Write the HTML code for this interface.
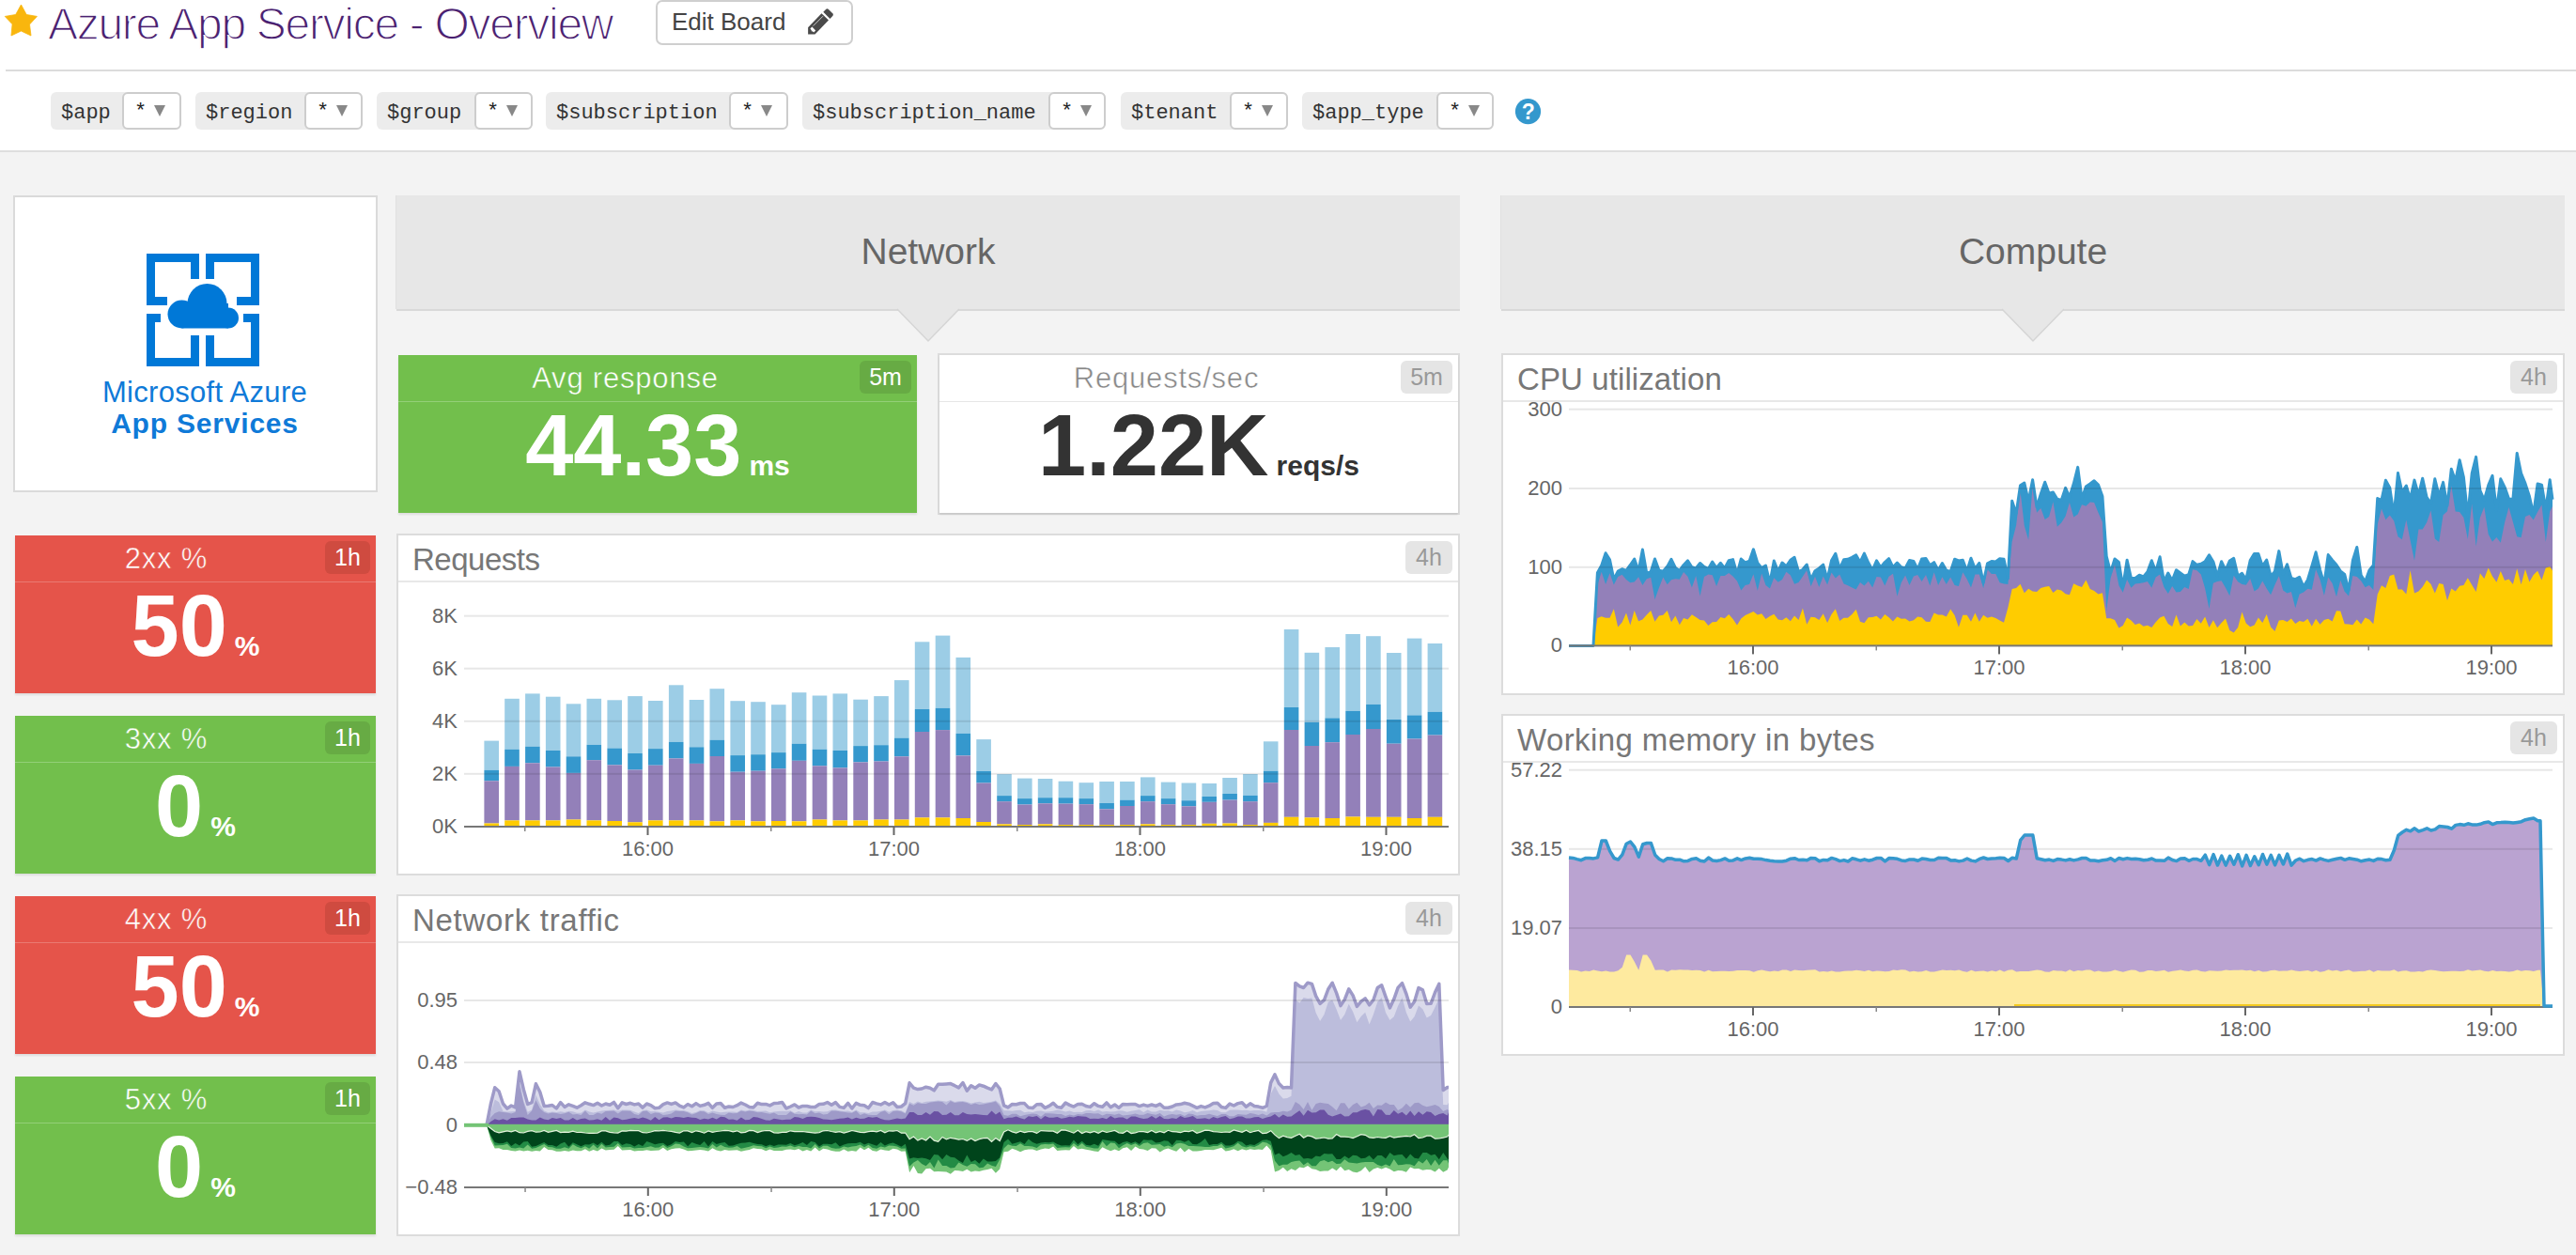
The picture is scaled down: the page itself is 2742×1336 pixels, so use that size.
<!DOCTYPE html>
<html><head><meta charset="utf-8"><title>Azure App Service - Overview</title>
<style>
html,body{margin:0;padding:0;}
body{width:2742px;height:1336px;position:relative;overflow:hidden;background:#f3f3f3;font-family:'Liberation Sans', sans-serif;}
</style></head><body>

<div style="position:absolute;left:0;top:0;width:2742px;height:160px;background:#fff"></div>
<div style="position:absolute;left:6px;top:74px;width:2736px;height:2px;background:#dcdcdc"></div>
<div style="position:absolute;left:0;top:160px;width:2742px;height:2px;background:#dedede"></div>
<div style="position:absolute;left:51px;top:-2px;font:48px 'Liberation Sans', sans-serif;letter-spacing:-1.3px;color:#4a2170;-webkit-text-stroke:1.4px #fff;white-space:nowrap;line-height:56px">Azure App Service - Overview</div><div style="position:absolute;left:698px;top:0px;width:206px;height:44px;border:2px solid #cfcfcf;border-radius:7px;background:#fff"></div>
<div style="position:absolute;left:715px;top:6px;font:26px 'Liberation Sans', sans-serif;color:#444;white-space:nowrap;line-height:34px">Edit Board</div><div style="position:absolute;left:54px;top:98px;width:139px;height:40px;background:#ececec;border-radius:6px"></div>
<div style="position:absolute;left:65px;top:106px;font:22px 'Liberation Mono', monospace;color:#333;white-space:nowrap;line-height:30px">$app</div>
<div style="position:absolute;left:130px;top:98px;width:59px;height:36px;border:2px solid #cdcdcd;border-radius:6px;background:#fff"></div>
<div style="position:absolute;left:143px;top:105px;font:22px 'Liberation Mono', monospace;color:#222;white-space:nowrap;line-height:30px">*</div><div style="position:absolute;left:208px;top:98px;width:178px;height:40px;background:#ececec;border-radius:6px"></div>
<div style="position:absolute;left:219px;top:106px;font:22px 'Liberation Mono', monospace;color:#333;white-space:nowrap;line-height:30px">$region</div>
<div style="position:absolute;left:324px;top:98px;width:58px;height:36px;border:2px solid #cdcdcd;border-radius:6px;background:#fff"></div>
<div style="position:absolute;left:337px;top:105px;font:22px 'Liberation Mono', monospace;color:#222;white-space:nowrap;line-height:30px">*</div><div style="position:absolute;left:401px;top:98px;width:166px;height:40px;background:#ececec;border-radius:6px"></div>
<div style="position:absolute;left:412px;top:106px;font:22px 'Liberation Mono', monospace;color:#333;white-space:nowrap;line-height:30px">$group</div>
<div style="position:absolute;left:505px;top:98px;width:58px;height:36px;border:2px solid #cdcdcd;border-radius:6px;background:#fff"></div>
<div style="position:absolute;left:518px;top:105px;font:22px 'Liberation Mono', monospace;color:#222;white-space:nowrap;line-height:30px">*</div><div style="position:absolute;left:581px;top:98px;width:258px;height:40px;background:#ececec;border-radius:6px"></div>
<div style="position:absolute;left:592px;top:106px;font:22px 'Liberation Mono', monospace;color:#333;white-space:nowrap;line-height:30px">$subscription</div>
<div style="position:absolute;left:776px;top:98px;width:59px;height:36px;border:2px solid #cdcdcd;border-radius:6px;background:#fff"></div>
<div style="position:absolute;left:789px;top:105px;font:22px 'Liberation Mono', monospace;color:#222;white-space:nowrap;line-height:30px">*</div><div style="position:absolute;left:854px;top:98px;width:323px;height:40px;background:#ececec;border-radius:6px"></div>
<div style="position:absolute;left:865px;top:106px;font:22px 'Liberation Mono', monospace;color:#333;white-space:nowrap;line-height:30px">$subscription_name</div>
<div style="position:absolute;left:1116px;top:98px;width:57px;height:36px;border:2px solid #cdcdcd;border-radius:6px;background:#fff"></div>
<div style="position:absolute;left:1129px;top:105px;font:22px 'Liberation Mono', monospace;color:#222;white-space:nowrap;line-height:30px">*</div><div style="position:absolute;left:1193px;top:98px;width:178px;height:40px;background:#ececec;border-radius:6px"></div>
<div style="position:absolute;left:1204px;top:106px;font:22px 'Liberation Mono', monospace;color:#333;white-space:nowrap;line-height:30px">$tenant</div>
<div style="position:absolute;left:1309px;top:98px;width:58px;height:36px;border:2px solid #cdcdcd;border-radius:6px;background:#fff"></div>
<div style="position:absolute;left:1322px;top:105px;font:22px 'Liberation Mono', monospace;color:#222;white-space:nowrap;line-height:30px">*</div><div style="position:absolute;left:1386px;top:98px;width:204px;height:40px;background:#ececec;border-radius:6px"></div>
<div style="position:absolute;left:1397px;top:106px;font:22px 'Liberation Mono', monospace;color:#333;white-space:nowrap;line-height:30px">$app_type</div>
<div style="position:absolute;left:1529px;top:98px;width:57px;height:36px;border:2px solid #cdcdcd;border-radius:6px;background:#fff"></div>
<div style="position:absolute;left:1542px;top:105px;font:22px 'Liberation Mono', monospace;color:#222;white-space:nowrap;line-height:30px">*</div><div style="position:absolute;left:14px;top:208px;width:384px;height:312px;border:2px solid #dadada;background:#fff"></div><div style="position:absolute;left:16px;top:400px;width:404px;text-align:center;font:31px 'Liberation Sans', sans-serif;color:#0f7ad8;white-space:nowrap;line-height:36px;letter-spacing:0.3px">Microsoft Azure</div><div style="position:absolute;left:16px;top:433px;width:404px;text-align:center;font:bold 30px 'Liberation Sans', sans-serif;color:#0f7ad8;white-space:nowrap;line-height:36px;letter-spacing:0.8px">App Services</div><div style="position:absolute;left:16px;top:570px;width:384px;height:168px;background:#e5544a;box-shadow:0 2px 2px rgba(0,0,0,0.09)"></div><div style="position:absolute;left:16px;top:619px;width:384px;height:1px;background:#ea7a71"></div><div style="position:absolute;left:346px;top:576px;width:48px;height:35px;background:#cf4b40;border-radius:6px;font:25px 'Liberation Sans', sans-serif;color:#fff;text-align:center;line-height:35px">1h</div><div style="position:absolute;left:-23.0px;top:577px;width:400px;text-align:center;font:31px 'Liberation Sans', sans-serif;color:#fff;white-space:nowrap;line-height:36px;letter-spacing:0.8px;-webkit-text-stroke:0.5px #e5544a">2xx %</div><div style="position:absolute;left:16px;top:614px;width:384px;text-align:center;white-space:nowrap;color:#fff;line-height:110px"><span style="font:bold 92px 'Liberation Sans', sans-serif">50</span><span style="font:bold 30px 'Liberation Sans', sans-serif;margin-left:8px">%</span></div><div style="position:absolute;left:16px;top:762px;width:384px;height:168px;background:#72bf4c;box-shadow:0 2px 2px rgba(0,0,0,0.09)"></div><div style="position:absolute;left:16px;top:811px;width:384px;height:1px;background:#93cf77"></div><div style="position:absolute;left:346px;top:768px;width:48px;height:35px;background:#67ab44;border-radius:6px;font:25px 'Liberation Sans', sans-serif;color:#fff;text-align:center;line-height:35px">1h</div><div style="position:absolute;left:-23.0px;top:769px;width:400px;text-align:center;font:31px 'Liberation Sans', sans-serif;color:#fff;white-space:nowrap;line-height:36px;letter-spacing:0.8px;-webkit-text-stroke:0.5px #72bf4c">3xx %</div><div style="position:absolute;left:16px;top:806px;width:384px;text-align:center;white-space:nowrap;color:#fff;line-height:110px"><span style="font:bold 92px 'Liberation Sans', sans-serif">0</span><span style="font:bold 30px 'Liberation Sans', sans-serif;margin-left:8px">%</span></div><div style="position:absolute;left:16px;top:954px;width:384px;height:168px;background:#e5544a;box-shadow:0 2px 2px rgba(0,0,0,0.09)"></div><div style="position:absolute;left:16px;top:1003px;width:384px;height:1px;background:#ea7a71"></div><div style="position:absolute;left:346px;top:960px;width:48px;height:35px;background:#cf4b40;border-radius:6px;font:25px 'Liberation Sans', sans-serif;color:#fff;text-align:center;line-height:35px">1h</div><div style="position:absolute;left:-23.0px;top:961px;width:400px;text-align:center;font:31px 'Liberation Sans', sans-serif;color:#fff;white-space:nowrap;line-height:36px;letter-spacing:0.8px;-webkit-text-stroke:0.5px #e5544a">4xx %</div><div style="position:absolute;left:16px;top:998px;width:384px;text-align:center;white-space:nowrap;color:#fff;line-height:110px"><span style="font:bold 92px 'Liberation Sans', sans-serif">50</span><span style="font:bold 30px 'Liberation Sans', sans-serif;margin-left:8px">%</span></div><div style="position:absolute;left:16px;top:1146px;width:384px;height:168px;background:#72bf4c;box-shadow:0 2px 2px rgba(0,0,0,0.09)"></div><div style="position:absolute;left:16px;top:1195px;width:384px;height:1px;background:#93cf77"></div><div style="position:absolute;left:346px;top:1152px;width:48px;height:35px;background:#67ab44;border-radius:6px;font:25px 'Liberation Sans', sans-serif;color:#fff;text-align:center;line-height:35px">1h</div><div style="position:absolute;left:-23.0px;top:1153px;width:400px;text-align:center;font:31px 'Liberation Sans', sans-serif;color:#fff;white-space:nowrap;line-height:36px;letter-spacing:0.8px;-webkit-text-stroke:0.5px #72bf4c">5xx %</div><div style="position:absolute;left:16px;top:1190px;width:384px;text-align:center;white-space:nowrap;color:#fff;line-height:110px"><span style="font:bold 92px 'Liberation Sans', sans-serif">0</span><span style="font:bold 30px 'Liberation Sans', sans-serif;margin-left:8px">%</span></div><div style="position:absolute;left:422px;top:208px;width:1132px;height:121px;background:#e7e7e7;box-shadow:0 2px 0 #d9d9d9, -1px 0 0 #e0e0e0"></div><div style="position:absolute;left:422px;top:245px;width:1132px;text-align:center;font:39px 'Liberation Sans', sans-serif;color:#666;line-height:46px">Network</div><div style="position:absolute;left:1598px;top:208px;width:1132px;height:121px;background:#e7e7e7;box-shadow:0 2px 0 #d9d9d9, -1px 0 0 #e0e0e0"></div><div style="position:absolute;left:1598px;top:245px;width:1132px;text-align:center;font:39px 'Liberation Sans', sans-serif;color:#666;line-height:46px">Compute</div><div style="position:absolute;left:424px;top:378px;width:552px;height:168px;background:#72bf4c;box-shadow:0 2px 2px rgba(0,0,0,0.09)"></div><div style="position:absolute;left:424px;top:427px;width:552px;height:1px;background:#93cf77"></div><div style="position:absolute;left:915px;top:384px;width:55px;height:35px;background:#67ab44;border-radius:6px;font:25px 'Liberation Sans', sans-serif;color:#fff;text-align:center;line-height:35px">5m</div><div style="position:absolute;left:465.5px;top:385px;width:400px;text-align:center;font:31px 'Liberation Sans', sans-serif;color:#fff;white-space:nowrap;line-height:36px;letter-spacing:0.8px;-webkit-text-stroke:0.5px #72bf4c">Avg response</div><div style="position:absolute;left:424px;top:422px;width:552px;text-align:center;white-space:nowrap;color:#fff;line-height:110px"><span style="font:bold 92px 'Liberation Sans', sans-serif">44.33</span><span style="font:bold 30px 'Liberation Sans', sans-serif;margin-left:8px">ms</span></div><div style="position:absolute;left:998px;top:376px;width:552px;height:168px;border:2px solid #dcdcdc;background:#fff"></div><div style="position:absolute;left:1000px;top:378px;width:552px;height:168px;background:#fff;box-shadow:0 2px 2px rgba(0,0,0,0.09)"></div><div style="position:absolute;left:1000px;top:427px;width:552px;height:1px;background:#e6e6e6"></div><div style="position:absolute;left:1491px;top:384px;width:55px;height:35px;background:#e5e5e5;border-radius:6px;font:25px 'Liberation Sans', sans-serif;color:#999;text-align:center;line-height:35px">5m</div><div style="position:absolute;left:1041.5px;top:385px;width:400px;text-align:center;font:31px 'Liberation Sans', sans-serif;color:#888;white-space:nowrap;line-height:36px;letter-spacing:0.8px;-webkit-text-stroke:0.5px #fff">Requests/sec</div><div style="position:absolute;left:1000px;top:422px;width:552px;text-align:center;white-space:nowrap;color:#333;line-height:110px"><span style="font:bold 92px 'Liberation Sans', sans-serif">1.22K</span><span style="font:bold 30px 'Liberation Sans', sans-serif;margin-left:8px">reqs/s</span></div><div style="position:absolute;left:422px;top:568px;width:1128px;height:360px;border:2px solid #dcdcdc;background:#fff"></div><div style="position:absolute;left:424px;top:618px;width:1128px;height:2px;background:#e8e8e8"></div><div style="position:absolute;left:1496px;top:576px;width:50px;height:35px;background:#e5e5e5;border-radius:6px;font:25px 'Liberation Sans', sans-serif;color:#999;text-align:center;line-height:35px">4h</div><div style="position:absolute;left:439px;top:578px;font:33px 'Liberation Sans', sans-serif;color:#777;white-space:nowrap;line-height:36px;letter-spacing:-0.5px">Requests</div><div style="position:absolute;left:422px;top:952px;width:1128px;height:360px;border:2px solid #dcdcdc;background:#fff"></div><div style="position:absolute;left:424px;top:1002px;width:1128px;height:2px;background:#e8e8e8"></div><div style="position:absolute;left:1496px;top:960px;width:50px;height:35px;background:#e5e5e5;border-radius:6px;font:25px 'Liberation Sans', sans-serif;color:#999;text-align:center;line-height:35px">4h</div><div style="position:absolute;left:439px;top:962px;font:33px 'Liberation Sans', sans-serif;color:#777;white-space:nowrap;line-height:36px;letter-spacing:0.7px">Network traffic</div><div style="position:absolute;left:1598px;top:376px;width:1128px;height:360px;border:2px solid #dcdcdc;background:#fff"></div><div style="position:absolute;left:1600px;top:426px;width:1128px;height:2px;background:#e8e8e8"></div><div style="position:absolute;left:2672px;top:384px;width:50px;height:35px;background:#e5e5e5;border-radius:6px;font:25px 'Liberation Sans', sans-serif;color:#999;text-align:center;line-height:35px">4h</div><div style="position:absolute;left:1615px;top:386px;font:33px 'Liberation Sans', sans-serif;color:#777;white-space:nowrap;line-height:36px;letter-spacing:0.1px">CPU utilization</div><div style="position:absolute;left:1598px;top:760px;width:1128px;height:360px;border:2px solid #dcdcdc;background:#fff"></div><div style="position:absolute;left:1600px;top:810px;width:1128px;height:2px;background:#e8e8e8"></div><div style="position:absolute;left:2672px;top:768px;width:50px;height:35px;background:#e5e5e5;border-radius:6px;font:25px 'Liberation Sans', sans-serif;color:#999;text-align:center;line-height:35px">4h</div><div style="position:absolute;left:1615px;top:770px;font:33px 'Liberation Sans', sans-serif;color:#777;white-space:nowrap;line-height:36px;letter-spacing:0.4px">Working memory in bytes</div>
<svg style="position:absolute;left:0;top:0" width="2742" height="1336" viewBox="0 0 2742 1336">
<path d="M22.47 5.0 L28.2 15.5 L39.4 17.45 L31.5 26 L33 38 L22.47 33 L11.95 38 L13.1 25.8 L5.26 17.45 L16.7 15.5 Z" fill="#f9b60e" stroke="#f9b60e" stroke-width="0.8" stroke-linejoin="round"/><path d="M874.5 14.3 L882 21.5 L867.5 36.5 L860.1 36.5 L860.1 29.3 Z" fill="#4a4a4a"/><path d="M876.3 12.7 L879.3 9.7 Q880.5 8.7 881.7 9.7 L886.5 14.4 Q887.4 15.6 886.5 16.8 L883.5 19.9 Z" fill="#4a4a4a"/><path d="M862.4 30.6 L864.4 28.6 L868.2 32.4 L866.2 34.4 L864.9 33.2 L863.8 33.4 L863.8 32.2 Z" fill="#fff"/><line x1="865.6" y1="27.6" x2="876" y2="17.2" stroke="#fff" stroke-width="0.7"/><path d="M164 112 L176 112 L170 124 Z" fill="#888"/><path d="M358 112 L370 112 L364 124 Z" fill="#888"/><path d="M539 112 L551 112 L545 124 Z" fill="#888"/><path d="M810 112 L822 112 L816 124 Z" fill="#888"/><path d="M1150 112 L1162 112 L1156 124 Z" fill="#888"/><path d="M1343 112 L1355 112 L1349 124 Z" fill="#888"/><path d="M1563 112 L1575 112 L1569 124 Z" fill="#888"/><circle cx="1626.5" cy="118.7" r="13.6" fill="#3498cd"/><text x="1626.8" y="127" text-anchor="middle" font-family="Liberation Sans" font-weight="bold" font-size="23" fill="#fff">?</text><rect x="156" y="270" width="56" height="9" fill="#0078d7"/><rect x="156" y="270" width="9" height="55" fill="#0078d7"/><rect x="203" y="270" width="9" height="27" fill="#0078d7"/><rect x="156" y="316" width="22" height="9" fill="#0078d7"/><rect x="219" y="270" width="57" height="9" fill="#0078d7"/><rect x="267" y="270" width="9" height="55" fill="#0078d7"/><rect x="219" y="270" width="9" height="27" fill="#0078d7"/><rect x="252" y="316" width="24" height="9" fill="#0078d7"/><rect x="156" y="334" width="15" height="9" fill="#0078d7"/><rect x="156" y="334" width="9" height="56" fill="#0078d7"/><rect x="156" y="381" width="56" height="9" fill="#0078d7"/><rect x="203" y="357" width="9" height="33" fill="#0078d7"/><rect x="259" y="334" width="17" height="9" fill="#0078d7"/><rect x="267" y="334" width="9" height="56" fill="#0078d7"/><rect x="219" y="381" width="57" height="9" fill="#0078d7"/><rect x="219" y="357" width="9" height="33" fill="#0078d7"/><g fill="#fff" stroke="#fff" stroke-width="7"><circle cx="193.5" cy="334.5" r="15"/><circle cx="220.5" cy="323" r="21"/><circle cx="243" cy="338.5" r="11"/><rect x="193.5" y="323" width="49.5" height="26.5"/></g><g fill="#0078d7"><circle cx="193.5" cy="334.5" r="15"/><circle cx="220.5" cy="323" r="21"/><circle cx="243" cy="338.5" r="11"/><rect x="193.5" y="323" width="49.5" height="26.5"/></g><path d="M955.0 329 L988.0 363 L1021.0 329" fill="#e7e7e7" stroke="#d5d5d5" stroke-width="1.5"/><rect x="957.0" y="326" width="62" height="4" fill="#e7e7e7"/><path d="M2131.0 329 L2164.0 363 L2197.0 329" fill="#e7e7e7" stroke="#d5d5d5" stroke-width="1.5"/><rect x="2133.0" y="326" width="62" height="4" fill="#e7e7e7"/><text x="487" y="662.7" text-anchor="end" font-family="Liberation Sans" font-size="22" fill="#666">8K</text><text x="487" y="718.7" text-anchor="end" font-family="Liberation Sans" font-size="22" fill="#666">6K</text><text x="487" y="774.8" text-anchor="end" font-family="Liberation Sans" font-size="22" fill="#666">4K</text><text x="487" y="830.8" text-anchor="end" font-family="Liberation Sans" font-size="22" fill="#666">2K</text><text x="487" y="887" text-anchor="end" font-family="Liberation Sans" font-size="22" fill="#666">0K</text><rect x="515.4" y="788.6" width="15.6" height="31.2" fill="#9ccde6"/><rect x="515.4" y="819.8" width="15.6" height="11.5" fill="#3598cd"/><rect x="515.4" y="831.3" width="15.6" height="45.2" fill="#9380b9"/><rect x="515.4" y="876.5" width="15.6" height="3.5" fill="#ffcc00"/><rect x="537.2" y="743.8" width="15.6" height="53.9" fill="#9ccde6"/><rect x="537.2" y="797.7" width="15.6" height="18.2" fill="#3598cd"/><rect x="537.2" y="815.9" width="15.6" height="57.5" fill="#9380b9"/><rect x="537.2" y="873.4" width="15.6" height="6.6" fill="#ffcc00"/><rect x="559.1" y="738.4" width="15.6" height="56.3" fill="#9ccde6"/><rect x="559.1" y="794.7" width="15.6" height="17.6" fill="#3598cd"/><rect x="559.1" y="812.3" width="15.6" height="61.1" fill="#9380b9"/><rect x="559.1" y="873.4" width="15.6" height="6.6" fill="#ffcc00"/><rect x="580.9" y="741.7" width="15.6" height="57.3" fill="#9ccde6"/><rect x="580.9" y="799" width="15.6" height="17.5" fill="#3598cd"/><rect x="580.9" y="816.5" width="15.6" height="56.9" fill="#9380b9"/><rect x="580.9" y="873.4" width="15.6" height="6.6" fill="#ffcc00"/><rect x="602.7" y="749.3" width="15.6" height="56.0" fill="#9ccde6"/><rect x="602.7" y="805.3" width="15.6" height="17.6" fill="#3598cd"/><rect x="602.7" y="822.9" width="15.6" height="49.6" fill="#9380b9"/><rect x="602.7" y="872.5" width="15.6" height="7.5" fill="#ffcc00"/><rect x="624.5" y="743.8" width="15.6" height="49.1" fill="#9ccde6"/><rect x="624.5" y="792.9" width="15.6" height="16.3" fill="#3598cd"/><rect x="624.5" y="809.2" width="15.6" height="64.2" fill="#9380b9"/><rect x="624.5" y="873.4" width="15.6" height="6.6" fill="#ffcc00"/><rect x="646.4" y="745.3" width="15.6" height="51.2" fill="#9ccde6"/><rect x="646.4" y="796.5" width="15.6" height="17.9" fill="#3598cd"/><rect x="646.4" y="814.4" width="15.6" height="59.6" fill="#9380b9"/><rect x="646.4" y="874" width="15.6" height="6.0" fill="#ffcc00"/><rect x="668.2" y="741.1" width="15.6" height="60.9" fill="#9ccde6"/><rect x="668.2" y="802" width="15.6" height="17.5" fill="#3598cd"/><rect x="668.2" y="819.5" width="15.6" height="55.8" fill="#9380b9"/><rect x="668.2" y="875.3" width="15.6" height="4.7" fill="#ffcc00"/><rect x="690.0" y="746" width="15.6" height="51.1" fill="#9ccde6"/><rect x="690.0" y="797.1" width="15.6" height="17.6" fill="#3598cd"/><rect x="690.0" y="814.7" width="15.6" height="58.7" fill="#9380b9"/><rect x="690.0" y="873.4" width="15.6" height="6.6" fill="#ffcc00"/><rect x="711.9" y="729.3" width="15.6" height="60.6" fill="#9ccde6"/><rect x="711.9" y="789.9" width="15.6" height="17.5" fill="#3598cd"/><rect x="711.9" y="807.4" width="15.6" height="66.0" fill="#9380b9"/><rect x="711.9" y="873.4" width="15.6" height="6.6" fill="#ffcc00"/><rect x="733.7" y="745" width="15.6" height="50.3" fill="#9ccde6"/><rect x="733.7" y="795.3" width="15.6" height="17.6" fill="#3598cd"/><rect x="733.7" y="812.9" width="15.6" height="60.5" fill="#9380b9"/><rect x="733.7" y="873.4" width="15.6" height="6.6" fill="#ffcc00"/><rect x="755.5" y="733.2" width="15.6" height="54.5" fill="#9ccde6"/><rect x="755.5" y="787.7" width="15.6" height="17.3" fill="#3598cd"/><rect x="755.5" y="805" width="15.6" height="69.3" fill="#9380b9"/><rect x="755.5" y="874.3" width="15.6" height="5.7" fill="#ffcc00"/><rect x="777.4" y="746.2" width="15.6" height="57.9" fill="#9ccde6"/><rect x="777.4" y="804.1" width="15.6" height="17.6" fill="#3598cd"/><rect x="777.4" y="821.7" width="15.6" height="51.7" fill="#9380b9"/><rect x="777.4" y="873.4" width="15.6" height="6.6" fill="#ffcc00"/><rect x="799.2" y="747.2" width="15.6" height="56.0" fill="#9ccde6"/><rect x="799.2" y="803.2" width="15.6" height="17.5" fill="#3598cd"/><rect x="799.2" y="820.7" width="15.6" height="53.6" fill="#9380b9"/><rect x="799.2" y="874.3" width="15.6" height="5.7" fill="#ffcc00"/><rect x="821.0" y="750.2" width="15.6" height="50.9" fill="#9ccde6"/><rect x="821.0" y="801.1" width="15.6" height="17.2" fill="#3598cd"/><rect x="821.0" y="818.3" width="15.6" height="55.7" fill="#9380b9"/><rect x="821.0" y="874" width="15.6" height="6.0" fill="#ffcc00"/><rect x="842.8" y="737.2" width="15.6" height="54.5" fill="#9ccde6"/><rect x="842.8" y="791.7" width="15.6" height="18.1" fill="#3598cd"/><rect x="842.8" y="809.8" width="15.6" height="64.5" fill="#9380b9"/><rect x="842.8" y="874.3" width="15.6" height="5.7" fill="#ffcc00"/><rect x="864.7" y="740.5" width="15.6" height="57.2" fill="#9ccde6"/><rect x="864.7" y="797.7" width="15.6" height="17.6" fill="#3598cd"/><rect x="864.7" y="815.3" width="15.6" height="57.2" fill="#9380b9"/><rect x="864.7" y="872.5" width="15.6" height="7.5" fill="#ffcc00"/><rect x="886.5" y="738.4" width="15.6" height="60.6" fill="#9ccde6"/><rect x="886.5" y="799" width="15.6" height="18.4" fill="#3598cd"/><rect x="886.5" y="817.4" width="15.6" height="56.0" fill="#9380b9"/><rect x="886.5" y="873.4" width="15.6" height="6.6" fill="#ffcc00"/><rect x="908.3" y="744.7" width="15.6" height="49.4" fill="#9ccde6"/><rect x="908.3" y="794.1" width="15.6" height="17.3" fill="#3598cd"/><rect x="908.3" y="811.4" width="15.6" height="62.0" fill="#9380b9"/><rect x="908.3" y="873.4" width="15.6" height="6.6" fill="#ffcc00"/><rect x="930.2" y="741.1" width="15.6" height="52.1" fill="#9ccde6"/><rect x="930.2" y="793.2" width="15.6" height="17.3" fill="#3598cd"/><rect x="930.2" y="810.5" width="15.6" height="62.0" fill="#9380b9"/><rect x="930.2" y="872.5" width="15.6" height="7.5" fill="#ffcc00"/><rect x="952.0" y="724.1" width="15.6" height="61.5" fill="#9ccde6"/><rect x="952.0" y="785.6" width="15.6" height="19.7" fill="#3598cd"/><rect x="952.0" y="805.3" width="15.6" height="67.2" fill="#9380b9"/><rect x="952.0" y="872.5" width="15.6" height="7.5" fill="#ffcc00"/><rect x="973.8" y="683.3" width="15.6" height="71.7" fill="#9ccde6"/><rect x="973.8" y="755" width="15.6" height="24.0" fill="#3598cd"/><rect x="973.8" y="779" width="15.6" height="91.4" fill="#9380b9"/><rect x="973.8" y="870.4" width="15.6" height="9.6" fill="#ffcc00"/><rect x="995.7" y="676.6" width="15.6" height="77.2" fill="#9ccde6"/><rect x="995.7" y="753.8" width="15.6" height="23.3" fill="#3598cd"/><rect x="995.7" y="777.1" width="15.6" height="93.3" fill="#9380b9"/><rect x="995.7" y="870.4" width="15.6" height="9.6" fill="#ffcc00"/><rect x="1017.5" y="699.9" width="15.6" height="80.9" fill="#9ccde6"/><rect x="1017.5" y="780.8" width="15.6" height="23.6" fill="#3598cd"/><rect x="1017.5" y="804.4" width="15.6" height="66.6" fill="#9380b9"/><rect x="1017.5" y="871" width="15.6" height="9.0" fill="#ffcc00"/><rect x="1039.3" y="787.1" width="15.6" height="33.9" fill="#9ccde6"/><rect x="1039.3" y="821" width="15.6" height="12.5" fill="#3598cd"/><rect x="1039.3" y="833.5" width="15.6" height="41.5" fill="#9380b9"/><rect x="1039.3" y="875" width="15.6" height="5.0" fill="#ffcc00"/><rect x="1061.2" y="824.1" width="15.6" height="23.0" fill="#9ccde6"/><rect x="1061.2" y="847.1" width="15.6" height="6.1" fill="#3598cd"/><rect x="1061.2" y="853.2" width="15.6" height="24.2" fill="#9380b9"/><rect x="1061.2" y="877.4" width="15.6" height="2.6" fill="#ffcc00"/><rect x="1083.0" y="828.6" width="15.6" height="21.5" fill="#9ccde6"/><rect x="1083.0" y="850.1" width="15.6" height="6.4" fill="#3598cd"/><rect x="1083.0" y="856.5" width="15.6" height="21.5" fill="#9380b9"/><rect x="1083.0" y="878" width="15.6" height="2.0" fill="#ffcc00"/><rect x="1104.8" y="829" width="15.6" height="20.2" fill="#9ccde6"/><rect x="1104.8" y="849.2" width="15.6" height="6.1" fill="#3598cd"/><rect x="1104.8" y="855.3" width="15.6" height="22.1" fill="#9380b9"/><rect x="1104.8" y="877.4" width="15.6" height="2.6" fill="#ffcc00"/><rect x="1126.6" y="831.7" width="15.6" height="17.5" fill="#9ccde6"/><rect x="1126.6" y="849.2" width="15.6" height="6.4" fill="#3598cd"/><rect x="1126.6" y="855.6" width="15.6" height="22.4" fill="#9380b9"/><rect x="1126.6" y="878" width="15.6" height="2.0" fill="#ffcc00"/><rect x="1148.5" y="833.2" width="15.6" height="16.9" fill="#9ccde6"/><rect x="1148.5" y="850.1" width="15.6" height="6.1" fill="#3598cd"/><rect x="1148.5" y="856.2" width="15.6" height="21.8" fill="#9380b9"/><rect x="1148.5" y="878" width="15.6" height="2.0" fill="#ffcc00"/><rect x="1170.3" y="832" width="15.6" height="23.0" fill="#9ccde6"/><rect x="1170.3" y="855" width="15.6" height="6.3" fill="#3598cd"/><rect x="1170.3" y="861.3" width="15.6" height="16.7" fill="#9380b9"/><rect x="1170.3" y="878" width="15.6" height="2.0" fill="#ffcc00"/><rect x="1192.1" y="832" width="15.6" height="19.6" fill="#9ccde6"/><rect x="1192.1" y="851.6" width="15.6" height="6.4" fill="#3598cd"/><rect x="1192.1" y="858" width="15.6" height="20.0" fill="#9380b9"/><rect x="1192.1" y="878" width="15.6" height="2.0" fill="#ffcc00"/><rect x="1214.0" y="827.4" width="15.6" height="19.7" fill="#9ccde6"/><rect x="1214.0" y="847.1" width="15.6" height="6.1" fill="#3598cd"/><rect x="1214.0" y="853.2" width="15.6" height="24.2" fill="#9380b9"/><rect x="1214.0" y="877.4" width="15.6" height="2.6" fill="#ffcc00"/><rect x="1235.8" y="832.6" width="15.6" height="17.5" fill="#9ccde6"/><rect x="1235.8" y="850.1" width="15.6" height="6.1" fill="#3598cd"/><rect x="1235.8" y="856.2" width="15.6" height="21.8" fill="#9380b9"/><rect x="1235.8" y="878" width="15.6" height="2.0" fill="#ffcc00"/><rect x="1257.6" y="833.5" width="15.6" height="18.7" fill="#9ccde6"/><rect x="1257.6" y="852.2" width="15.6" height="6.1" fill="#3598cd"/><rect x="1257.6" y="858.3" width="15.6" height="19.7" fill="#9380b9"/><rect x="1257.6" y="878" width="15.6" height="2.0" fill="#ffcc00"/><rect x="1279.4" y="834" width="15.6" height="14.0" fill="#9ccde6"/><rect x="1279.4" y="848" width="15.6" height="5.8" fill="#3598cd"/><rect x="1279.4" y="853.8" width="15.6" height="23.0" fill="#9380b9"/><rect x="1279.4" y="876.8" width="15.6" height="3.2" fill="#ffcc00"/><rect x="1301.3" y="828" width="15.6" height="17.0" fill="#9ccde6"/><rect x="1301.3" y="845" width="15.6" height="6.6" fill="#3598cd"/><rect x="1301.3" y="851.6" width="15.6" height="24.9" fill="#9380b9"/><rect x="1301.3" y="876.5" width="15.6" height="3.5" fill="#ffcc00"/><rect x="1323.1" y="824" width="15.6" height="22.8" fill="#9ccde6"/><rect x="1323.1" y="846.8" width="15.6" height="6.4" fill="#3598cd"/><rect x="1323.1" y="853.2" width="15.6" height="24.8" fill="#9380b9"/><rect x="1323.1" y="878" width="15.6" height="2.0" fill="#ffcc00"/><rect x="1344.9" y="789.3" width="15.6" height="31.4" fill="#9ccde6"/><rect x="1344.9" y="820.7" width="15.6" height="12.5" fill="#3598cd"/><rect x="1344.9" y="833.2" width="15.6" height="42.7" fill="#9380b9"/><rect x="1344.9" y="875.9" width="15.6" height="4.1" fill="#ffcc00"/><rect x="1366.8" y="670" width="15.6" height="83.0" fill="#9ccde6"/><rect x="1366.8" y="753" width="15.6" height="24.0" fill="#3598cd"/><rect x="1366.8" y="777" width="15.6" height="92.8" fill="#9380b9"/><rect x="1366.8" y="869.8" width="15.6" height="10.2" fill="#ffcc00"/><rect x="1388.6" y="694.8" width="15.6" height="74.2" fill="#9ccde6"/><rect x="1388.6" y="769" width="15.6" height="25.0" fill="#3598cd"/><rect x="1388.6" y="794" width="15.6" height="76.4" fill="#9380b9"/><rect x="1388.6" y="870.4" width="15.6" height="9.6" fill="#ffcc00"/><rect x="1410.4" y="689" width="15.6" height="75.4" fill="#9ccde6"/><rect x="1410.4" y="764.4" width="15.6" height="25.8" fill="#3598cd"/><rect x="1410.4" y="790.2" width="15.6" height="80.8" fill="#9380b9"/><rect x="1410.4" y="871" width="15.6" height="9.0" fill="#ffcc00"/><rect x="1432.3" y="675" width="15.6" height="81.9" fill="#9ccde6"/><rect x="1432.3" y="756.9" width="15.6" height="25.1" fill="#3598cd"/><rect x="1432.3" y="782" width="15.6" height="87.5" fill="#9380b9"/><rect x="1432.3" y="869.5" width="15.6" height="10.5" fill="#ffcc00"/><rect x="1454.1" y="677.2" width="15.6" height="72.7" fill="#9ccde6"/><rect x="1454.1" y="749.9" width="15.6" height="26.1" fill="#3598cd"/><rect x="1454.1" y="776" width="15.6" height="93.8" fill="#9380b9"/><rect x="1454.1" y="869.8" width="15.6" height="10.2" fill="#ffcc00"/><rect x="1475.9" y="695" width="15.6" height="71.0" fill="#9ccde6"/><rect x="1475.9" y="766" width="15.6" height="25.7" fill="#3598cd"/><rect x="1475.9" y="791.7" width="15.6" height="78.1" fill="#9380b9"/><rect x="1475.9" y="869.8" width="15.6" height="10.2" fill="#ffcc00"/><rect x="1497.8" y="679.6" width="15.6" height="81.8" fill="#9ccde6"/><rect x="1497.8" y="761.4" width="15.6" height="25.1" fill="#3598cd"/><rect x="1497.8" y="786.5" width="15.6" height="84.5" fill="#9380b9"/><rect x="1497.8" y="871" width="15.6" height="9.0" fill="#ffcc00"/><rect x="1519.6" y="685" width="15.6" height="72.8" fill="#9ccde6"/><rect x="1519.6" y="757.8" width="15.6" height="24.8" fill="#3598cd"/><rect x="1519.6" y="782.6" width="15.6" height="87.2" fill="#9380b9"/><rect x="1519.6" y="869.8" width="15.6" height="10.2" fill="#ffcc00"/><rect x="494" y="654.7" width="1048" height="2" fill="rgba(0,0,0,0.095)"/><rect x="494" y="710.7" width="1048" height="2" fill="rgba(0,0,0,0.095)"/><rect x="494" y="766.8" width="1048" height="2" fill="rgba(0,0,0,0.095)"/><rect x="494" y="822.8" width="1048" height="2" fill="rgba(0,0,0,0.095)"/><rect x="494" y="879" width="1048" height="2" fill="#777"/><rect x="688.5" y="880" width="2" height="9" fill="#666"/><text x="689.5" y="911" text-anchor="middle" font-family="Liberation Sans" font-size="22" fill="#666">16:00</text><rect x="950.5" y="880" width="2" height="9" fill="#666"/><text x="951.5" y="911" text-anchor="middle" font-family="Liberation Sans" font-size="22" fill="#666">17:00</text><rect x="1212.5" y="880" width="2" height="9" fill="#666"/><text x="1213.5" y="911" text-anchor="middle" font-family="Liberation Sans" font-size="22" fill="#666">18:00</text><rect x="1474.5" y="880" width="2" height="9" fill="#666"/><text x="1475.5" y="911" text-anchor="middle" font-family="Liberation Sans" font-size="22" fill="#666">19:00</text><rect x="558.0" y="880" width="1.5" height="5" fill="#888"/><rect x="820.0" y="880" width="1.5" height="5" fill="#888"/><rect x="1082.0" y="880" width="1.5" height="5" fill="#888"/><rect x="1344.0" y="880" width="1.5" height="5" fill="#888"/><text x="487" y="1072" text-anchor="end" font-family="Liberation Sans" font-size="22" fill="#666">0.95</text><text x="487" y="1138" text-anchor="end" font-family="Liberation Sans" font-size="22" fill="#666">0.48</text><text x="487" y="1204.8" text-anchor="end" font-family="Liberation Sans" font-size="22" fill="#666">0</text><text x="487" y="1271" text-anchor="end" font-family="Liberation Sans" font-size="22" fill="#666">−0.48</text><path d="M518.0,1197.8 L522.4,1175.2 L526.7,1157.8 L531.1,1161.7 L535.5,1175.0 L539.9,1180.1 L544.2,1177.0 L548.6,1178.9 L553.0,1140.8 L557.3,1159.7 L561.7,1175.5 L566.1,1173.7 L570.4,1153.8 L574.8,1162.5 L579.2,1177.5 L583.5,1177.2 L587.9,1176.5 L592.3,1180.0 L596.7,1173.6 L601.0,1178.4 L605.4,1175.8 L609.8,1177.4 L614.1,1179.2 L618.5,1176.7 L622.9,1173.8 L627.2,1175.3 L631.6,1176.6 L636.0,1174.3 L640.4,1177.0 L644.7,1175.0 L649.1,1176.2 L653.5,1173.4 L657.8,1179.7 L662.2,1173.9 L666.6,1175.5 L671.0,1174.3 L675.3,1175.9 L679.7,1175.0 L684.1,1179.1 L688.4,1175.0 L692.8,1176.6 L697.2,1179.7 L701.5,1179.3 L705.9,1175.6 L710.3,1173.9 L714.6,1175.4 L719.0,1173.9 L723.4,1177.2 L727.8,1178.9 L732.1,1175.5 L736.5,1177.7 L740.9,1174.6 L745.2,1177.4 L749.6,1176.3 L754.0,1174.4 L758.4,1179.3 L762.7,1175.1 L767.1,1174.5 L771.5,1179.2 L775.8,1177.9 L780.2,1178.5 L784.6,1176.7 L788.9,1174.1 L793.3,1176.0 L797.7,1178.5 L802.0,1178.9 L806.4,1174.3 L810.8,1175.6 L815.2,1175.4 L819.5,1176.9 L823.9,1174.5 L828.3,1174.3 L832.6,1173.5 L837.0,1179.9 L841.4,1178.0 L845.8,1175.9 L850.1,1179.0 L854.5,1177.4 L858.9,1177.5 L863.2,1178.5 L867.6,1178.5 L872.0,1175.5 L876.3,1175.3 L880.7,1173.5 L885.1,1176.3 L889.5,1173.6 L893.8,1178.4 L898.2,1179.4 L902.6,1174.3 L906.9,1180.0 L911.3,1174.3 L915.7,1176.3 L920.0,1176.7 L924.4,1179.6 L928.8,1173.5 L933.2,1174.9 L937.5,1175.9 L941.9,1173.4 L946.3,1176.0 L950.6,1173.7 L955.0,1178.5 L959.4,1178.0 L963.7,1174.7 L968.1,1152.8 L972.5,1158.2 L976.9,1159.6 L981.2,1159.0 L985.6,1157.2 L990.0,1158.2 L994.3,1160.8 L998.7,1154.2 L1003.1,1154.3 L1007.4,1153.9 L1011.8,1153.6 L1016.2,1155.7 L1020.5,1157.9 L1024.9,1152.5 L1029.3,1161.2 L1033.7,1155.7 L1038.0,1158.3 L1042.4,1154.9 L1046.8,1156.2 L1051.1,1158.2 L1055.5,1159.9 L1059.9,1153.5 L1064.2,1159.0 L1068.6,1176.8 L1073.0,1178.9 L1077.4,1175.5 L1081.7,1175.7 L1086.1,1174.5 L1090.5,1174.6 L1094.8,1179.1 L1099.2,1179.6 L1103.6,1175.7 L1108.0,1175.4 L1112.3,1179.4 L1116.7,1177.4 L1121.1,1174.3 L1125.4,1178.4 L1129.8,1179.2 L1134.2,1174.0 L1138.5,1176.4 L1142.9,1178.1 L1147.3,1175.5 L1151.7,1175.3 L1156.0,1177.5 L1160.4,1178.4 L1164.8,1174.7 L1169.1,1177.4 L1173.5,1178.3 L1177.9,1173.9 L1182.2,1178.7 L1186.6,1176.0 L1191.0,1179.3 L1195.3,1175.4 L1199.7,1175.7 L1204.1,1175.4 L1208.5,1175.5 L1212.8,1177.6 L1217.2,1176.1 L1221.6,1177.4 L1225.9,1176.0 L1230.3,1177.4 L1234.7,1175.3 L1239.1,1179.2 L1243.4,1179.3 L1247.8,1178.0 L1252.2,1175.9 L1256.5,1175.6 L1260.9,1174.3 L1265.3,1175.2 L1269.6,1177.2 L1274.0,1179.3 L1278.4,1177.6 L1282.8,1178.9 L1287.1,1177.2 L1291.5,1174.4 L1295.9,1174.2 L1300.2,1178.5 L1304.6,1179.4 L1309.0,1175.1 L1313.3,1177.0 L1317.7,1174.6 L1322.1,1173.8 L1326.5,1178.2 L1330.8,1174.8 L1335.2,1177.5 L1339.6,1178.1 L1343.9,1179.3 L1348.3,1177.5 L1352.7,1152.6 L1357.0,1143.9 L1361.4,1153.6 L1365.8,1157.9 L1370.2,1157.6 L1374.5,1158.1 L1378.9,1046.4 L1383.3,1049.8 L1387.6,1051.5 L1392.0,1046.2 L1396.4,1047.4 L1400.7,1060.4 L1405.1,1068.4 L1409.5,1064.7 L1413.8,1053.0 L1418.2,1046.3 L1422.6,1057.1 L1427.0,1070.6 L1431.3,1064.1 L1435.7,1052.8 L1440.1,1059.6 L1444.4,1071.4 L1448.8,1066.2 L1453.2,1062.9 L1457.6,1069.8 L1461.9,1064.5 L1466.3,1051.6 L1470.7,1048.8 L1475.0,1061.1 L1479.4,1072.9 L1483.8,1063.6 L1488.1,1051.4 L1492.5,1046.6 L1496.9,1058.0 L1501.2,1072.2 L1505.6,1066.2 L1510.0,1051.6 L1514.4,1053.9 L1518.7,1068.6 L1523.1,1068.3 L1527.5,1056.5 L1531.8,1047.4 L1536.2,1160.5 L1540.6,1157.5 L1542.0,1157.5 L1542.0,1197.8 L1540.6,1197.8 L1536.2,1197.8 L1531.8,1197.8 L1527.5,1197.8 L1523.1,1197.8 L1518.7,1197.8 L1514.4,1197.8 L1510.0,1197.8 L1505.6,1197.8 L1501.2,1197.8 L1496.9,1197.8 L1492.5,1197.8 L1488.1,1197.8 L1483.8,1197.8 L1479.4,1197.8 L1475.0,1197.8 L1470.7,1197.8 L1466.3,1197.8 L1461.9,1197.8 L1457.6,1197.8 L1453.2,1197.8 L1448.8,1197.8 L1444.4,1197.8 L1440.1,1197.8 L1435.7,1197.8 L1431.3,1197.8 L1427.0,1197.8 L1422.6,1197.8 L1418.2,1197.8 L1413.8,1197.8 L1409.5,1197.8 L1405.1,1197.8 L1400.7,1197.8 L1396.4,1197.8 L1392.0,1197.8 L1387.6,1197.8 L1383.3,1197.8 L1378.9,1197.8 L1374.5,1197.8 L1370.2,1197.8 L1365.8,1197.8 L1361.4,1197.8 L1357.0,1197.8 L1352.7,1197.8 L1348.3,1197.8 L1343.9,1197.8 L1339.6,1197.8 L1335.2,1197.8 L1330.8,1197.8 L1326.5,1197.8 L1322.1,1197.8 L1317.7,1197.8 L1313.3,1197.8 L1309.0,1197.8 L1304.6,1197.8 L1300.2,1197.8 L1295.9,1197.8 L1291.5,1197.8 L1287.1,1197.8 L1282.8,1197.8 L1278.4,1197.8 L1274.0,1197.8 L1269.6,1197.8 L1265.3,1197.8 L1260.9,1197.8 L1256.5,1197.8 L1252.2,1197.8 L1247.8,1197.8 L1243.4,1197.8 L1239.1,1197.8 L1234.7,1197.8 L1230.3,1197.8 L1225.9,1197.8 L1221.6,1197.8 L1217.2,1197.8 L1212.8,1197.8 L1208.5,1197.8 L1204.1,1197.8 L1199.7,1197.8 L1195.3,1197.8 L1191.0,1197.8 L1186.6,1197.8 L1182.2,1197.8 L1177.9,1197.8 L1173.5,1197.8 L1169.1,1197.8 L1164.8,1197.8 L1160.4,1197.8 L1156.0,1197.8 L1151.7,1197.8 L1147.3,1197.8 L1142.9,1197.8 L1138.5,1197.8 L1134.2,1197.8 L1129.8,1197.8 L1125.4,1197.8 L1121.1,1197.8 L1116.7,1197.8 L1112.3,1197.8 L1108.0,1197.8 L1103.6,1197.8 L1099.2,1197.8 L1094.8,1197.8 L1090.5,1197.8 L1086.1,1197.8 L1081.7,1197.8 L1077.4,1197.8 L1073.0,1197.8 L1068.6,1197.8 L1064.2,1197.8 L1059.9,1197.8 L1055.5,1197.8 L1051.1,1197.8 L1046.8,1197.8 L1042.4,1197.8 L1038.0,1197.8 L1033.7,1197.8 L1029.3,1197.8 L1024.9,1197.8 L1020.5,1197.8 L1016.2,1197.8 L1011.8,1197.8 L1007.4,1197.8 L1003.1,1197.8 L998.7,1197.8 L994.3,1197.8 L990.0,1197.8 L985.6,1197.8 L981.2,1197.8 L976.9,1197.8 L972.5,1197.8 L968.1,1197.8 L963.7,1197.8 L959.4,1197.8 L955.0,1197.8 L950.6,1197.8 L946.3,1197.8 L941.9,1197.8 L937.5,1197.8 L933.2,1197.8 L928.8,1197.8 L924.4,1197.8 L920.0,1197.8 L915.7,1197.8 L911.3,1197.8 L906.9,1197.8 L902.6,1197.8 L898.2,1197.8 L893.8,1197.8 L889.5,1197.8 L885.1,1197.8 L880.7,1197.8 L876.3,1197.8 L872.0,1197.8 L867.6,1197.8 L863.2,1197.8 L858.9,1197.8 L854.5,1197.8 L850.1,1197.8 L845.8,1197.8 L841.4,1197.8 L837.0,1197.8 L832.6,1197.8 L828.3,1197.8 L823.9,1197.8 L819.5,1197.8 L815.2,1197.8 L810.8,1197.8 L806.4,1197.8 L802.0,1197.8 L797.7,1197.8 L793.3,1197.8 L788.9,1197.8 L784.6,1197.8 L780.2,1197.8 L775.8,1197.8 L771.5,1197.8 L767.1,1197.8 L762.7,1197.8 L758.4,1197.8 L754.0,1197.8 L749.6,1197.8 L745.2,1197.8 L740.9,1197.8 L736.5,1197.8 L732.1,1197.8 L727.8,1197.8 L723.4,1197.8 L719.0,1197.8 L714.6,1197.8 L710.3,1197.8 L705.9,1197.8 L701.5,1197.8 L697.2,1197.8 L692.8,1197.8 L688.4,1197.8 L684.1,1197.8 L679.7,1197.8 L675.3,1197.8 L671.0,1197.8 L666.6,1197.8 L662.2,1197.8 L657.8,1197.8 L653.5,1197.8 L649.1,1197.8 L644.7,1197.8 L640.4,1197.8 L636.0,1197.8 L631.6,1197.8 L627.2,1197.8 L622.9,1197.8 L618.5,1197.8 L614.1,1197.8 L609.8,1197.8 L605.4,1197.8 L601.0,1197.8 L596.7,1197.8 L592.3,1197.8 L587.9,1197.8 L583.5,1197.8 L579.2,1197.8 L574.8,1197.8 L570.4,1197.8 L566.1,1197.8 L561.7,1197.8 L557.3,1197.8 L553.0,1197.8 L548.6,1197.8 L544.2,1197.8 L539.9,1197.8 L535.5,1197.8 L531.1,1197.8 L526.7,1197.8 L522.4,1197.8 L518.0,1197.8 Z" fill="#dadaeb"/><path d="M518.0,1197.8 L522.4,1185.1 L526.7,1170.4 L531.1,1173.2 L535.5,1183.0 L539.9,1183.5 L544.2,1183.3 L548.6,1182.9 L553.0,1149.8 L557.3,1171.5 L561.7,1183.7 L566.1,1181.4 L570.4,1165.8 L574.8,1175.4 L579.2,1182.6 L583.5,1184.2 L587.9,1183.6 L592.3,1184.0 L596.7,1183.2 L601.0,1183.9 L605.4,1182.8 L609.8,1183.2 L614.1,1184.7 L618.5,1184.7 L622.9,1181.6 L627.2,1183.5 L631.6,1184.4 L636.0,1183.5 L640.4,1182.6 L644.7,1181.9 L649.1,1181.8 L653.5,1181.6 L657.8,1182.7 L662.2,1181.4 L666.6,1181.4 L671.0,1181.7 L675.3,1183.4 L679.7,1185.0 L684.1,1182.1 L688.4,1181.5 L692.8,1183.2 L697.2,1183.1 L701.5,1183.8 L705.9,1184.5 L710.3,1183.1 L714.6,1182.6 L719.0,1181.4 L723.4,1181.9 L727.8,1181.9 L732.1,1183.2 L736.5,1185.1 L740.9,1183.9 L745.2,1181.9 L749.6,1182.3 L754.0,1184.6 L758.4,1182.6 L762.7,1183.6 L767.1,1184.2 L771.5,1183.7 L775.8,1183.4 L780.2,1183.6 L784.6,1183.9 L788.9,1181.5 L793.3,1182.5 L797.7,1181.5 L802.0,1181.9 L806.4,1182.9 L810.8,1182.7 L815.2,1182.5 L819.5,1184.3 L823.9,1183.5 L828.3,1182.9 L832.6,1182.7 L837.0,1182.9 L841.4,1182.3 L845.8,1184.7 L850.1,1183.0 L854.5,1184.5 L858.9,1184.6 L863.2,1181.5 L867.6,1183.2 L872.0,1182.9 L876.3,1183.6 L880.7,1183.2 L885.1,1181.5 L889.5,1181.5 L893.8,1182.3 L898.2,1182.7 L902.6,1182.5 L906.9,1183.7 L911.3,1181.5 L915.7,1184.2 L920.0,1184.3 L924.4,1185.1 L928.8,1183.4 L933.2,1183.6 L937.5,1182.7 L941.9,1181.4 L946.3,1183.8 L950.6,1182.1 L955.0,1181.5 L959.4,1182.3 L963.7,1184.6 L968.1,1172.9 L972.5,1174.9 L976.9,1172.6 L981.2,1173.9 L985.6,1172.8 L990.0,1172.6 L994.3,1172.0 L998.7,1171.6 L1003.1,1172.0 L1007.4,1172.8 L1011.8,1171.0 L1016.2,1173.1 L1020.5,1172.3 L1024.9,1171.9 L1029.3,1173.0 L1033.7,1174.5 L1038.0,1173.5 L1042.4,1172.7 L1046.8,1174.1 L1051.1,1173.6 L1055.5,1172.8 L1059.9,1171.6 L1064.2,1175.1 L1068.6,1182.2 L1073.0,1182.2 L1077.4,1182.7 L1081.7,1181.9 L1086.1,1181.7 L1090.5,1184.2 L1094.8,1183.5 L1099.2,1184.1 L1103.6,1182.8 L1108.0,1182.5 L1112.3,1183.5 L1116.7,1183.2 L1121.1,1182.7 L1125.4,1181.4 L1129.8,1182.3 L1134.2,1183.4 L1138.5,1182.4 L1142.9,1183.9 L1147.3,1183.7 L1151.7,1184.0 L1156.0,1182.3 L1160.4,1181.9 L1164.8,1182.9 L1169.1,1181.4 L1173.5,1183.6 L1177.9,1183.1 L1182.2,1183.5 L1186.6,1183.2 L1191.0,1182.3 L1195.3,1182.4 L1199.7,1183.8 L1204.1,1182.8 L1208.5,1181.9 L1212.8,1181.3 L1217.2,1183.9 L1221.6,1181.4 L1225.9,1183.4 L1230.3,1183.5 L1234.7,1181.7 L1239.1,1182.4 L1243.4,1182.3 L1247.8,1183.6 L1252.2,1181.4 L1256.5,1182.4 L1260.9,1184.2 L1265.3,1183.6 L1269.6,1181.9 L1274.0,1184.2 L1278.4,1183.1 L1282.8,1182.6 L1287.1,1182.3 L1291.5,1181.4 L1295.9,1182.1 L1300.2,1184.3 L1304.6,1184.3 L1309.0,1181.7 L1313.3,1181.6 L1317.7,1181.5 L1322.1,1181.9 L1326.5,1181.7 L1330.8,1182.6 L1335.2,1182.0 L1339.6,1182.0 L1343.9,1182.3 L1348.3,1183.7 L1352.7,1164.6 L1357.0,1155.9 L1361.4,1164.5 L1365.8,1169.6 L1370.2,1169.1 L1374.5,1166.8 L1378.9,1064.2 L1383.3,1067.7 L1387.6,1062.1 L1392.0,1063.0 L1396.4,1062.5 L1400.7,1078.3 L1405.1,1086.9 L1409.5,1080.1 L1413.8,1066.7 L1418.2,1064.4 L1422.6,1074.5 L1427.0,1086.0 L1431.3,1079.9 L1435.7,1068.7 L1440.1,1077.0 L1444.4,1088.2 L1448.8,1082.0 L1453.2,1077.7 L1457.6,1090.5 L1461.9,1079.9 L1466.3,1066.6 L1470.7,1062.1 L1475.0,1078.0 L1479.4,1086.0 L1483.8,1082.3 L1488.1,1070.8 L1492.5,1062.1 L1496.9,1077.9 L1501.2,1087.6 L1505.6,1082.2 L1510.0,1070.6 L1514.4,1074.2 L1518.7,1083.5 L1523.1,1081.0 L1527.5,1072.3 L1531.8,1063.1 L1536.2,1175.9 L1540.6,1176.2 L1542.0,1173.8 L1542.0,1197.8 L1540.6,1197.8 L1536.2,1197.8 L1531.8,1197.8 L1527.5,1197.8 L1523.1,1197.8 L1518.7,1197.8 L1514.4,1197.8 L1510.0,1197.8 L1505.6,1197.8 L1501.2,1197.8 L1496.9,1197.8 L1492.5,1197.8 L1488.1,1197.8 L1483.8,1197.8 L1479.4,1197.8 L1475.0,1197.8 L1470.7,1197.8 L1466.3,1197.8 L1461.9,1197.8 L1457.6,1197.8 L1453.2,1197.8 L1448.8,1197.8 L1444.4,1197.8 L1440.1,1197.8 L1435.7,1197.8 L1431.3,1197.8 L1427.0,1197.8 L1422.6,1197.8 L1418.2,1197.8 L1413.8,1197.8 L1409.5,1197.8 L1405.1,1197.8 L1400.7,1197.8 L1396.4,1197.8 L1392.0,1197.8 L1387.6,1197.8 L1383.3,1197.8 L1378.9,1197.8 L1374.5,1197.8 L1370.2,1197.8 L1365.8,1197.8 L1361.4,1197.8 L1357.0,1197.8 L1352.7,1197.8 L1348.3,1197.8 L1343.9,1197.8 L1339.6,1197.8 L1335.2,1197.8 L1330.8,1197.8 L1326.5,1197.8 L1322.1,1197.8 L1317.7,1197.8 L1313.3,1197.8 L1309.0,1197.8 L1304.6,1197.8 L1300.2,1197.8 L1295.9,1197.8 L1291.5,1197.8 L1287.1,1197.8 L1282.8,1197.8 L1278.4,1197.8 L1274.0,1197.8 L1269.6,1197.8 L1265.3,1197.8 L1260.9,1197.8 L1256.5,1197.8 L1252.2,1197.8 L1247.8,1197.8 L1243.4,1197.8 L1239.1,1197.8 L1234.7,1197.8 L1230.3,1197.8 L1225.9,1197.8 L1221.6,1197.8 L1217.2,1197.8 L1212.8,1197.8 L1208.5,1197.8 L1204.1,1197.8 L1199.7,1197.8 L1195.3,1197.8 L1191.0,1197.8 L1186.6,1197.8 L1182.2,1197.8 L1177.9,1197.8 L1173.5,1197.8 L1169.1,1197.8 L1164.8,1197.8 L1160.4,1197.8 L1156.0,1197.8 L1151.7,1197.8 L1147.3,1197.8 L1142.9,1197.8 L1138.5,1197.8 L1134.2,1197.8 L1129.8,1197.8 L1125.4,1197.8 L1121.1,1197.8 L1116.7,1197.8 L1112.3,1197.8 L1108.0,1197.8 L1103.6,1197.8 L1099.2,1197.8 L1094.8,1197.8 L1090.5,1197.8 L1086.1,1197.8 L1081.7,1197.8 L1077.4,1197.8 L1073.0,1197.8 L1068.6,1197.8 L1064.2,1197.8 L1059.9,1197.8 L1055.5,1197.8 L1051.1,1197.8 L1046.8,1197.8 L1042.4,1197.8 L1038.0,1197.8 L1033.7,1197.8 L1029.3,1197.8 L1024.9,1197.8 L1020.5,1197.8 L1016.2,1197.8 L1011.8,1197.8 L1007.4,1197.8 L1003.1,1197.8 L998.7,1197.8 L994.3,1197.8 L990.0,1197.8 L985.6,1197.8 L981.2,1197.8 L976.9,1197.8 L972.5,1197.8 L968.1,1197.8 L963.7,1197.8 L959.4,1197.8 L955.0,1197.8 L950.6,1197.8 L946.3,1197.8 L941.9,1197.8 L937.5,1197.8 L933.2,1197.8 L928.8,1197.8 L924.4,1197.8 L920.0,1197.8 L915.7,1197.8 L911.3,1197.8 L906.9,1197.8 L902.6,1197.8 L898.2,1197.8 L893.8,1197.8 L889.5,1197.8 L885.1,1197.8 L880.7,1197.8 L876.3,1197.8 L872.0,1197.8 L867.6,1197.8 L863.2,1197.8 L858.9,1197.8 L854.5,1197.8 L850.1,1197.8 L845.8,1197.8 L841.4,1197.8 L837.0,1197.8 L832.6,1197.8 L828.3,1197.8 L823.9,1197.8 L819.5,1197.8 L815.2,1197.8 L810.8,1197.8 L806.4,1197.8 L802.0,1197.8 L797.7,1197.8 L793.3,1197.8 L788.9,1197.8 L784.6,1197.8 L780.2,1197.8 L775.8,1197.8 L771.5,1197.8 L767.1,1197.8 L762.7,1197.8 L758.4,1197.8 L754.0,1197.8 L749.6,1197.8 L745.2,1197.8 L740.9,1197.8 L736.5,1197.8 L732.1,1197.8 L727.8,1197.8 L723.4,1197.8 L719.0,1197.8 L714.6,1197.8 L710.3,1197.8 L705.9,1197.8 L701.5,1197.8 L697.2,1197.8 L692.8,1197.8 L688.4,1197.8 L684.1,1197.8 L679.7,1197.8 L675.3,1197.8 L671.0,1197.8 L666.6,1197.8 L662.2,1197.8 L657.8,1197.8 L653.5,1197.8 L649.1,1197.8 L644.7,1197.8 L640.4,1197.8 L636.0,1197.8 L631.6,1197.8 L627.2,1197.8 L622.9,1197.8 L618.5,1197.8 L614.1,1197.8 L609.8,1197.8 L605.4,1197.8 L601.0,1197.8 L596.7,1197.8 L592.3,1197.8 L587.9,1197.8 L583.5,1197.8 L579.2,1197.8 L574.8,1197.8 L570.4,1197.8 L566.1,1197.8 L561.7,1197.8 L557.3,1197.8 L553.0,1197.8 L548.6,1197.8 L544.2,1197.8 L539.9,1197.8 L535.5,1197.8 L531.1,1197.8 L526.7,1197.8 L522.4,1197.8 L518.0,1197.8 Z" fill="#bcbddc"/><path d="M518.0,1197.8 L522.4,1189.4 L526.7,1184.9 L531.1,1183.2 L535.5,1184.0 L539.9,1184.5 L544.2,1185.5 L548.6,1183.9 L553.0,1155.3 L557.3,1173.8 L561.7,1187.0 L566.1,1182.6 L570.4,1171.2 L574.8,1179.9 L579.2,1183.9 L583.5,1185.6 L587.9,1184.6 L592.3,1185.0 L596.7,1186.0 L601.0,1185.2 L605.4,1183.8 L609.8,1186.6 L614.1,1186.1 L618.5,1187.1 L622.9,1182.6 L627.2,1187.1 L631.6,1187.0 L636.0,1184.5 L640.4,1185.8 L644.7,1182.9 L649.1,1182.8 L653.5,1182.6 L657.8,1185.4 L662.2,1182.4 L666.6,1182.4 L671.0,1182.7 L675.3,1185.9 L679.7,1187.0 L684.1,1183.1 L688.4,1182.5 L692.8,1186.0 L697.2,1184.5 L701.5,1184.8 L705.9,1186.9 L710.3,1186.5 L714.6,1185.5 L719.0,1182.4 L723.4,1182.9 L727.8,1182.9 L732.1,1184.2 L736.5,1186.4 L740.9,1184.9 L745.2,1182.9 L749.6,1183.3 L754.0,1185.9 L758.4,1184.4 L762.7,1185.9 L767.1,1186.8 L771.5,1186.9 L775.8,1184.4 L780.2,1185.2 L784.6,1184.9 L788.9,1182.5 L793.3,1183.5 L797.7,1182.5 L802.0,1182.9 L806.4,1184.2 L810.8,1184.0 L815.2,1185.0 L819.5,1185.7 L823.9,1184.5 L828.3,1187.0 L832.6,1187.0 L837.0,1187.0 L841.4,1183.3 L845.8,1185.7 L850.1,1186.3 L854.5,1185.9 L858.9,1186.4 L863.2,1182.5 L867.6,1185.2 L872.0,1184.6 L876.3,1186.6 L880.7,1186.0 L885.1,1182.5 L889.5,1182.5 L893.8,1183.3 L898.2,1183.7 L902.6,1184.5 L906.9,1184.7 L911.3,1182.5 L915.7,1187.0 L920.0,1185.3 L924.4,1186.7 L928.8,1187.0 L933.2,1187.1 L937.5,1183.8 L941.9,1182.4 L946.3,1186.2 L950.6,1183.1 L955.0,1182.5 L959.4,1183.3 L963.7,1185.6 L968.1,1174.7 L972.5,1176.8 L976.9,1174.0 L981.2,1174.9 L985.6,1175.1 L990.0,1173.6 L994.3,1173.0 L998.7,1172.6 L1003.1,1173.0 L1007.4,1176.4 L1011.8,1172.0 L1016.2,1174.1 L1020.5,1173.3 L1024.9,1172.9 L1029.3,1174.0 L1033.7,1175.9 L1038.0,1174.6 L1042.4,1175.9 L1046.8,1175.5 L1051.1,1174.6 L1055.5,1173.8 L1059.9,1172.6 L1064.2,1177.4 L1068.6,1187.1 L1073.0,1187.8 L1077.4,1185.7 L1081.7,1185.7 L1086.1,1188.2 L1090.5,1187.1 L1094.8,1186.2 L1099.2,1185.5 L1103.6,1186.1 L1108.0,1188.7 L1112.3,1185.3 L1116.7,1185.2 L1121.1,1185.6 L1125.4,1186.0 L1129.8,1185.9 L1134.2,1187.9 L1138.5,1186.6 L1142.9,1187.6 L1147.3,1185.9 L1151.7,1186.6 L1156.0,1184.9 L1160.4,1184.9 L1164.8,1185.4 L1169.1,1185.3 L1173.5,1187.5 L1177.9,1185.8 L1182.2,1185.9 L1186.6,1186.7 L1191.0,1185.4 L1195.3,1187.5 L1199.7,1187.1 L1204.1,1186.4 L1208.5,1185.4 L1212.8,1186.8 L1217.2,1186.8 L1221.6,1184.9 L1225.9,1186.1 L1230.3,1186.8 L1234.7,1184.9 L1239.1,1188.5 L1243.4,1186.7 L1247.8,1186.1 L1252.2,1186.7 L1256.5,1185.9 L1260.9,1187.9 L1265.3,1185.4 L1269.6,1186.0 L1274.0,1187.7 L1278.4,1187.1 L1282.8,1187.1 L1287.1,1185.8 L1291.5,1186.9 L1295.9,1188.0 L1300.2,1186.1 L1304.6,1186.1 L1309.0,1188.3 L1313.3,1188.2 L1317.7,1186.1 L1322.1,1186.4 L1326.5,1186.8 L1330.8,1184.9 L1335.2,1185.7 L1339.6,1186.9 L1343.9,1185.4 L1348.3,1187.5 L1352.7,1184.5 L1357.0,1184.1 L1361.4,1184.0 L1365.8,1182.8 L1370.2,1183.5 L1374.5,1181.8 L1378.9,1173.0 L1383.3,1175.7 L1387.6,1180.9 L1392.0,1173.0 L1396.4,1181.7 L1400.7,1175.1 L1405.1,1173.7 L1409.5,1174.4 L1413.8,1175.1 L1418.2,1178.2 L1422.6,1182.2 L1427.0,1174.2 L1431.3,1174.3 L1435.7,1180.5 L1440.1,1175.9 L1444.4,1173.7 L1448.8,1178.5 L1453.2,1177.1 L1457.6,1173.7 L1461.9,1180.1 L1466.3,1176.4 L1470.7,1176.8 L1475.0,1173.4 L1479.4,1175.9 L1483.8,1176.0 L1488.1,1181.9 L1492.5,1179.4 L1496.9,1174.8 L1501.2,1178.7 L1505.6,1174.2 L1510.0,1173.8 L1514.4,1176.7 L1518.7,1178.3 L1523.1,1177.3 L1527.5,1176.0 L1531.8,1178.0 L1536.2,1183.0 L1540.6,1181.0 L1542.0,1182.1 L1542.0,1197.8 L1540.6,1197.8 L1536.2,1197.8 L1531.8,1197.8 L1527.5,1197.8 L1523.1,1197.8 L1518.7,1197.8 L1514.4,1197.8 L1510.0,1197.8 L1505.6,1197.8 L1501.2,1197.8 L1496.9,1197.8 L1492.5,1197.8 L1488.1,1197.8 L1483.8,1197.8 L1479.4,1197.8 L1475.0,1197.8 L1470.7,1197.8 L1466.3,1197.8 L1461.9,1197.8 L1457.6,1197.8 L1453.2,1197.8 L1448.8,1197.8 L1444.4,1197.8 L1440.1,1197.8 L1435.7,1197.8 L1431.3,1197.8 L1427.0,1197.8 L1422.6,1197.8 L1418.2,1197.8 L1413.8,1197.8 L1409.5,1197.8 L1405.1,1197.8 L1400.7,1197.8 L1396.4,1197.8 L1392.0,1197.8 L1387.6,1197.8 L1383.3,1197.8 L1378.9,1197.8 L1374.5,1197.8 L1370.2,1197.8 L1365.8,1197.8 L1361.4,1197.8 L1357.0,1197.8 L1352.7,1197.8 L1348.3,1197.8 L1343.9,1197.8 L1339.6,1197.8 L1335.2,1197.8 L1330.8,1197.8 L1326.5,1197.8 L1322.1,1197.8 L1317.7,1197.8 L1313.3,1197.8 L1309.0,1197.8 L1304.6,1197.8 L1300.2,1197.8 L1295.9,1197.8 L1291.5,1197.8 L1287.1,1197.8 L1282.8,1197.8 L1278.4,1197.8 L1274.0,1197.8 L1269.6,1197.8 L1265.3,1197.8 L1260.9,1197.8 L1256.5,1197.8 L1252.2,1197.8 L1247.8,1197.8 L1243.4,1197.8 L1239.1,1197.8 L1234.7,1197.8 L1230.3,1197.8 L1225.9,1197.8 L1221.6,1197.8 L1217.2,1197.8 L1212.8,1197.8 L1208.5,1197.8 L1204.1,1197.8 L1199.7,1197.8 L1195.3,1197.8 L1191.0,1197.8 L1186.6,1197.8 L1182.2,1197.8 L1177.9,1197.8 L1173.5,1197.8 L1169.1,1197.8 L1164.8,1197.8 L1160.4,1197.8 L1156.0,1197.8 L1151.7,1197.8 L1147.3,1197.8 L1142.9,1197.8 L1138.5,1197.8 L1134.2,1197.8 L1129.8,1197.8 L1125.4,1197.8 L1121.1,1197.8 L1116.7,1197.8 L1112.3,1197.8 L1108.0,1197.8 L1103.6,1197.8 L1099.2,1197.8 L1094.8,1197.8 L1090.5,1197.8 L1086.1,1197.8 L1081.7,1197.8 L1077.4,1197.8 L1073.0,1197.8 L1068.6,1197.8 L1064.2,1197.8 L1059.9,1197.8 L1055.5,1197.8 L1051.1,1197.8 L1046.8,1197.8 L1042.4,1197.8 L1038.0,1197.8 L1033.7,1197.8 L1029.3,1197.8 L1024.9,1197.8 L1020.5,1197.8 L1016.2,1197.8 L1011.8,1197.8 L1007.4,1197.8 L1003.1,1197.8 L998.7,1197.8 L994.3,1197.8 L990.0,1197.8 L985.6,1197.8 L981.2,1197.8 L976.9,1197.8 L972.5,1197.8 L968.1,1197.8 L963.7,1197.8 L959.4,1197.8 L955.0,1197.8 L950.6,1197.8 L946.3,1197.8 L941.9,1197.8 L937.5,1197.8 L933.2,1197.8 L928.8,1197.8 L924.4,1197.8 L920.0,1197.8 L915.7,1197.8 L911.3,1197.8 L906.9,1197.8 L902.6,1197.8 L898.2,1197.8 L893.8,1197.8 L889.5,1197.8 L885.1,1197.8 L880.7,1197.8 L876.3,1197.8 L872.0,1197.8 L867.6,1197.8 L863.2,1197.8 L858.9,1197.8 L854.5,1197.8 L850.1,1197.8 L845.8,1197.8 L841.4,1197.8 L837.0,1197.8 L832.6,1197.8 L828.3,1197.8 L823.9,1197.8 L819.5,1197.8 L815.2,1197.8 L810.8,1197.8 L806.4,1197.8 L802.0,1197.8 L797.7,1197.8 L793.3,1197.8 L788.9,1197.8 L784.6,1197.8 L780.2,1197.8 L775.8,1197.8 L771.5,1197.8 L767.1,1197.8 L762.7,1197.8 L758.4,1197.8 L754.0,1197.8 L749.6,1197.8 L745.2,1197.8 L740.9,1197.8 L736.5,1197.8 L732.1,1197.8 L727.8,1197.8 L723.4,1197.8 L719.0,1197.8 L714.6,1197.8 L710.3,1197.8 L705.9,1197.8 L701.5,1197.8 L697.2,1197.8 L692.8,1197.8 L688.4,1197.8 L684.1,1197.8 L679.7,1197.8 L675.3,1197.8 L671.0,1197.8 L666.6,1197.8 L662.2,1197.8 L657.8,1197.8 L653.5,1197.8 L649.1,1197.8 L644.7,1197.8 L640.4,1197.8 L636.0,1197.8 L631.6,1197.8 L627.2,1197.8 L622.9,1197.8 L618.5,1197.8 L614.1,1197.8 L609.8,1197.8 L605.4,1197.8 L601.0,1197.8 L596.7,1197.8 L592.3,1197.8 L587.9,1197.8 L583.5,1197.8 L579.2,1197.8 L574.8,1197.8 L570.4,1197.8 L566.1,1197.8 L561.7,1197.8 L557.3,1197.8 L553.0,1197.8 L548.6,1197.8 L544.2,1197.8 L539.9,1197.8 L535.5,1197.8 L531.1,1197.8 L526.7,1197.8 L522.4,1197.8 L518.0,1197.8 Z" fill="#9e9ac8"/><path d="M518.0,1197.8 L522.4,1194.1 L526.7,1191.3 L531.1,1192.4 L535.5,1191.2 L539.9,1192.8 L544.2,1189.9 L548.6,1190.0 L553.0,1189.4 L557.3,1189.6 L561.7,1191.4 L566.1,1192.4 L570.4,1192.4 L574.8,1189.6 L579.2,1191.6 L583.5,1192.3 L587.9,1190.1 L592.3,1191.1 L596.7,1190.1 L601.0,1192.6 L605.4,1192.6 L609.8,1189.9 L614.1,1192.4 L618.5,1191.0 L622.9,1190.4 L627.2,1192.4 L631.6,1192.3 L636.0,1191.2 L640.4,1192.7 L644.7,1189.1 L649.1,1192.7 L653.5,1189.6 L657.8,1190.2 L662.2,1192.3 L666.6,1191.7 L671.0,1190.8 L675.3,1190.0 L679.7,1191.0 L684.1,1189.5 L688.4,1190.8 L692.8,1192.7 L697.2,1188.9 L701.5,1192.2 L705.9,1189.6 L710.3,1189.3 L714.6,1190.5 L719.0,1189.0 L723.4,1189.3 L727.8,1190.1 L732.1,1189.1 L736.5,1189.7 L740.9,1190.0 L745.2,1191.9 L749.6,1190.8 L754.0,1191.6 L758.4,1189.7 L762.7,1191.5 L767.1,1188.8 L771.5,1189.3 L775.8,1191.7 L780.2,1191.5 L784.6,1192.7 L788.9,1189.5 L793.3,1192.2 L797.7,1192.1 L802.0,1189.1 L806.4,1189.5 L810.8,1191.0 L815.2,1192.4 L819.5,1192.8 L823.9,1190.8 L828.3,1191.6 L832.6,1192.3 L837.0,1191.7 L841.4,1191.7 L845.8,1189.0 L850.1,1189.5 L854.5,1191.0 L858.9,1189.0 L863.2,1188.8 L867.6,1189.1 L872.0,1190.1 L876.3,1191.6 L880.7,1191.7 L885.1,1192.2 L889.5,1191.4 L893.8,1190.8 L898.2,1190.5 L902.6,1189.6 L906.9,1191.6 L911.3,1189.8 L915.7,1190.9 L920.0,1190.7 L924.4,1189.1 L928.8,1189.7 L933.2,1189.1 L937.5,1190.9 L941.9,1192.2 L946.3,1192.5 L950.6,1191.6 L955.0,1190.4 L959.4,1191.3 L963.7,1190.4 L968.1,1184.0 L972.5,1183.9 L976.9,1186.9 L981.2,1187.1 L985.6,1184.1 L990.0,1186.8 L994.3,1183.0 L998.7,1183.2 L1003.1,1187.1 L1007.4,1186.7 L1011.8,1183.9 L1016.2,1187.2 L1020.5,1187.3 L1024.9,1183.9 L1029.3,1186.1 L1033.7,1186.4 L1038.0,1185.9 L1042.4,1186.4 L1046.8,1187.1 L1051.1,1187.3 L1055.5,1182.6 L1059.9,1186.4 L1064.2,1183.5 L1068.6,1191.2 L1073.0,1189.8 L1077.4,1189.8 L1081.7,1188.6 L1086.1,1190.2 L1090.5,1191.5 L1094.8,1188.2 L1099.2,1188.9 L1103.6,1188.1 L1108.0,1191.4 L1112.3,1187.9 L1116.7,1189.7 L1121.1,1189.7 L1125.4,1188.9 L1129.8,1190.8 L1134.2,1189.9 L1138.5,1188.8 L1142.9,1189.6 L1147.3,1187.9 L1151.7,1188.6 L1156.0,1188.7 L1160.4,1191.0 L1164.8,1190.7 L1169.1,1191.1 L1173.5,1190.0 L1177.9,1191.3 L1182.2,1187.9 L1186.6,1190.6 L1191.0,1189.5 L1195.3,1189.5 L1199.7,1191.4 L1204.1,1188.4 L1208.5,1188.4 L1212.8,1189.9 L1217.2,1191.1 L1221.6,1190.5 L1225.9,1188.1 L1230.3,1190.7 L1234.7,1187.9 L1239.1,1191.1 L1243.4,1191.3 L1247.8,1190.2 L1252.2,1190.9 L1256.5,1187.9 L1260.9,1189.9 L1265.3,1189.2 L1269.6,1188.0 L1274.0,1190.9 L1278.4,1190.7 L1282.8,1190.3 L1287.1,1191.4 L1291.5,1188.9 L1295.9,1190.5 L1300.2,1189.0 L1304.6,1188.1 L1309.0,1191.2 L1313.3,1190.2 L1317.7,1188.5 L1322.1,1188.4 L1326.5,1190.4 L1330.8,1190.6 L1335.2,1189.2 L1339.6,1188.9 L1343.9,1190.9 L1348.3,1189.5 L1352.7,1188.4 L1357.0,1186.1 L1361.4,1189.8 L1365.8,1186.4 L1370.2,1188.8 L1374.5,1188.5 L1378.9,1185.3 L1383.3,1182.3 L1387.6,1187.7 L1392.0,1181.7 L1396.4,1184.4 L1400.7,1184.2 L1405.1,1181.6 L1409.5,1181.5 L1413.8,1186.7 L1418.2,1188.5 L1422.6,1186.9 L1427.0,1185.6 L1431.3,1188.6 L1435.7,1188.3 L1440.1,1184.2 L1444.4,1184.2 L1448.8,1182.0 L1453.2,1180.9 L1457.6,1182.1 L1461.9,1188.4 L1466.3,1181.0 L1470.7,1181.6 L1475.0,1186.7 L1479.4,1186.9 L1483.8,1182.1 L1488.1,1185.8 L1492.5,1183.8 L1496.9,1187.4 L1501.2,1182.5 L1505.6,1188.1 L1510.0,1183.3 L1514.4,1186.7 L1518.7,1183.2 L1523.1,1184.0 L1527.5,1188.1 L1531.8,1186.0 L1536.2,1185.0 L1540.6,1187.6 L1542.0,1184.1 L1542.0,1197.8 L1540.6,1197.8 L1536.2,1197.8 L1531.8,1197.8 L1527.5,1197.8 L1523.1,1197.8 L1518.7,1197.8 L1514.4,1197.8 L1510.0,1197.8 L1505.6,1197.8 L1501.2,1197.8 L1496.9,1197.8 L1492.5,1197.8 L1488.1,1197.8 L1483.8,1197.8 L1479.4,1197.8 L1475.0,1197.8 L1470.7,1197.8 L1466.3,1197.8 L1461.9,1197.8 L1457.6,1197.8 L1453.2,1197.8 L1448.8,1197.8 L1444.4,1197.8 L1440.1,1197.8 L1435.7,1197.8 L1431.3,1197.8 L1427.0,1197.8 L1422.6,1197.8 L1418.2,1197.8 L1413.8,1197.8 L1409.5,1197.8 L1405.1,1197.8 L1400.7,1197.8 L1396.4,1197.8 L1392.0,1197.8 L1387.6,1197.8 L1383.3,1197.8 L1378.9,1197.8 L1374.5,1197.8 L1370.2,1197.8 L1365.8,1197.8 L1361.4,1197.8 L1357.0,1197.8 L1352.7,1197.8 L1348.3,1197.8 L1343.9,1197.8 L1339.6,1197.8 L1335.2,1197.8 L1330.8,1197.8 L1326.5,1197.8 L1322.1,1197.8 L1317.7,1197.8 L1313.3,1197.8 L1309.0,1197.8 L1304.6,1197.8 L1300.2,1197.8 L1295.9,1197.8 L1291.5,1197.8 L1287.1,1197.8 L1282.8,1197.8 L1278.4,1197.8 L1274.0,1197.8 L1269.6,1197.8 L1265.3,1197.8 L1260.9,1197.8 L1256.5,1197.8 L1252.2,1197.8 L1247.8,1197.8 L1243.4,1197.8 L1239.1,1197.8 L1234.7,1197.8 L1230.3,1197.8 L1225.9,1197.8 L1221.6,1197.8 L1217.2,1197.8 L1212.8,1197.8 L1208.5,1197.8 L1204.1,1197.8 L1199.7,1197.8 L1195.3,1197.8 L1191.0,1197.8 L1186.6,1197.8 L1182.2,1197.8 L1177.9,1197.8 L1173.5,1197.8 L1169.1,1197.8 L1164.8,1197.8 L1160.4,1197.8 L1156.0,1197.8 L1151.7,1197.8 L1147.3,1197.8 L1142.9,1197.8 L1138.5,1197.8 L1134.2,1197.8 L1129.8,1197.8 L1125.4,1197.8 L1121.1,1197.8 L1116.7,1197.8 L1112.3,1197.8 L1108.0,1197.8 L1103.6,1197.8 L1099.2,1197.8 L1094.8,1197.8 L1090.5,1197.8 L1086.1,1197.8 L1081.7,1197.8 L1077.4,1197.8 L1073.0,1197.8 L1068.6,1197.8 L1064.2,1197.8 L1059.9,1197.8 L1055.5,1197.8 L1051.1,1197.8 L1046.8,1197.8 L1042.4,1197.8 L1038.0,1197.8 L1033.7,1197.8 L1029.3,1197.8 L1024.9,1197.8 L1020.5,1197.8 L1016.2,1197.8 L1011.8,1197.8 L1007.4,1197.8 L1003.1,1197.8 L998.7,1197.8 L994.3,1197.8 L990.0,1197.8 L985.6,1197.8 L981.2,1197.8 L976.9,1197.8 L972.5,1197.8 L968.1,1197.8 L963.7,1197.8 L959.4,1197.8 L955.0,1197.8 L950.6,1197.8 L946.3,1197.8 L941.9,1197.8 L937.5,1197.8 L933.2,1197.8 L928.8,1197.8 L924.4,1197.8 L920.0,1197.8 L915.7,1197.8 L911.3,1197.8 L906.9,1197.8 L902.6,1197.8 L898.2,1197.8 L893.8,1197.8 L889.5,1197.8 L885.1,1197.8 L880.7,1197.8 L876.3,1197.8 L872.0,1197.8 L867.6,1197.8 L863.2,1197.8 L858.9,1197.8 L854.5,1197.8 L850.1,1197.8 L845.8,1197.8 L841.4,1197.8 L837.0,1197.8 L832.6,1197.8 L828.3,1197.8 L823.9,1197.8 L819.5,1197.8 L815.2,1197.8 L810.8,1197.8 L806.4,1197.8 L802.0,1197.8 L797.7,1197.8 L793.3,1197.8 L788.9,1197.8 L784.6,1197.8 L780.2,1197.8 L775.8,1197.8 L771.5,1197.8 L767.1,1197.8 L762.7,1197.8 L758.4,1197.8 L754.0,1197.8 L749.6,1197.8 L745.2,1197.8 L740.9,1197.8 L736.5,1197.8 L732.1,1197.8 L727.8,1197.8 L723.4,1197.8 L719.0,1197.8 L714.6,1197.8 L710.3,1197.8 L705.9,1197.8 L701.5,1197.8 L697.2,1197.8 L692.8,1197.8 L688.4,1197.8 L684.1,1197.8 L679.7,1197.8 L675.3,1197.8 L671.0,1197.8 L666.6,1197.8 L662.2,1197.8 L657.8,1197.8 L653.5,1197.8 L649.1,1197.8 L644.7,1197.8 L640.4,1197.8 L636.0,1197.8 L631.6,1197.8 L627.2,1197.8 L622.9,1197.8 L618.5,1197.8 L614.1,1197.8 L609.8,1197.8 L605.4,1197.8 L601.0,1197.8 L596.7,1197.8 L592.3,1197.8 L587.9,1197.8 L583.5,1197.8 L579.2,1197.8 L574.8,1197.8 L570.4,1197.8 L566.1,1197.8 L561.7,1197.8 L557.3,1197.8 L553.0,1197.8 L548.6,1197.8 L544.2,1197.8 L539.9,1197.8 L535.5,1197.8 L531.1,1197.8 L526.7,1197.8 L522.4,1197.8 L518.0,1197.8 Z" fill="#6a51a3"/><path d="M518.0,1197.8 L522.4,1175.2 L526.7,1157.8 L531.1,1161.7 L535.5,1175.0 L539.9,1180.1 L544.2,1177.0 L548.6,1178.9 L553.0,1140.8 L557.3,1159.7 L561.7,1175.5 L566.1,1173.7 L570.4,1153.8 L574.8,1162.5 L579.2,1177.5 L583.5,1177.2 L587.9,1176.5 L592.3,1180.0 L596.7,1173.6 L601.0,1178.4 L605.4,1175.8 L609.8,1177.4 L614.1,1179.2 L618.5,1176.7 L622.9,1173.8 L627.2,1175.3 L631.6,1176.6 L636.0,1174.3 L640.4,1177.0 L644.7,1175.0 L649.1,1176.2 L653.5,1173.4 L657.8,1179.7 L662.2,1173.9 L666.6,1175.5 L671.0,1174.3 L675.3,1175.9 L679.7,1175.0 L684.1,1179.1 L688.4,1175.0 L692.8,1176.6 L697.2,1179.7 L701.5,1179.3 L705.9,1175.6 L710.3,1173.9 L714.6,1175.4 L719.0,1173.9 L723.4,1177.2 L727.8,1178.9 L732.1,1175.5 L736.5,1177.7 L740.9,1174.6 L745.2,1177.4 L749.6,1176.3 L754.0,1174.4 L758.4,1179.3 L762.7,1175.1 L767.1,1174.5 L771.5,1179.2 L775.8,1177.9 L780.2,1178.5 L784.6,1176.7 L788.9,1174.1 L793.3,1176.0 L797.7,1178.5 L802.0,1178.9 L806.4,1174.3 L810.8,1175.6 L815.2,1175.4 L819.5,1176.9 L823.9,1174.5 L828.3,1174.3 L832.6,1173.5 L837.0,1179.9 L841.4,1178.0 L845.8,1175.9 L850.1,1179.0 L854.5,1177.4 L858.9,1177.5 L863.2,1178.5 L867.6,1178.5 L872.0,1175.5 L876.3,1175.3 L880.7,1173.5 L885.1,1176.3 L889.5,1173.6 L893.8,1178.4 L898.2,1179.4 L902.6,1174.3 L906.9,1180.0 L911.3,1174.3 L915.7,1176.3 L920.0,1176.7 L924.4,1179.6 L928.8,1173.5 L933.2,1174.9 L937.5,1175.9 L941.9,1173.4 L946.3,1176.0 L950.6,1173.7 L955.0,1178.5 L959.4,1178.0 L963.7,1174.7 L968.1,1152.8 L972.5,1158.2 L976.9,1159.6 L981.2,1159.0 L985.6,1157.2 L990.0,1158.2 L994.3,1160.8 L998.7,1154.2 L1003.1,1154.3 L1007.4,1153.9 L1011.8,1153.6 L1016.2,1155.7 L1020.5,1157.9 L1024.9,1152.5 L1029.3,1161.2 L1033.7,1155.7 L1038.0,1158.3 L1042.4,1154.9 L1046.8,1156.2 L1051.1,1158.2 L1055.5,1159.9 L1059.9,1153.5 L1064.2,1159.0 L1068.6,1176.8 L1073.0,1178.9 L1077.4,1175.5 L1081.7,1175.7 L1086.1,1174.5 L1090.5,1174.6 L1094.8,1179.1 L1099.2,1179.6 L1103.6,1175.7 L1108.0,1175.4 L1112.3,1179.4 L1116.7,1177.4 L1121.1,1174.3 L1125.4,1178.4 L1129.8,1179.2 L1134.2,1174.0 L1138.5,1176.4 L1142.9,1178.1 L1147.3,1175.5 L1151.7,1175.3 L1156.0,1177.5 L1160.4,1178.4 L1164.8,1174.7 L1169.1,1177.4 L1173.5,1178.3 L1177.9,1173.9 L1182.2,1178.7 L1186.6,1176.0 L1191.0,1179.3 L1195.3,1175.4 L1199.7,1175.7 L1204.1,1175.4 L1208.5,1175.5 L1212.8,1177.6 L1217.2,1176.1 L1221.6,1177.4 L1225.9,1176.0 L1230.3,1177.4 L1234.7,1175.3 L1239.1,1179.2 L1243.4,1179.3 L1247.8,1178.0 L1252.2,1175.9 L1256.5,1175.6 L1260.9,1174.3 L1265.3,1175.2 L1269.6,1177.2 L1274.0,1179.3 L1278.4,1177.6 L1282.8,1178.9 L1287.1,1177.2 L1291.5,1174.4 L1295.9,1174.2 L1300.2,1178.5 L1304.6,1179.4 L1309.0,1175.1 L1313.3,1177.0 L1317.7,1174.6 L1322.1,1173.8 L1326.5,1178.2 L1330.8,1174.8 L1335.2,1177.5 L1339.6,1178.1 L1343.9,1179.3 L1348.3,1177.5 L1352.7,1152.6 L1357.0,1143.9 L1361.4,1153.6 L1365.8,1157.9 L1370.2,1157.6 L1374.5,1158.1 L1378.9,1046.4 L1383.3,1049.8 L1387.6,1051.5 L1392.0,1046.2 L1396.4,1047.4 L1400.7,1060.4 L1405.1,1068.4 L1409.5,1064.7 L1413.8,1053.0 L1418.2,1046.3 L1422.6,1057.1 L1427.0,1070.6 L1431.3,1064.1 L1435.7,1052.8 L1440.1,1059.6 L1444.4,1071.4 L1448.8,1066.2 L1453.2,1062.9 L1457.6,1069.8 L1461.9,1064.5 L1466.3,1051.6 L1470.7,1048.8 L1475.0,1061.1 L1479.4,1072.9 L1483.8,1063.6 L1488.1,1051.4 L1492.5,1046.6 L1496.9,1058.0 L1501.2,1072.2 L1505.6,1066.2 L1510.0,1051.6 L1514.4,1053.9 L1518.7,1068.6 L1523.1,1068.3 L1527.5,1056.5 L1531.8,1047.4 L1536.2,1160.5 L1540.6,1157.5 L1542.0,1157.5" fill="none" stroke="#9e9ac8" stroke-width="3.5" stroke-linejoin="round"/><path d="M518.0,1197.8 L522.4,1213.8 L526.7,1222.4 L531.1,1222.3 L535.5,1224.0 L539.9,1223.9 L544.2,1225.1 L548.6,1225.5 L553.0,1224.6 L557.3,1225.5 L561.7,1224.7 L566.1,1225.7 L570.4,1224.9 L574.8,1225.4 L579.2,1221.1 L583.5,1223.9 L587.9,1224.2 L592.3,1225.8 L596.7,1225.7 L601.0,1224.9 L605.4,1225.7 L609.8,1224.6 L614.1,1225.2 L618.5,1225.3 L622.9,1223.3 L627.2,1225.8 L631.6,1224.1 L636.0,1225.4 L640.4,1222.4 L644.7,1224.5 L649.1,1223.9 L653.5,1223.8 L657.8,1220.1 L662.2,1224.6 L666.6,1224.3 L671.0,1224.1 L675.3,1225.5 L679.7,1225.1 L684.1,1225.0 L688.4,1224.2 L692.8,1225.1 L697.2,1224.8 L701.5,1224.6 L705.9,1221.7 L710.3,1225.0 L714.6,1223.2 L719.0,1222.4 L723.4,1222.3 L727.8,1223.4 L732.1,1225.2 L736.5,1225.0 L740.9,1224.4 L745.2,1224.0 L749.6,1224.6 L754.0,1225.6 L758.4,1222.3 L762.7,1224.5 L767.1,1225.6 L771.5,1224.0 L775.8,1224.7 L780.2,1224.4 L784.6,1224.3 L788.9,1225.7 L793.3,1224.8 L797.7,1224.1 L802.0,1222.3 L806.4,1223.0 L810.8,1223.2 L815.2,1225.3 L819.5,1223.6 L823.9,1224.9 L828.3,1224.9 L832.6,1225.0 L837.0,1223.7 L841.4,1223.4 L845.8,1224.2 L850.1,1223.1 L854.5,1225.4 L858.9,1224.0 L863.2,1225.5 L867.6,1221.5 L872.0,1225.5 L876.3,1222.8 L880.7,1223.6 L885.1,1225.1 L889.5,1225.7 L893.8,1225.8 L898.2,1223.4 L902.6,1225.7 L906.9,1225.0 L911.3,1225.8 L915.7,1221.5 L920.0,1224.2 L924.4,1221.7 L928.8,1225.1 L933.2,1225.7 L937.5,1223.5 L941.9,1224.5 L946.3,1225.1 L950.6,1222.7 L955.0,1223.6 L959.4,1225.7 L963.7,1225.6 L968.1,1248.2 L972.5,1241.0 L976.9,1249.1 L981.2,1249.5 L985.6,1244.3 L990.0,1243.7 L994.3,1247.2 L998.7,1246.9 L1003.1,1247.2 L1007.4,1247.4 L1011.8,1249.8 L1016.2,1246.0 L1020.5,1246.2 L1024.9,1247.1 L1029.3,1244.7 L1033.7,1247.6 L1038.0,1246.4 L1042.4,1246.9 L1046.8,1245.7 L1051.1,1245.0 L1055.5,1243.7 L1059.9,1248.8 L1064.2,1244.5 L1068.6,1226.2 L1073.0,1225.7 L1077.4,1222.7 L1081.7,1224.3 L1086.1,1226.3 L1090.5,1224.3 L1094.8,1223.6 L1099.2,1223.5 L1103.6,1224.9 L1108.0,1223.5 L1112.3,1222.4 L1116.7,1222.9 L1121.1,1220.6 L1125.4,1225.0 L1129.8,1224.5 L1134.2,1224.3 L1138.5,1224.4 L1142.9,1219.9 L1147.3,1223.6 L1151.7,1222.8 L1156.0,1223.7 L1160.4,1224.4 L1164.8,1225.4 L1169.1,1225.9 L1173.5,1221.3 L1177.9,1223.6 L1182.2,1225.2 L1186.6,1223.4 L1191.0,1225.2 L1195.3,1222.3 L1199.7,1221.3 L1204.1,1224.9 L1208.5,1220.5 L1212.8,1222.9 L1217.2,1223.5 L1221.6,1225.1 L1225.9,1222.3 L1230.3,1222.5 L1234.7,1226.4 L1239.1,1223.7 L1243.4,1222.5 L1247.8,1224.3 L1252.2,1225.8 L1256.5,1221.7 L1260.9,1226.4 L1265.3,1223.0 L1269.6,1225.4 L1274.0,1225.4 L1278.4,1224.9 L1282.8,1223.9 L1287.1,1224.0 L1291.5,1224.2 L1295.9,1223.1 L1300.2,1221.7 L1304.6,1225.5 L1309.0,1224.7 L1313.3,1223.3 L1317.7,1225.2 L1322.1,1223.2 L1326.5,1224.5 L1330.8,1223.3 L1335.2,1224.1 L1339.6,1223.5 L1343.9,1224.1 L1348.3,1219.5 L1352.7,1224.4 L1357.0,1247.6 L1361.4,1246.1 L1365.8,1242.8 L1370.2,1246.9 L1374.5,1244.2 L1378.9,1245.9 L1383.3,1242.5 L1387.6,1243.2 L1392.0,1241.0 L1396.4,1244.2 L1400.7,1244.9 L1405.1,1246.9 L1409.5,1246.5 L1413.8,1246.4 L1418.2,1243.5 L1422.6,1246.3 L1427.0,1241.7 L1431.3,1246.2 L1435.7,1245.0 L1440.1,1247.6 L1444.4,1248.2 L1448.8,1246.3 L1453.2,1242.1 L1457.6,1248.0 L1461.9,1244.6 L1466.3,1242.9 L1470.7,1244.6 L1475.0,1242.8 L1479.4,1244.6 L1483.8,1247.2 L1488.1,1246.1 L1492.5,1246.3 L1496.9,1247.7 L1501.2,1242.6 L1505.6,1244.3 L1510.0,1244.1 L1514.4,1245.8 L1518.7,1244.9 L1523.1,1245.3 L1527.5,1247.5 L1531.8,1243.8 L1536.2,1247.7 L1540.6,1245.4 L1542.0,1242.4 L1542.0,1197.8 L1540.6,1197.8 L1536.2,1197.8 L1531.8,1197.8 L1527.5,1197.8 L1523.1,1197.8 L1518.7,1197.8 L1514.4,1197.8 L1510.0,1197.8 L1505.6,1197.8 L1501.2,1197.8 L1496.9,1197.8 L1492.5,1197.8 L1488.1,1197.8 L1483.8,1197.8 L1479.4,1197.8 L1475.0,1197.8 L1470.7,1197.8 L1466.3,1197.8 L1461.9,1197.8 L1457.6,1197.8 L1453.2,1197.8 L1448.8,1197.8 L1444.4,1197.8 L1440.1,1197.8 L1435.7,1197.8 L1431.3,1197.8 L1427.0,1197.8 L1422.6,1197.8 L1418.2,1197.8 L1413.8,1197.8 L1409.5,1197.8 L1405.1,1197.8 L1400.7,1197.8 L1396.4,1197.8 L1392.0,1197.8 L1387.6,1197.8 L1383.3,1197.8 L1378.9,1197.8 L1374.5,1197.8 L1370.2,1197.8 L1365.8,1197.8 L1361.4,1197.8 L1357.0,1197.8 L1352.7,1197.8 L1348.3,1197.8 L1343.9,1197.8 L1339.6,1197.8 L1335.2,1197.8 L1330.8,1197.8 L1326.5,1197.8 L1322.1,1197.8 L1317.7,1197.8 L1313.3,1197.8 L1309.0,1197.8 L1304.6,1197.8 L1300.2,1197.8 L1295.9,1197.8 L1291.5,1197.8 L1287.1,1197.8 L1282.8,1197.8 L1278.4,1197.8 L1274.0,1197.8 L1269.6,1197.8 L1265.3,1197.8 L1260.9,1197.8 L1256.5,1197.8 L1252.2,1197.8 L1247.8,1197.8 L1243.4,1197.8 L1239.1,1197.8 L1234.7,1197.8 L1230.3,1197.8 L1225.9,1197.8 L1221.6,1197.8 L1217.2,1197.8 L1212.8,1197.8 L1208.5,1197.8 L1204.1,1197.8 L1199.7,1197.8 L1195.3,1197.8 L1191.0,1197.8 L1186.6,1197.8 L1182.2,1197.8 L1177.9,1197.8 L1173.5,1197.8 L1169.1,1197.8 L1164.8,1197.8 L1160.4,1197.8 L1156.0,1197.8 L1151.7,1197.8 L1147.3,1197.8 L1142.9,1197.8 L1138.5,1197.8 L1134.2,1197.8 L1129.8,1197.8 L1125.4,1197.8 L1121.1,1197.8 L1116.7,1197.8 L1112.3,1197.8 L1108.0,1197.8 L1103.6,1197.8 L1099.2,1197.8 L1094.8,1197.8 L1090.5,1197.8 L1086.1,1197.8 L1081.7,1197.8 L1077.4,1197.8 L1073.0,1197.8 L1068.6,1197.8 L1064.2,1197.8 L1059.9,1197.8 L1055.5,1197.8 L1051.1,1197.8 L1046.8,1197.8 L1042.4,1197.8 L1038.0,1197.8 L1033.7,1197.8 L1029.3,1197.8 L1024.9,1197.8 L1020.5,1197.8 L1016.2,1197.8 L1011.8,1197.8 L1007.4,1197.8 L1003.1,1197.8 L998.7,1197.8 L994.3,1197.8 L990.0,1197.8 L985.6,1197.8 L981.2,1197.8 L976.9,1197.8 L972.5,1197.8 L968.1,1197.8 L963.7,1197.8 L959.4,1197.8 L955.0,1197.8 L950.6,1197.8 L946.3,1197.8 L941.9,1197.8 L937.5,1197.8 L933.2,1197.8 L928.8,1197.8 L924.4,1197.8 L920.0,1197.8 L915.7,1197.8 L911.3,1197.8 L906.9,1197.8 L902.6,1197.8 L898.2,1197.8 L893.8,1197.8 L889.5,1197.8 L885.1,1197.8 L880.7,1197.8 L876.3,1197.8 L872.0,1197.8 L867.6,1197.8 L863.2,1197.8 L858.9,1197.8 L854.5,1197.8 L850.1,1197.8 L845.8,1197.8 L841.4,1197.8 L837.0,1197.8 L832.6,1197.8 L828.3,1197.8 L823.9,1197.8 L819.5,1197.8 L815.2,1197.8 L810.8,1197.8 L806.4,1197.8 L802.0,1197.8 L797.7,1197.8 L793.3,1197.8 L788.9,1197.8 L784.6,1197.8 L780.2,1197.8 L775.8,1197.8 L771.5,1197.8 L767.1,1197.8 L762.7,1197.8 L758.4,1197.8 L754.0,1197.8 L749.6,1197.8 L745.2,1197.8 L740.9,1197.8 L736.5,1197.8 L732.1,1197.8 L727.8,1197.8 L723.4,1197.8 L719.0,1197.8 L714.6,1197.8 L710.3,1197.8 L705.9,1197.8 L701.5,1197.8 L697.2,1197.8 L692.8,1197.8 L688.4,1197.8 L684.1,1197.8 L679.7,1197.8 L675.3,1197.8 L671.0,1197.8 L666.6,1197.8 L662.2,1197.8 L657.8,1197.8 L653.5,1197.8 L649.1,1197.8 L644.7,1197.8 L640.4,1197.8 L636.0,1197.8 L631.6,1197.8 L627.2,1197.8 L622.9,1197.8 L618.5,1197.8 L614.1,1197.8 L609.8,1197.8 L605.4,1197.8 L601.0,1197.8 L596.7,1197.8 L592.3,1197.8 L587.9,1197.8 L583.5,1197.8 L579.2,1197.8 L574.8,1197.8 L570.4,1197.8 L566.1,1197.8 L561.7,1197.8 L557.3,1197.8 L553.0,1197.8 L548.6,1197.8 L544.2,1197.8 L539.9,1197.8 L535.5,1197.8 L531.1,1197.8 L526.7,1197.8 L522.4,1197.8 L518.0,1197.8 Z" fill="#74c476"/><path d="M518.0,1197.8 L522.4,1209.9 L526.7,1219.4 L531.1,1219.2 L535.5,1218.9 L539.9,1217.7 L544.2,1222.1 L548.6,1222.5 L553.0,1221.6 L557.3,1222.5 L561.7,1218.5 L566.1,1222.7 L570.4,1221.9 L574.8,1220.0 L579.2,1218.1 L583.5,1220.9 L587.9,1221.2 L592.3,1222.8 L596.7,1222.7 L601.0,1221.3 L605.4,1222.7 L609.8,1218.2 L614.1,1220.8 L618.5,1222.3 L622.9,1220.3 L627.2,1222.8 L631.6,1218.6 L636.0,1222.4 L640.4,1217.8 L644.7,1221.5 L649.1,1220.9 L653.5,1220.8 L657.8,1217.1 L662.2,1221.6 L666.6,1221.3 L671.0,1221.1 L675.3,1222.5 L679.7,1222.1 L684.1,1222.0 L688.4,1221.2 L692.8,1220.2 L697.2,1221.8 L701.5,1221.6 L705.9,1218.7 L710.3,1222.0 L714.6,1220.2 L719.0,1217.4 L723.4,1218.1 L727.8,1220.4 L732.1,1222.2 L736.5,1222.0 L740.9,1221.4 L745.2,1221.0 L749.6,1221.6 L754.0,1222.6 L758.4,1217.9 L762.7,1221.5 L767.1,1218.8 L771.5,1221.0 L775.8,1221.7 L780.2,1221.4 L784.6,1220.0 L788.9,1222.7 L793.3,1221.8 L797.7,1220.8 L802.0,1219.3 L806.4,1219.9 L810.8,1220.2 L815.2,1222.3 L819.5,1220.6 L823.9,1221.9 L828.3,1221.6 L832.6,1220.5 L837.0,1220.7 L841.4,1219.4 L845.8,1221.2 L850.1,1220.1 L854.5,1220.9 L858.9,1221.0 L863.2,1222.5 L867.6,1217.9 L872.0,1222.5 L876.3,1219.8 L880.7,1219.7 L885.1,1222.1 L889.5,1222.7 L893.8,1222.5 L898.2,1220.4 L902.6,1221.4 L906.9,1220.5 L911.3,1220.1 L915.7,1218.5 L920.0,1221.2 L924.4,1218.7 L928.8,1222.1 L933.2,1222.7 L937.5,1220.5 L941.9,1221.5 L946.3,1219.5 L950.6,1219.7 L955.0,1220.6 L959.4,1222.7 L963.7,1222.6 L968.1,1241.7 L972.5,1237.4 L976.9,1234.9 L981.2,1239.0 L985.6,1241.3 L990.0,1236.9 L994.3,1243.6 L998.7,1234.6 L1003.1,1241.0 L1007.4,1241.0 L1011.8,1243.6 L1016.2,1243.0 L1020.5,1237.6 L1024.9,1240.0 L1029.3,1241.7 L1033.7,1239.0 L1038.0,1239.3 L1042.4,1243.2 L1046.8,1242.7 L1051.1,1238.5 L1055.5,1240.7 L1059.9,1241.9 L1064.2,1234.3 L1068.6,1222.5 L1073.0,1218.3 L1077.4,1219.7 L1081.7,1220.1 L1086.1,1217.3 L1090.5,1220.0 L1094.8,1219.9 L1099.2,1220.5 L1103.6,1221.9 L1108.0,1218.6 L1112.3,1218.1 L1116.7,1218.2 L1121.1,1217.6 L1125.4,1222.0 L1129.8,1221.5 L1134.2,1221.3 L1138.5,1221.4 L1142.9,1216.9 L1147.3,1220.6 L1151.7,1217.1 L1156.0,1220.7 L1160.4,1221.4 L1164.8,1222.4 L1169.1,1222.5 L1173.5,1215.1 L1177.9,1220.3 L1182.2,1216.6 L1186.6,1217.0 L1191.0,1222.2 L1195.3,1219.3 L1199.7,1216.9 L1204.1,1219.0 L1208.5,1217.3 L1212.8,1219.9 L1217.2,1216.9 L1221.6,1216.2 L1225.9,1218.7 L1230.3,1218.5 L1234.7,1218.0 L1239.1,1220.7 L1243.4,1219.5 L1247.8,1221.3 L1252.2,1217.5 L1256.5,1216.7 L1260.9,1217.7 L1265.3,1220.0 L1269.6,1220.0 L1274.0,1220.2 L1278.4,1220.5 L1282.8,1220.9 L1287.1,1221.0 L1291.5,1219.9 L1295.9,1220.1 L1300.2,1217.8 L1304.6,1222.5 L1309.0,1221.4 L1313.3,1220.3 L1317.7,1216.8 L1322.1,1220.2 L1326.5,1221.5 L1330.8,1220.3 L1335.2,1221.1 L1339.6,1219.1 L1343.9,1215.8 L1348.3,1216.5 L1352.7,1219.2 L1357.0,1235.8 L1361.4,1241.2 L1365.8,1239.8 L1370.2,1239.8 L1374.5,1237.0 L1378.9,1236.1 L1383.3,1235.5 L1387.6,1240.2 L1392.0,1237.3 L1396.4,1241.2 L1400.7,1241.2 L1405.1,1236.3 L1409.5,1235.0 L1413.8,1237.3 L1418.2,1235.7 L1422.6,1238.9 L1427.0,1238.7 L1431.3,1234.3 L1435.7,1237.4 L1440.1,1238.1 L1444.4,1238.5 L1448.8,1237.6 L1453.2,1237.1 L1457.6,1237.1 L1461.9,1237.1 L1466.3,1239.9 L1470.7,1241.6 L1475.0,1239.4 L1479.4,1241.6 L1483.8,1234.1 L1488.1,1240.2 L1492.5,1240.0 L1496.9,1239.3 L1501.2,1239.6 L1505.6,1241.3 L1510.0,1235.7 L1514.4,1238.5 L1518.7,1233.9 L1523.1,1240.9 L1527.5,1234.8 L1531.8,1240.8 L1536.2,1235.3 L1540.6,1235.2 L1542.0,1238.8 L1542.0,1197.8 L1540.6,1197.8 L1536.2,1197.8 L1531.8,1197.8 L1527.5,1197.8 L1523.1,1197.8 L1518.7,1197.8 L1514.4,1197.8 L1510.0,1197.8 L1505.6,1197.8 L1501.2,1197.8 L1496.9,1197.8 L1492.5,1197.8 L1488.1,1197.8 L1483.8,1197.8 L1479.4,1197.8 L1475.0,1197.8 L1470.7,1197.8 L1466.3,1197.8 L1461.9,1197.8 L1457.6,1197.8 L1453.2,1197.8 L1448.8,1197.8 L1444.4,1197.8 L1440.1,1197.8 L1435.7,1197.8 L1431.3,1197.8 L1427.0,1197.8 L1422.6,1197.8 L1418.2,1197.8 L1413.8,1197.8 L1409.5,1197.8 L1405.1,1197.8 L1400.7,1197.8 L1396.4,1197.8 L1392.0,1197.8 L1387.6,1197.8 L1383.3,1197.8 L1378.9,1197.8 L1374.5,1197.8 L1370.2,1197.8 L1365.8,1197.8 L1361.4,1197.8 L1357.0,1197.8 L1352.7,1197.8 L1348.3,1197.8 L1343.9,1197.8 L1339.6,1197.8 L1335.2,1197.8 L1330.8,1197.8 L1326.5,1197.8 L1322.1,1197.8 L1317.7,1197.8 L1313.3,1197.8 L1309.0,1197.8 L1304.6,1197.8 L1300.2,1197.8 L1295.9,1197.8 L1291.5,1197.8 L1287.1,1197.8 L1282.8,1197.8 L1278.4,1197.8 L1274.0,1197.8 L1269.6,1197.8 L1265.3,1197.8 L1260.9,1197.8 L1256.5,1197.8 L1252.2,1197.8 L1247.8,1197.8 L1243.4,1197.8 L1239.1,1197.8 L1234.7,1197.8 L1230.3,1197.8 L1225.9,1197.8 L1221.6,1197.8 L1217.2,1197.8 L1212.8,1197.8 L1208.5,1197.8 L1204.1,1197.8 L1199.7,1197.8 L1195.3,1197.8 L1191.0,1197.8 L1186.6,1197.8 L1182.2,1197.8 L1177.9,1197.8 L1173.5,1197.8 L1169.1,1197.8 L1164.8,1197.8 L1160.4,1197.8 L1156.0,1197.8 L1151.7,1197.8 L1147.3,1197.8 L1142.9,1197.8 L1138.5,1197.8 L1134.2,1197.8 L1129.8,1197.8 L1125.4,1197.8 L1121.1,1197.8 L1116.7,1197.8 L1112.3,1197.8 L1108.0,1197.8 L1103.6,1197.8 L1099.2,1197.8 L1094.8,1197.8 L1090.5,1197.8 L1086.1,1197.8 L1081.7,1197.8 L1077.4,1197.8 L1073.0,1197.8 L1068.6,1197.8 L1064.2,1197.8 L1059.9,1197.8 L1055.5,1197.8 L1051.1,1197.8 L1046.8,1197.8 L1042.4,1197.8 L1038.0,1197.8 L1033.7,1197.8 L1029.3,1197.8 L1024.9,1197.8 L1020.5,1197.8 L1016.2,1197.8 L1011.8,1197.8 L1007.4,1197.8 L1003.1,1197.8 L998.7,1197.8 L994.3,1197.8 L990.0,1197.8 L985.6,1197.8 L981.2,1197.8 L976.9,1197.8 L972.5,1197.8 L968.1,1197.8 L963.7,1197.8 L959.4,1197.8 L955.0,1197.8 L950.6,1197.8 L946.3,1197.8 L941.9,1197.8 L937.5,1197.8 L933.2,1197.8 L928.8,1197.8 L924.4,1197.8 L920.0,1197.8 L915.7,1197.8 L911.3,1197.8 L906.9,1197.8 L902.6,1197.8 L898.2,1197.8 L893.8,1197.8 L889.5,1197.8 L885.1,1197.8 L880.7,1197.8 L876.3,1197.8 L872.0,1197.8 L867.6,1197.8 L863.2,1197.8 L858.9,1197.8 L854.5,1197.8 L850.1,1197.8 L845.8,1197.8 L841.4,1197.8 L837.0,1197.8 L832.6,1197.8 L828.3,1197.8 L823.9,1197.8 L819.5,1197.8 L815.2,1197.8 L810.8,1197.8 L806.4,1197.8 L802.0,1197.8 L797.7,1197.8 L793.3,1197.8 L788.9,1197.8 L784.6,1197.8 L780.2,1197.8 L775.8,1197.8 L771.5,1197.8 L767.1,1197.8 L762.7,1197.8 L758.4,1197.8 L754.0,1197.8 L749.6,1197.8 L745.2,1197.8 L740.9,1197.8 L736.5,1197.8 L732.1,1197.8 L727.8,1197.8 L723.4,1197.8 L719.0,1197.8 L714.6,1197.8 L710.3,1197.8 L705.9,1197.8 L701.5,1197.8 L697.2,1197.8 L692.8,1197.8 L688.4,1197.8 L684.1,1197.8 L679.7,1197.8 L675.3,1197.8 L671.0,1197.8 L666.6,1197.8 L662.2,1197.8 L657.8,1197.8 L653.5,1197.8 L649.1,1197.8 L644.7,1197.8 L640.4,1197.8 L636.0,1197.8 L631.6,1197.8 L627.2,1197.8 L622.9,1197.8 L618.5,1197.8 L614.1,1197.8 L609.8,1197.8 L605.4,1197.8 L601.0,1197.8 L596.7,1197.8 L592.3,1197.8 L587.9,1197.8 L583.5,1197.8 L579.2,1197.8 L574.8,1197.8 L570.4,1197.8 L566.1,1197.8 L561.7,1197.8 L557.3,1197.8 L553.0,1197.8 L548.6,1197.8 L544.2,1197.8 L539.9,1197.8 L535.5,1197.8 L531.1,1197.8 L526.7,1197.8 L522.4,1197.8 L518.0,1197.8 Z" fill="#238b45"/><path d="M518.0,1197.8 L522.4,1208.7 L526.7,1216.0 L531.1,1217.2 L535.5,1216.9 L539.9,1215.2 L544.2,1220.1 L548.6,1216.9 L553.0,1219.6 L557.3,1215.6 L561.7,1215.1 L566.1,1220.7 L570.4,1219.9 L574.8,1218.0 L579.2,1216.1 L583.5,1218.9 L587.9,1218.9 L592.3,1220.8 L596.7,1217.6 L601.0,1215.7 L605.4,1220.7 L609.8,1216.2 L614.1,1218.3 L618.5,1220.3 L622.9,1218.3 L627.2,1218.4 L631.6,1216.6 L636.0,1219.3 L640.4,1215.7 L644.7,1219.5 L649.1,1218.7 L653.5,1215.1 L657.8,1215.1 L662.2,1218.9 L666.6,1217.2 L671.0,1218.0 L675.3,1220.5 L679.7,1218.0 L684.1,1220.0 L688.4,1215.1 L692.8,1216.5 L697.2,1218.2 L701.5,1217.3 L705.9,1216.7 L710.3,1220.0 L714.6,1218.2 L719.0,1214.9 L723.4,1216.1 L727.8,1215.6 L732.1,1220.2 L736.5,1216.0 L740.9,1217.8 L745.2,1219.0 L749.6,1215.1 L754.0,1220.6 L758.4,1215.0 L762.7,1217.9 L767.1,1216.8 L771.5,1216.1 L775.8,1219.7 L780.2,1219.4 L784.6,1218.0 L788.9,1216.8 L793.3,1216.5 L797.7,1215.8 L802.0,1217.1 L806.4,1217.9 L810.8,1218.2 L815.2,1220.3 L819.5,1218.6 L823.9,1219.9 L828.3,1218.4 L832.6,1218.5 L837.0,1218.7 L841.4,1216.9 L845.8,1219.2 L850.1,1218.1 L854.5,1216.0 L858.9,1219.0 L863.2,1215.0 L867.6,1215.9 L872.0,1220.5 L876.3,1217.8 L880.7,1217.7 L885.1,1218.2 L889.5,1216.3 L893.8,1220.5 L898.2,1218.4 L902.6,1217.3 L906.9,1217.0 L911.3,1217.0 L915.7,1215.7 L920.0,1218.5 L924.4,1216.7 L928.8,1218.3 L933.2,1219.8 L937.5,1216.0 L941.9,1219.5 L946.3,1217.5 L950.6,1216.4 L955.0,1218.6 L959.4,1220.7 L963.7,1217.8 L968.1,1233.6 L972.5,1232.3 L976.9,1232.9 L981.2,1232.6 L985.6,1233.3 L990.0,1234.9 L994.3,1229.1 L998.7,1229.5 L1003.1,1234.3 L1007.4,1229.0 L1011.8,1231.7 L1016.2,1232.3 L1020.5,1235.6 L1024.9,1238.0 L1029.3,1229.6 L1033.7,1237.0 L1038.0,1235.1 L1042.4,1238.8 L1046.8,1233.4 L1051.1,1236.5 L1055.5,1236.5 L1059.9,1236.0 L1064.2,1232.2 L1068.6,1215.9 L1073.0,1212.6 L1077.4,1217.7 L1081.7,1216.4 L1086.1,1215.3 L1090.5,1218.0 L1094.8,1212.4 L1099.2,1216.0 L1103.6,1217.7 L1108.0,1216.6 L1112.3,1216.1 L1116.7,1216.2 L1121.1,1215.6 L1125.4,1218.0 L1129.8,1219.5 L1134.2,1219.3 L1138.5,1219.4 L1142.9,1213.6 L1147.3,1218.2 L1151.7,1214.7 L1156.0,1218.7 L1160.4,1219.4 L1164.8,1217.8 L1169.1,1219.8 L1173.5,1213.1 L1177.9,1213.8 L1182.2,1214.4 L1186.6,1214.7 L1191.0,1218.6 L1195.3,1216.0 L1199.7,1214.9 L1204.1,1217.0 L1208.5,1215.3 L1212.8,1217.9 L1217.2,1213.3 L1221.6,1213.8 L1225.9,1213.5 L1230.3,1216.5 L1234.7,1216.0 L1239.1,1214.2 L1243.4,1214.8 L1247.8,1219.3 L1252.2,1213.7 L1256.5,1214.1 L1260.9,1215.7 L1265.3,1213.8 L1269.6,1218.0 L1274.0,1218.2 L1278.4,1215.7 L1282.8,1212.1 L1287.1,1219.0 L1291.5,1217.9 L1295.9,1218.1 L1300.2,1215.8 L1304.6,1219.5 L1309.0,1219.4 L1313.3,1218.3 L1317.7,1214.8 L1322.1,1215.7 L1326.5,1219.5 L1330.8,1218.3 L1335.2,1219.1 L1339.6,1216.6 L1343.9,1213.8 L1348.3,1213.2 L1352.7,1214.7 L1357.0,1229.4 L1361.4,1227.5 L1365.8,1231.3 L1370.2,1229.4 L1374.5,1227.0 L1378.9,1230.1 L1383.3,1229.1 L1387.6,1233.5 L1392.0,1233.1 L1396.4,1233.7 L1400.7,1230.4 L1405.1,1231.2 L1409.5,1227.9 L1413.8,1228.6 L1418.2,1228.3 L1422.6,1234.1 L1427.0,1233.9 L1431.3,1230.5 L1435.7,1233.3 L1440.1,1229.7 L1444.4,1230.3 L1448.8,1233.3 L1453.2,1232.8 L1457.6,1229.9 L1461.9,1234.5 L1466.3,1230.1 L1470.7,1229.9 L1475.0,1233.6 L1479.4,1227.1 L1483.8,1230.3 L1488.1,1229.2 L1492.5,1229.1 L1496.9,1233.8 L1501.2,1228.6 L1505.6,1232.7 L1510.0,1233.4 L1514.4,1227.0 L1518.7,1227.0 L1523.1,1229.8 L1527.5,1228.8 L1531.8,1234.3 L1536.2,1226.9 L1540.6,1233.2 L1542.0,1234.5 L1542.0,1197.8 L1540.6,1197.8 L1536.2,1197.8 L1531.8,1197.8 L1527.5,1197.8 L1523.1,1197.8 L1518.7,1197.8 L1514.4,1197.8 L1510.0,1197.8 L1505.6,1197.8 L1501.2,1197.8 L1496.9,1197.8 L1492.5,1197.8 L1488.1,1197.8 L1483.8,1197.8 L1479.4,1197.8 L1475.0,1197.8 L1470.7,1197.8 L1466.3,1197.8 L1461.9,1197.8 L1457.6,1197.8 L1453.2,1197.8 L1448.8,1197.8 L1444.4,1197.8 L1440.1,1197.8 L1435.7,1197.8 L1431.3,1197.8 L1427.0,1197.8 L1422.6,1197.8 L1418.2,1197.8 L1413.8,1197.8 L1409.5,1197.8 L1405.1,1197.8 L1400.7,1197.8 L1396.4,1197.8 L1392.0,1197.8 L1387.6,1197.8 L1383.3,1197.8 L1378.9,1197.8 L1374.5,1197.8 L1370.2,1197.8 L1365.8,1197.8 L1361.4,1197.8 L1357.0,1197.8 L1352.7,1197.8 L1348.3,1197.8 L1343.9,1197.8 L1339.6,1197.8 L1335.2,1197.8 L1330.8,1197.8 L1326.5,1197.8 L1322.1,1197.8 L1317.7,1197.8 L1313.3,1197.8 L1309.0,1197.8 L1304.6,1197.8 L1300.2,1197.8 L1295.9,1197.8 L1291.5,1197.8 L1287.1,1197.8 L1282.8,1197.8 L1278.4,1197.8 L1274.0,1197.8 L1269.6,1197.8 L1265.3,1197.8 L1260.9,1197.8 L1256.5,1197.8 L1252.2,1197.8 L1247.8,1197.8 L1243.4,1197.8 L1239.1,1197.8 L1234.7,1197.8 L1230.3,1197.8 L1225.9,1197.8 L1221.6,1197.8 L1217.2,1197.8 L1212.8,1197.8 L1208.5,1197.8 L1204.1,1197.8 L1199.7,1197.8 L1195.3,1197.8 L1191.0,1197.8 L1186.6,1197.8 L1182.2,1197.8 L1177.9,1197.8 L1173.5,1197.8 L1169.1,1197.8 L1164.8,1197.8 L1160.4,1197.8 L1156.0,1197.8 L1151.7,1197.8 L1147.3,1197.8 L1142.9,1197.8 L1138.5,1197.8 L1134.2,1197.8 L1129.8,1197.8 L1125.4,1197.8 L1121.1,1197.8 L1116.7,1197.8 L1112.3,1197.8 L1108.0,1197.8 L1103.6,1197.8 L1099.2,1197.8 L1094.8,1197.8 L1090.5,1197.8 L1086.1,1197.8 L1081.7,1197.8 L1077.4,1197.8 L1073.0,1197.8 L1068.6,1197.8 L1064.2,1197.8 L1059.9,1197.8 L1055.5,1197.8 L1051.1,1197.8 L1046.8,1197.8 L1042.4,1197.8 L1038.0,1197.8 L1033.7,1197.8 L1029.3,1197.8 L1024.9,1197.8 L1020.5,1197.8 L1016.2,1197.8 L1011.8,1197.8 L1007.4,1197.8 L1003.1,1197.8 L998.7,1197.8 L994.3,1197.8 L990.0,1197.8 L985.6,1197.8 L981.2,1197.8 L976.9,1197.8 L972.5,1197.8 L968.1,1197.8 L963.7,1197.8 L959.4,1197.8 L955.0,1197.8 L950.6,1197.8 L946.3,1197.8 L941.9,1197.8 L937.5,1197.8 L933.2,1197.8 L928.8,1197.8 L924.4,1197.8 L920.0,1197.8 L915.7,1197.8 L911.3,1197.8 L906.9,1197.8 L902.6,1197.8 L898.2,1197.8 L893.8,1197.8 L889.5,1197.8 L885.1,1197.8 L880.7,1197.8 L876.3,1197.8 L872.0,1197.8 L867.6,1197.8 L863.2,1197.8 L858.9,1197.8 L854.5,1197.8 L850.1,1197.8 L845.8,1197.8 L841.4,1197.8 L837.0,1197.8 L832.6,1197.8 L828.3,1197.8 L823.9,1197.8 L819.5,1197.8 L815.2,1197.8 L810.8,1197.8 L806.4,1197.8 L802.0,1197.8 L797.7,1197.8 L793.3,1197.8 L788.9,1197.8 L784.6,1197.8 L780.2,1197.8 L775.8,1197.8 L771.5,1197.8 L767.1,1197.8 L762.7,1197.8 L758.4,1197.8 L754.0,1197.8 L749.6,1197.8 L745.2,1197.8 L740.9,1197.8 L736.5,1197.8 L732.1,1197.8 L727.8,1197.8 L723.4,1197.8 L719.0,1197.8 L714.6,1197.8 L710.3,1197.8 L705.9,1197.8 L701.5,1197.8 L697.2,1197.8 L692.8,1197.8 L688.4,1197.8 L684.1,1197.8 L679.7,1197.8 L675.3,1197.8 L671.0,1197.8 L666.6,1197.8 L662.2,1197.8 L657.8,1197.8 L653.5,1197.8 L649.1,1197.8 L644.7,1197.8 L640.4,1197.8 L636.0,1197.8 L631.6,1197.8 L627.2,1197.8 L622.9,1197.8 L618.5,1197.8 L614.1,1197.8 L609.8,1197.8 L605.4,1197.8 L601.0,1197.8 L596.7,1197.8 L592.3,1197.8 L587.9,1197.8 L583.5,1197.8 L579.2,1197.8 L574.8,1197.8 L570.4,1197.8 L566.1,1197.8 L561.7,1197.8 L557.3,1197.8 L553.0,1197.8 L548.6,1197.8 L544.2,1197.8 L539.9,1197.8 L535.5,1197.8 L531.1,1197.8 L526.7,1197.8 L522.4,1197.8 L518.0,1197.8 Z" fill="#00441b"/><path d="M518.0,1197.8 L522.4,1201.2 L526.7,1204.5 L531.1,1205.9 L535.5,1204.9 L539.9,1203.8 L544.2,1204.8 L548.6,1203.4 L553.0,1205.7 L557.3,1206.0 L561.7,1204.4 L566.1,1203.6 L570.4,1205.2 L574.8,1205.0 L579.2,1203.5 L583.5,1205.3 L587.9,1204.3 L592.3,1203.4 L596.7,1205.6 L601.0,1205.1 L605.4,1205.4 L609.8,1204.1 L614.1,1205.5 L618.5,1205.4 L622.9,1206.0 L627.2,1206.3 L631.6,1206.3 L636.0,1206.1 L640.4,1203.9 L644.7,1203.9 L649.1,1205.3 L653.5,1205.8 L657.8,1206.1 L662.2,1203.9 L666.6,1204.2 L671.0,1203.4 L675.3,1203.7 L679.7,1203.6 L684.1,1205.7 L688.4,1206.0 L692.8,1205.0 L697.2,1203.7 L701.5,1203.8 L705.9,1203.3 L710.3,1204.0 L714.6,1204.3 L719.0,1205.4 L723.4,1206.1 L727.8,1203.8 L732.1,1203.9 L736.5,1205.5 L740.9,1203.8 L745.2,1204.6 L749.6,1206.2 L754.0,1203.9 L758.4,1205.4 L762.7,1204.5 L767.1,1204.0 L771.5,1203.4 L775.8,1203.6 L780.2,1204.9 L784.6,1203.8 L788.9,1205.9 L793.3,1205.4 L797.7,1203.4 L802.0,1203.6 L806.4,1205.6 L810.8,1204.1 L815.2,1203.5 L819.5,1203.7 L823.9,1205.9 L828.3,1206.1 L832.6,1205.4 L837.0,1205.4 L841.4,1203.8 L845.8,1204.6 L850.1,1204.7 L854.5,1204.5 L858.9,1205.1 L863.2,1205.6 L867.6,1206.1 L872.0,1205.6 L876.3,1203.8 L880.7,1203.5 L885.1,1204.5 L889.5,1205.3 L893.8,1204.7 L898.2,1206.1 L902.6,1204.9 L906.9,1203.5 L911.3,1204.3 L915.7,1205.3 L920.0,1205.6 L924.4,1204.7 L928.8,1204.1 L933.2,1204.8 L937.5,1203.4 L941.9,1205.8 L946.3,1203.8 L950.6,1204.1 L955.0,1203.5 L959.4,1206.2 L963.7,1206.0 L968.1,1212.8 L972.5,1210.1 L976.9,1214.1 L981.2,1211.9 L985.6,1214.0 L990.0,1210.0 L994.3,1214.2 L998.7,1215.4 L1003.1,1210.4 L1007.4,1212.9 L1011.8,1211.3 L1016.2,1212.1 L1020.5,1213.2 L1024.9,1212.5 L1029.3,1214.4 L1033.7,1211.9 L1038.0,1214.5 L1042.4,1212.6 L1046.8,1211.6 L1051.1,1211.3 L1055.5,1215.5 L1059.9,1211.6 L1064.2,1214.6 L1068.6,1205.0 L1073.0,1202.8 L1077.4,1204.9 L1081.7,1206.0 L1086.1,1204.1 L1090.5,1205.6 L1094.8,1204.7 L1099.2,1204.6 L1103.6,1206.4 L1108.0,1203.6 L1112.3,1203.8 L1116.7,1204.1 L1121.1,1204.1 L1125.4,1206.2 L1129.8,1202.9 L1134.2,1203.2 L1138.5,1204.5 L1142.9,1206.2 L1147.3,1203.2 L1151.7,1206.5 L1156.0,1204.7 L1160.4,1205.9 L1164.8,1204.4 L1169.1,1206.3 L1173.5,1203.9 L1177.9,1205.5 L1182.2,1204.5 L1186.6,1203.5 L1191.0,1205.8 L1195.3,1206.3 L1199.7,1203.7 L1204.1,1206.6 L1208.5,1205.8 L1212.8,1204.5 L1217.2,1204.6 L1221.6,1205.6 L1225.9,1203.4 L1230.3,1205.9 L1234.7,1204.5 L1239.1,1205.8 L1243.4,1203.3 L1247.8,1204.7 L1252.2,1204.9 L1256.5,1205.7 L1260.9,1204.2 L1265.3,1204.6 L1269.6,1203.4 L1274.0,1206.3 L1278.4,1204.9 L1282.8,1203.1 L1287.1,1203.3 L1291.5,1204.6 L1295.9,1205.0 L1300.2,1205.5 L1304.6,1205.0 L1309.0,1205.3 L1313.3,1203.0 L1317.7,1204.2 L1322.1,1205.4 L1326.5,1203.2 L1330.8,1205.7 L1335.2,1204.3 L1339.6,1203.4 L1343.9,1206.7 L1348.3,1206.2 L1352.7,1203.7 L1357.0,1208.1 L1361.4,1211.6 L1365.8,1209.2 L1370.2,1210.6 L1374.5,1211.4 L1378.9,1209.3 L1383.3,1207.3 L1387.6,1211.3 L1392.0,1208.9 L1396.4,1209.9 L1400.7,1212.1 L1405.1,1211.6 L1409.5,1211.0 L1413.8,1212.2 L1418.2,1211.9 L1422.6,1207.5 L1427.0,1210.1 L1431.3,1210.1 L1435.7,1210.5 L1440.1,1211.6 L1444.4,1209.7 L1448.8,1207.7 L1453.2,1208.3 L1457.6,1210.9 L1461.9,1211.4 L1466.3,1210.5 L1470.7,1211.1 L1475.0,1211.3 L1479.4,1209.4 L1483.8,1211.2 L1488.1,1210.3 L1492.5,1209.8 L1496.9,1209.3 L1501.2,1210.0 L1505.6,1207.7 L1510.0,1211.7 L1514.4,1211.0 L1518.7,1209.1 L1523.1,1209.2 L1527.5,1212.2 L1531.8,1212.0 L1536.2,1211.1 L1540.6,1210.0 L1542.0,1208.0 L1542.0,1197.8 L1540.6,1197.8 L1536.2,1197.8 L1531.8,1197.8 L1527.5,1197.8 L1523.1,1197.8 L1518.7,1197.8 L1514.4,1197.8 L1510.0,1197.8 L1505.6,1197.8 L1501.2,1197.8 L1496.9,1197.8 L1492.5,1197.8 L1488.1,1197.8 L1483.8,1197.8 L1479.4,1197.8 L1475.0,1197.8 L1470.7,1197.8 L1466.3,1197.8 L1461.9,1197.8 L1457.6,1197.8 L1453.2,1197.8 L1448.8,1197.8 L1444.4,1197.8 L1440.1,1197.8 L1435.7,1197.8 L1431.3,1197.8 L1427.0,1197.8 L1422.6,1197.8 L1418.2,1197.8 L1413.8,1197.8 L1409.5,1197.8 L1405.1,1197.8 L1400.7,1197.8 L1396.4,1197.8 L1392.0,1197.8 L1387.6,1197.8 L1383.3,1197.8 L1378.9,1197.8 L1374.5,1197.8 L1370.2,1197.8 L1365.8,1197.8 L1361.4,1197.8 L1357.0,1197.8 L1352.7,1197.8 L1348.3,1197.8 L1343.9,1197.8 L1339.6,1197.8 L1335.2,1197.8 L1330.8,1197.8 L1326.5,1197.8 L1322.1,1197.8 L1317.7,1197.8 L1313.3,1197.8 L1309.0,1197.8 L1304.6,1197.8 L1300.2,1197.8 L1295.9,1197.8 L1291.5,1197.8 L1287.1,1197.8 L1282.8,1197.8 L1278.4,1197.8 L1274.0,1197.8 L1269.6,1197.8 L1265.3,1197.8 L1260.9,1197.8 L1256.5,1197.8 L1252.2,1197.8 L1247.8,1197.8 L1243.4,1197.8 L1239.1,1197.8 L1234.7,1197.8 L1230.3,1197.8 L1225.9,1197.8 L1221.6,1197.8 L1217.2,1197.8 L1212.8,1197.8 L1208.5,1197.8 L1204.1,1197.8 L1199.7,1197.8 L1195.3,1197.8 L1191.0,1197.8 L1186.6,1197.8 L1182.2,1197.8 L1177.9,1197.8 L1173.5,1197.8 L1169.1,1197.8 L1164.8,1197.8 L1160.4,1197.8 L1156.0,1197.8 L1151.7,1197.8 L1147.3,1197.8 L1142.9,1197.8 L1138.5,1197.8 L1134.2,1197.8 L1129.8,1197.8 L1125.4,1197.8 L1121.1,1197.8 L1116.7,1197.8 L1112.3,1197.8 L1108.0,1197.8 L1103.6,1197.8 L1099.2,1197.8 L1094.8,1197.8 L1090.5,1197.8 L1086.1,1197.8 L1081.7,1197.8 L1077.4,1197.8 L1073.0,1197.8 L1068.6,1197.8 L1064.2,1197.8 L1059.9,1197.8 L1055.5,1197.8 L1051.1,1197.8 L1046.8,1197.8 L1042.4,1197.8 L1038.0,1197.8 L1033.7,1197.8 L1029.3,1197.8 L1024.9,1197.8 L1020.5,1197.8 L1016.2,1197.8 L1011.8,1197.8 L1007.4,1197.8 L1003.1,1197.8 L998.7,1197.8 L994.3,1197.8 L990.0,1197.8 L985.6,1197.8 L981.2,1197.8 L976.9,1197.8 L972.5,1197.8 L968.1,1197.8 L963.7,1197.8 L959.4,1197.8 L955.0,1197.8 L950.6,1197.8 L946.3,1197.8 L941.9,1197.8 L937.5,1197.8 L933.2,1197.8 L928.8,1197.8 L924.4,1197.8 L920.0,1197.8 L915.7,1197.8 L911.3,1197.8 L906.9,1197.8 L902.6,1197.8 L898.2,1197.8 L893.8,1197.8 L889.5,1197.8 L885.1,1197.8 L880.7,1197.8 L876.3,1197.8 L872.0,1197.8 L867.6,1197.8 L863.2,1197.8 L858.9,1197.8 L854.5,1197.8 L850.1,1197.8 L845.8,1197.8 L841.4,1197.8 L837.0,1197.8 L832.6,1197.8 L828.3,1197.8 L823.9,1197.8 L819.5,1197.8 L815.2,1197.8 L810.8,1197.8 L806.4,1197.8 L802.0,1197.8 L797.7,1197.8 L793.3,1197.8 L788.9,1197.8 L784.6,1197.8 L780.2,1197.8 L775.8,1197.8 L771.5,1197.8 L767.1,1197.8 L762.7,1197.8 L758.4,1197.8 L754.0,1197.8 L749.6,1197.8 L745.2,1197.8 L740.9,1197.8 L736.5,1197.8 L732.1,1197.8 L727.8,1197.8 L723.4,1197.8 L719.0,1197.8 L714.6,1197.8 L710.3,1197.8 L705.9,1197.8 L701.5,1197.8 L697.2,1197.8 L692.8,1197.8 L688.4,1197.8 L684.1,1197.8 L679.7,1197.8 L675.3,1197.8 L671.0,1197.8 L666.6,1197.8 L662.2,1197.8 L657.8,1197.8 L653.5,1197.8 L649.1,1197.8 L644.7,1197.8 L640.4,1197.8 L636.0,1197.8 L631.6,1197.8 L627.2,1197.8 L622.9,1197.8 L618.5,1197.8 L614.1,1197.8 L609.8,1197.8 L605.4,1197.8 L601.0,1197.8 L596.7,1197.8 L592.3,1197.8 L587.9,1197.8 L583.5,1197.8 L579.2,1197.8 L574.8,1197.8 L570.4,1197.8 L566.1,1197.8 L561.7,1197.8 L557.3,1197.8 L553.0,1197.8 L548.6,1197.8 L544.2,1197.8 L539.9,1197.8 L535.5,1197.8 L531.1,1197.8 L526.7,1197.8 L522.4,1197.8 L518.0,1197.8 Z" fill="#74c476"/><path d="M518.0,1197.8 L522.4,1201.2 L526.7,1204.5 L531.1,1205.9 L535.5,1204.9 L539.9,1203.8 L544.2,1204.8 L548.6,1203.4 L553.0,1205.7 L557.3,1206.0 L561.7,1204.4 L566.1,1203.6 L570.4,1205.2 L574.8,1205.0 L579.2,1203.5 L583.5,1205.3 L587.9,1204.3 L592.3,1203.4 L596.7,1205.6 L601.0,1205.1 L605.4,1205.4 L609.8,1204.1 L614.1,1205.5 L618.5,1205.4 L622.9,1206.0 L627.2,1206.3 L631.6,1206.3 L636.0,1206.1 L640.4,1203.9 L644.7,1203.9 L649.1,1205.3 L653.5,1205.8 L657.8,1206.1 L662.2,1203.9 L666.6,1204.2 L671.0,1203.4 L675.3,1203.7 L679.7,1203.6 L684.1,1205.7 L688.4,1206.0 L692.8,1205.0 L697.2,1203.7 L701.5,1203.8 L705.9,1203.3 L710.3,1204.0 L714.6,1204.3 L719.0,1205.4 L723.4,1206.1 L727.8,1203.8 L732.1,1203.9 L736.5,1205.5 L740.9,1203.8 L745.2,1204.6 L749.6,1206.2 L754.0,1203.9 L758.4,1205.4 L762.7,1204.5 L767.1,1204.0 L771.5,1203.4 L775.8,1203.6 L780.2,1204.9 L784.6,1203.8 L788.9,1205.9 L793.3,1205.4 L797.7,1203.4 L802.0,1203.6 L806.4,1205.6 L810.8,1204.1 L815.2,1203.5 L819.5,1203.7 L823.9,1205.9 L828.3,1206.1 L832.6,1205.4 L837.0,1205.4 L841.4,1203.8 L845.8,1204.6 L850.1,1204.7 L854.5,1204.5 L858.9,1205.1 L863.2,1205.6 L867.6,1206.1 L872.0,1205.6 L876.3,1203.8 L880.7,1203.5 L885.1,1204.5 L889.5,1205.3 L893.8,1204.7 L898.2,1206.1 L902.6,1204.9 L906.9,1203.5 L911.3,1204.3 L915.7,1205.3 L920.0,1205.6 L924.4,1204.7 L928.8,1204.1 L933.2,1204.8 L937.5,1203.4 L941.9,1205.8 L946.3,1203.8 L950.6,1204.1 L955.0,1203.5 L959.4,1206.2 L963.7,1206.0 L968.1,1212.8 L972.5,1210.1 L976.9,1214.1 L981.2,1211.9 L985.6,1214.0 L990.0,1210.0 L994.3,1214.2 L998.7,1215.4 L1003.1,1210.4 L1007.4,1212.9 L1011.8,1211.3 L1016.2,1212.1 L1020.5,1213.2 L1024.9,1212.5 L1029.3,1214.4 L1033.7,1211.9 L1038.0,1214.5 L1042.4,1212.6 L1046.8,1211.6 L1051.1,1211.3 L1055.5,1215.5 L1059.9,1211.6 L1064.2,1214.6 L1068.6,1205.0 L1073.0,1202.8 L1077.4,1204.9 L1081.7,1206.0 L1086.1,1204.1 L1090.5,1205.6 L1094.8,1204.7 L1099.2,1204.6 L1103.6,1206.4 L1108.0,1203.6 L1112.3,1203.8 L1116.7,1204.1 L1121.1,1204.1 L1125.4,1206.2 L1129.8,1202.9 L1134.2,1203.2 L1138.5,1204.5 L1142.9,1206.2 L1147.3,1203.2 L1151.7,1206.5 L1156.0,1204.7 L1160.4,1205.9 L1164.8,1204.4 L1169.1,1206.3 L1173.5,1203.9 L1177.9,1205.5 L1182.2,1204.5 L1186.6,1203.5 L1191.0,1205.8 L1195.3,1206.3 L1199.7,1203.7 L1204.1,1206.6 L1208.5,1205.8 L1212.8,1204.5 L1217.2,1204.6 L1221.6,1205.6 L1225.9,1203.4 L1230.3,1205.9 L1234.7,1204.5 L1239.1,1205.8 L1243.4,1203.3 L1247.8,1204.7 L1252.2,1204.9 L1256.5,1205.7 L1260.9,1204.2 L1265.3,1204.6 L1269.6,1203.4 L1274.0,1206.3 L1278.4,1204.9 L1282.8,1203.1 L1287.1,1203.3 L1291.5,1204.6 L1295.9,1205.0 L1300.2,1205.5 L1304.6,1205.0 L1309.0,1205.3 L1313.3,1203.0 L1317.7,1204.2 L1322.1,1205.4 L1326.5,1203.2 L1330.8,1205.7 L1335.2,1204.3 L1339.6,1203.4 L1343.9,1206.7 L1348.3,1206.2 L1352.7,1203.7 L1357.0,1208.1 L1361.4,1211.6 L1365.8,1209.2 L1370.2,1210.6 L1374.5,1211.4 L1378.9,1209.3 L1383.3,1207.3 L1387.6,1211.3 L1392.0,1208.9 L1396.4,1209.9 L1400.7,1212.1 L1405.1,1211.6 L1409.5,1211.0 L1413.8,1212.2 L1418.2,1211.9 L1422.6,1207.5 L1427.0,1210.1 L1431.3,1210.1 L1435.7,1210.5 L1440.1,1211.6 L1444.4,1209.7 L1448.8,1207.7 L1453.2,1208.3 L1457.6,1210.9 L1461.9,1211.4 L1466.3,1210.5 L1470.7,1211.1 L1475.0,1211.3 L1479.4,1209.4 L1483.8,1211.2 L1488.1,1210.3 L1492.5,1209.8 L1496.9,1209.3 L1501.2,1210.0 L1505.6,1207.7 L1510.0,1211.7 L1514.4,1211.0 L1518.7,1209.1 L1523.1,1209.2 L1527.5,1212.2 L1531.8,1212.0 L1536.2,1211.1 L1540.6,1210.0 L1542.0,1208.0" fill="none" stroke="#e3f2dc" stroke-width="1.2"/><rect x="494" y="1195.8" width="26" height="4" fill="#74c476"/><rect x="518" y="1196.8" width="1024" height="2" fill="#74c476"/><rect x="494" y="1064" width="1048" height="2" fill="rgba(0,0,0,0.095)"/><rect x="494" y="1130" width="1048" height="2" fill="rgba(0,0,0,0.095)"/><rect x="494" y="1263" width="1048" height="2" fill="#777"/><rect x="688.8" y="1264" width="2" height="9" fill="#666"/><text x="689.8" y="1295" text-anchor="middle" font-family="Liberation Sans" font-size="22" fill="#666">16:00</text><rect x="950.8" y="1264" width="2" height="9" fill="#666"/><text x="951.8" y="1295" text-anchor="middle" font-family="Liberation Sans" font-size="22" fill="#666">17:00</text><rect x="1212.8" y="1264" width="2" height="9" fill="#666"/><text x="1213.8" y="1295" text-anchor="middle" font-family="Liberation Sans" font-size="22" fill="#666">18:00</text><rect x="1474.8" y="1264" width="2" height="9" fill="#666"/><text x="1475.8" y="1295" text-anchor="middle" font-family="Liberation Sans" font-size="22" fill="#666">19:00</text><rect x="558.3" y="1264" width="1.5" height="5" fill="#888"/><rect x="820.3" y="1264" width="1.5" height="5" fill="#888"/><rect x="1082.3" y="1264" width="1.5" height="5" fill="#888"/><rect x="1344.3" y="1264" width="1.5" height="5" fill="#888"/><text x="1663" y="442.7" text-anchor="end" font-family="Liberation Sans" font-size="22" fill="#666">300</text><text x="1663" y="527" text-anchor="end" font-family="Liberation Sans" font-size="22" fill="#666">200</text><text x="1663" y="610.8" text-anchor="end" font-family="Liberation Sans" font-size="22" fill="#666">100</text><text x="1663" y="694.4" text-anchor="end" font-family="Liberation Sans" font-size="22" fill="#666">0</text><path d="M1696.0,687.4 L1700.4,609.8 L1704.7,602.0 L1709.1,588.7 L1713.5,595.7 L1717.8,616.6 L1722.2,608.1 L1726.6,605.7 L1731.0,607.3 L1735.3,601.5 L1739.7,595.1 L1744.1,607.7 L1748.4,585.0 L1752.8,610.2 L1757.2,608.8 L1761.5,595.0 L1765.9,607.1 L1770.3,608.2 L1774.7,603.1 L1779.0,595.3 L1783.4,604.4 L1787.8,607.4 L1792.1,601.5 L1796.5,596.9 L1800.9,603.7 L1805.2,605.0 L1809.6,599.5 L1814.0,603.3 L1818.4,605.4 L1822.7,598.1 L1827.1,604.5 L1831.5,599.3 L1835.8,604.9 L1840.2,596.6 L1844.6,595.6 L1849.0,610.8 L1853.3,595.0 L1857.7,598.9 L1862.1,597.2 L1866.4,584.8 L1870.8,599.3 L1875.2,604.6 L1879.5,602.0 L1883.9,620.5 L1888.3,597.0 L1892.7,608.2 L1897.0,599.0 L1901.4,602.8 L1905.8,596.3 L1910.1,593.3 L1914.5,608.7 L1918.9,606.3 L1923.2,601.0 L1927.6,617.0 L1932.0,607.7 L1936.3,604.9 L1940.7,601.1 L1945.1,616.6 L1949.5,596.7 L1953.8,589.2 L1958.2,605.4 L1962.6,595.8 L1966.9,595.3 L1971.3,593.3 L1975.7,590.9 L1980.0,598.4 L1984.4,589.1 L1988.8,599.0 L1993.2,606.9 L1997.5,596.8 L2001.9,604.0 L2006.3,598.5 L2010.6,594.7 L2015.0,603.8 L2019.4,599.0 L2023.8,603.7 L2028.1,604.6 L2032.5,596.4 L2036.9,597.5 L2041.2,606.0 L2045.6,595.0 L2050.0,594.4 L2054.3,601.8 L2058.7,598.7 L2063.1,606.9 L2067.4,599.5 L2071.8,607.2 L2076.2,608.4 L2080.6,595.2 L2084.9,596.9 L2089.3,596.2 L2093.7,608.0 L2098.0,594.2 L2102.4,605.5 L2106.8,599.4 L2111.2,620.3 L2115.5,599.9 L2119.9,597.5 L2124.3,598.0 L2128.6,594.8 L2133.0,595.3 L2137.4,615.9 L2141.7,533.2 L2146.1,546.7 L2150.5,516.8 L2154.8,514.1 L2159.2,533.4 L2163.6,510.8 L2168.0,539.7 L2172.3,525.8 L2176.7,513.2 L2181.1,525.2 L2185.4,524.0 L2189.8,531.2 L2194.2,532.5 L2198.6,519.4 L2202.9,529.0 L2207.3,514.8 L2211.7,497.4 L2216.0,530.8 L2220.4,518.1 L2224.8,515.0 L2229.1,511.7 L2233.5,516.1 L2237.9,528.2 L2242.2,592.0 L2246.6,609.3 L2251.0,595.0 L2255.4,598.4 L2259.7,624.7 L2264.1,596.2 L2268.5,615.6 L2272.8,615.4 L2277.2,612.2 L2281.6,614.0 L2285.9,608.7 L2290.3,596.7 L2294.7,608.4 L2299.1,592.8 L2303.4,619.0 L2307.8,610.0 L2312.2,618.1 L2316.5,606.8 L2320.9,609.9 L2325.3,613.1 L2329.7,611.6 L2334.0,597.6 L2338.4,601.3 L2342.8,600.3 L2347.1,597.7 L2351.5,590.8 L2355.9,598.0 L2360.2,613.1 L2364.6,597.7 L2369.0,606.9 L2373.3,597.0 L2377.7,594.4 L2382.1,613.2 L2386.5,610.3 L2390.8,616.8 L2395.2,596.5 L2399.6,589.4 L2403.9,589.6 L2408.3,602.7 L2412.7,596.1 L2417.1,613.2 L2421.4,608.4 L2425.8,586.6 L2430.2,611.1 L2434.5,600.7 L2438.9,615.5 L2443.3,616.6 L2447.6,614.4 L2452.0,624.6 L2456.4,617.3 L2460.8,602.6 L2465.1,587.8 L2469.5,606.3 L2473.9,621.7 L2478.2,590.6 L2482.6,596.1 L2487.0,601.3 L2491.3,607.9 L2495.7,611.4 L2500.1,628.5 L2504.4,596.4 L2508.8,582.5 L2513.2,612.3 L2517.6,619.2 L2521.9,607.2 L2526.3,601.8 L2530.7,530.5 L2535.0,532.4 L2539.4,511.3 L2543.8,519.3 L2548.2,548.5 L2552.5,503.5 L2556.9,523.9 L2561.3,517.0 L2565.6,531.3 L2570.0,511.1 L2574.4,526.8 L2578.7,509.2 L2583.1,529.4 L2587.5,535.9 L2591.8,509.8 L2596.2,527.7 L2600.6,513.4 L2605.0,538.3 L2609.3,499.2 L2613.7,511.9 L2618.1,489.7 L2622.4,508.2 L2626.8,549.7 L2631.2,503.9 L2635.6,486.4 L2639.9,522.0 L2644.3,532.4 L2648.7,516.6 L2653.0,506.3 L2657.4,543.4 L2661.8,509.8 L2666.1,518.6 L2670.5,531.1 L2674.9,531.3 L2679.2,482.4 L2683.6,503.8 L2688.0,514.6 L2692.4,528.3 L2696.7,547.4 L2701.1,514.9 L2705.5,516.1 L2709.8,542.1 L2714.2,510.7 L2717.0,531.7 L2717.0,687.4 L2714.2,687.4 L2709.8,687.4 L2705.5,687.4 L2701.1,687.4 L2696.7,687.4 L2692.4,687.4 L2688.0,687.4 L2683.6,687.4 L2679.2,687.4 L2674.9,687.4 L2670.5,687.4 L2666.1,687.4 L2661.8,687.4 L2657.4,687.4 L2653.0,687.4 L2648.7,687.4 L2644.3,687.4 L2639.9,687.4 L2635.6,687.4 L2631.2,687.4 L2626.8,687.4 L2622.4,687.4 L2618.1,687.4 L2613.7,687.4 L2609.3,687.4 L2605.0,687.4 L2600.6,687.4 L2596.2,687.4 L2591.8,687.4 L2587.5,687.4 L2583.1,687.4 L2578.7,687.4 L2574.4,687.4 L2570.0,687.4 L2565.6,687.4 L2561.3,687.4 L2556.9,687.4 L2552.5,687.4 L2548.2,687.4 L2543.8,687.4 L2539.4,687.4 L2535.0,687.4 L2530.7,687.4 L2526.3,687.4 L2521.9,687.4 L2517.6,687.4 L2513.2,687.4 L2508.8,687.4 L2504.4,687.4 L2500.1,687.4 L2495.7,687.4 L2491.3,687.4 L2487.0,687.4 L2482.6,687.4 L2478.2,687.4 L2473.9,687.4 L2469.5,687.4 L2465.1,687.4 L2460.8,687.4 L2456.4,687.4 L2452.0,687.4 L2447.6,687.4 L2443.3,687.4 L2438.9,687.4 L2434.5,687.4 L2430.2,687.4 L2425.8,687.4 L2421.4,687.4 L2417.1,687.4 L2412.7,687.4 L2408.3,687.4 L2403.9,687.4 L2399.6,687.4 L2395.2,687.4 L2390.8,687.4 L2386.5,687.4 L2382.1,687.4 L2377.7,687.4 L2373.3,687.4 L2369.0,687.4 L2364.6,687.4 L2360.2,687.4 L2355.9,687.4 L2351.5,687.4 L2347.1,687.4 L2342.8,687.4 L2338.4,687.4 L2334.0,687.4 L2329.7,687.4 L2325.3,687.4 L2320.9,687.4 L2316.5,687.4 L2312.2,687.4 L2307.8,687.4 L2303.4,687.4 L2299.1,687.4 L2294.7,687.4 L2290.3,687.4 L2285.9,687.4 L2281.6,687.4 L2277.2,687.4 L2272.8,687.4 L2268.5,687.4 L2264.1,687.4 L2259.7,687.4 L2255.4,687.4 L2251.0,687.4 L2246.6,687.4 L2242.2,687.4 L2237.9,687.4 L2233.5,687.4 L2229.1,687.4 L2224.8,687.4 L2220.4,687.4 L2216.0,687.4 L2211.7,687.4 L2207.3,687.4 L2202.9,687.4 L2198.6,687.4 L2194.2,687.4 L2189.8,687.4 L2185.4,687.4 L2181.1,687.4 L2176.7,687.4 L2172.3,687.4 L2168.0,687.4 L2163.6,687.4 L2159.2,687.4 L2154.8,687.4 L2150.5,687.4 L2146.1,687.4 L2141.7,687.4 L2137.4,687.4 L2133.0,687.4 L2128.6,687.4 L2124.3,687.4 L2119.9,687.4 L2115.5,687.4 L2111.2,687.4 L2106.8,687.4 L2102.4,687.4 L2098.0,687.4 L2093.7,687.4 L2089.3,687.4 L2084.9,687.4 L2080.6,687.4 L2076.2,687.4 L2071.8,687.4 L2067.4,687.4 L2063.1,687.4 L2058.7,687.4 L2054.3,687.4 L2050.0,687.4 L2045.6,687.4 L2041.2,687.4 L2036.9,687.4 L2032.5,687.4 L2028.1,687.4 L2023.8,687.4 L2019.4,687.4 L2015.0,687.4 L2010.6,687.4 L2006.3,687.4 L2001.9,687.4 L1997.5,687.4 L1993.2,687.4 L1988.8,687.4 L1984.4,687.4 L1980.0,687.4 L1975.7,687.4 L1971.3,687.4 L1966.9,687.4 L1962.6,687.4 L1958.2,687.4 L1953.8,687.4 L1949.5,687.4 L1945.1,687.4 L1940.7,687.4 L1936.3,687.4 L1932.0,687.4 L1927.6,687.4 L1923.2,687.4 L1918.9,687.4 L1914.5,687.4 L1910.1,687.4 L1905.8,687.4 L1901.4,687.4 L1897.0,687.4 L1892.7,687.4 L1888.3,687.4 L1883.9,687.4 L1879.5,687.4 L1875.2,687.4 L1870.8,687.4 L1866.4,687.4 L1862.1,687.4 L1857.7,687.4 L1853.3,687.4 L1849.0,687.4 L1844.6,687.4 L1840.2,687.4 L1835.8,687.4 L1831.5,687.4 L1827.1,687.4 L1822.7,687.4 L1818.4,687.4 L1814.0,687.4 L1809.6,687.4 L1805.2,687.4 L1800.9,687.4 L1796.5,687.4 L1792.1,687.4 L1787.8,687.4 L1783.4,687.4 L1779.0,687.4 L1774.7,687.4 L1770.3,687.4 L1765.9,687.4 L1761.5,687.4 L1757.2,687.4 L1752.8,687.4 L1748.4,687.4 L1744.1,687.4 L1739.7,687.4 L1735.3,687.4 L1731.0,687.4 L1726.6,687.4 L1722.2,687.4 L1717.8,687.4 L1713.5,687.4 L1709.1,687.4 L1704.7,687.4 L1700.4,687.4 L1696.0,687.4 Z" fill="#3598cd"/><path d="M1696.0,687.4 L1700.4,622.8 L1704.7,608.8 L1709.1,621.9 L1713.5,610.2 L1717.8,622.6 L1722.2,614.1 L1726.6,611.7 L1731.0,617.0 L1735.3,620.2 L1739.7,619.4 L1744.1,614.2 L1748.4,623.1 L1752.8,616.2 L1757.2,614.8 L1761.5,638.0 L1765.9,625.7 L1770.3,614.4 L1774.7,622.2 L1779.0,617.3 L1783.4,616.2 L1787.8,616.7 L1792.1,609.1 L1796.5,613.8 L1800.9,625.5 L1805.2,613.1 L1809.6,634.6 L1814.0,613.9 L1818.4,611.4 L1822.7,612.2 L1827.1,624.1 L1831.5,612.9 L1835.8,613.1 L1840.2,609.9 L1844.6,613.5 L1849.0,618.4 L1853.3,628.4 L1857.7,623.1 L1862.1,621.9 L1866.4,611.3 L1870.8,628.8 L1875.2,610.6 L1879.5,623.0 L1883.9,626.5 L1888.3,615.3 L1892.7,619.8 L1897.0,617.1 L1901.4,608.8 L1905.8,612.3 L1910.1,621.7 L1914.5,620.1 L1918.9,613.7 L1923.2,607.0 L1927.6,624.2 L1932.0,613.7 L1936.3,625.0 L1940.7,613.6 L1945.1,622.6 L1949.5,609.4 L1953.8,615.4 L1958.2,611.4 L1962.6,621.5 L1966.9,623.2 L1971.3,625.6 L1975.7,627.5 L1980.0,620.1 L1984.4,623.5 L1988.8,618.7 L1993.2,625.5 L1997.5,614.0 L2001.9,614.6 L2006.3,623.6 L2010.6,613.8 L2015.0,610.7 L2019.4,634.7 L2023.8,620.2 L2028.1,612.4 L2032.5,623.0 L2036.9,613.6 L2041.2,612.0 L2045.6,618.9 L2050.0,612.0 L2054.3,623.6 L2058.7,609.2 L2063.1,622.9 L2067.4,614.3 L2071.8,621.9 L2076.2,614.4 L2080.6,623.1 L2084.9,624.1 L2089.3,609.2 L2093.7,616.4 L2098.0,625.5 L2102.4,611.5 L2106.8,611.6 L2111.2,626.3 L2115.5,606.3 L2119.9,611.0 L2124.3,611.0 L2128.6,620.2 L2133.0,621.4 L2137.4,621.9 L2141.7,576.5 L2146.1,559.2 L2150.5,522.8 L2154.8,559.7 L2159.2,574.7 L2163.6,516.8 L2168.0,545.7 L2172.3,541.1 L2176.7,552.9 L2181.1,550.0 L2185.4,534.2 L2189.8,560.7 L2194.2,556.6 L2198.6,549.5 L2202.9,535.0 L2207.3,550.5 L2211.7,547.6 L2216.0,537.2 L2220.4,538.8 L2224.8,534.4 L2229.1,534.9 L2233.5,545.8 L2237.9,555.7 L2242.2,649.9 L2246.6,615.4 L2251.0,601.0 L2255.4,623.2 L2259.7,630.7 L2264.1,617.0 L2268.5,625.7 L2272.8,621.4 L2277.2,620.9 L2281.6,620.3 L2285.9,619.0 L2290.3,625.7 L2294.7,614.4 L2299.1,611.6 L2303.4,625.0 L2307.8,632.0 L2312.2,624.1 L2316.5,630.5 L2320.9,630.1 L2325.3,625.1 L2329.7,627.0 L2334.0,606.3 L2338.4,607.3 L2342.8,611.6 L2347.1,626.3 L2351.5,648.1 L2355.9,620.8 L2360.2,619.1 L2364.6,618.3 L2369.0,625.7 L2373.3,634.3 L2377.7,612.7 L2382.1,619.2 L2386.5,621.9 L2390.8,622.8 L2395.2,616.0 L2399.6,629.4 L2403.9,626.4 L2408.3,618.4 L2412.7,626.4 L2417.1,633.3 L2421.4,622.8 L2425.8,613.3 L2430.2,628.6 L2434.5,631.4 L2438.9,629.9 L2443.3,647.2 L2447.6,632.5 L2452.0,630.6 L2456.4,626.7 L2460.8,627.7 L2465.1,606.2 L2469.5,616.9 L2473.9,634.0 L2478.2,614.4 L2482.6,621.1 L2487.0,635.3 L2491.3,617.7 L2495.7,629.8 L2500.1,634.5 L2504.4,612.9 L2508.8,614.1 L2513.2,618.3 L2517.6,625.2 L2521.9,623.0 L2526.3,627.9 L2530.7,558.3 L2535.0,541.4 L2539.4,553.2 L2543.8,548.6 L2548.2,554.5 L2552.5,571.3 L2556.9,574.3 L2561.3,553.4 L2565.6,575.2 L2570.0,596.8 L2574.4,563.6 L2578.7,563.5 L2583.1,556.2 L2587.5,543.5 L2591.8,573.6 L2596.2,577.0 L2600.6,548.3 L2605.0,544.3 L2609.3,517.3 L2613.7,544.4 L2618.1,545.1 L2622.4,550.9 L2626.8,574.1 L2631.2,536.3 L2635.6,581.8 L2639.9,550.9 L2644.3,539.8 L2648.7,568.8 L2653.0,576.7 L2657.4,571.9 L2661.8,577.7 L2666.1,556.3 L2670.5,540.1 L2674.9,555.8 L2679.2,571.2 L2683.6,572.2 L2688.0,550.0 L2692.4,548.0 L2696.7,553.4 L2701.1,544.9 L2705.5,537.5 L2709.8,576.9 L2714.2,544.6 L2717.0,539.0 L2717.0,687.4 L2714.2,687.4 L2709.8,687.4 L2705.5,687.4 L2701.1,687.4 L2696.7,687.4 L2692.4,687.4 L2688.0,687.4 L2683.6,687.4 L2679.2,687.4 L2674.9,687.4 L2670.5,687.4 L2666.1,687.4 L2661.8,687.4 L2657.4,687.4 L2653.0,687.4 L2648.7,687.4 L2644.3,687.4 L2639.9,687.4 L2635.6,687.4 L2631.2,687.4 L2626.8,687.4 L2622.4,687.4 L2618.1,687.4 L2613.7,687.4 L2609.3,687.4 L2605.0,687.4 L2600.6,687.4 L2596.2,687.4 L2591.8,687.4 L2587.5,687.4 L2583.1,687.4 L2578.7,687.4 L2574.4,687.4 L2570.0,687.4 L2565.6,687.4 L2561.3,687.4 L2556.9,687.4 L2552.5,687.4 L2548.2,687.4 L2543.8,687.4 L2539.4,687.4 L2535.0,687.4 L2530.7,687.4 L2526.3,687.4 L2521.9,687.4 L2517.6,687.4 L2513.2,687.4 L2508.8,687.4 L2504.4,687.4 L2500.1,687.4 L2495.7,687.4 L2491.3,687.4 L2487.0,687.4 L2482.6,687.4 L2478.2,687.4 L2473.9,687.4 L2469.5,687.4 L2465.1,687.4 L2460.8,687.4 L2456.4,687.4 L2452.0,687.4 L2447.6,687.4 L2443.3,687.4 L2438.9,687.4 L2434.5,687.4 L2430.2,687.4 L2425.8,687.4 L2421.4,687.4 L2417.1,687.4 L2412.7,687.4 L2408.3,687.4 L2403.9,687.4 L2399.6,687.4 L2395.2,687.4 L2390.8,687.4 L2386.5,687.4 L2382.1,687.4 L2377.7,687.4 L2373.3,687.4 L2369.0,687.4 L2364.6,687.4 L2360.2,687.4 L2355.9,687.4 L2351.5,687.4 L2347.1,687.4 L2342.8,687.4 L2338.4,687.4 L2334.0,687.4 L2329.7,687.4 L2325.3,687.4 L2320.9,687.4 L2316.5,687.4 L2312.2,687.4 L2307.8,687.4 L2303.4,687.4 L2299.1,687.4 L2294.7,687.4 L2290.3,687.4 L2285.9,687.4 L2281.6,687.4 L2277.2,687.4 L2272.8,687.4 L2268.5,687.4 L2264.1,687.4 L2259.7,687.4 L2255.4,687.4 L2251.0,687.4 L2246.6,687.4 L2242.2,687.4 L2237.9,687.4 L2233.5,687.4 L2229.1,687.4 L2224.8,687.4 L2220.4,687.4 L2216.0,687.4 L2211.7,687.4 L2207.3,687.4 L2202.9,687.4 L2198.6,687.4 L2194.2,687.4 L2189.8,687.4 L2185.4,687.4 L2181.1,687.4 L2176.7,687.4 L2172.3,687.4 L2168.0,687.4 L2163.6,687.4 L2159.2,687.4 L2154.8,687.4 L2150.5,687.4 L2146.1,687.4 L2141.7,687.4 L2137.4,687.4 L2133.0,687.4 L2128.6,687.4 L2124.3,687.4 L2119.9,687.4 L2115.5,687.4 L2111.2,687.4 L2106.8,687.4 L2102.4,687.4 L2098.0,687.4 L2093.7,687.4 L2089.3,687.4 L2084.9,687.4 L2080.6,687.4 L2076.2,687.4 L2071.8,687.4 L2067.4,687.4 L2063.1,687.4 L2058.7,687.4 L2054.3,687.4 L2050.0,687.4 L2045.6,687.4 L2041.2,687.4 L2036.9,687.4 L2032.5,687.4 L2028.1,687.4 L2023.8,687.4 L2019.4,687.4 L2015.0,687.4 L2010.6,687.4 L2006.3,687.4 L2001.9,687.4 L1997.5,687.4 L1993.2,687.4 L1988.8,687.4 L1984.4,687.4 L1980.0,687.4 L1975.7,687.4 L1971.3,687.4 L1966.9,687.4 L1962.6,687.4 L1958.2,687.4 L1953.8,687.4 L1949.5,687.4 L1945.1,687.4 L1940.7,687.4 L1936.3,687.4 L1932.0,687.4 L1927.6,687.4 L1923.2,687.4 L1918.9,687.4 L1914.5,687.4 L1910.1,687.4 L1905.8,687.4 L1901.4,687.4 L1897.0,687.4 L1892.7,687.4 L1888.3,687.4 L1883.9,687.4 L1879.5,687.4 L1875.2,687.4 L1870.8,687.4 L1866.4,687.4 L1862.1,687.4 L1857.7,687.4 L1853.3,687.4 L1849.0,687.4 L1844.6,687.4 L1840.2,687.4 L1835.8,687.4 L1831.5,687.4 L1827.1,687.4 L1822.7,687.4 L1818.4,687.4 L1814.0,687.4 L1809.6,687.4 L1805.2,687.4 L1800.9,687.4 L1796.5,687.4 L1792.1,687.4 L1787.8,687.4 L1783.4,687.4 L1779.0,687.4 L1774.7,687.4 L1770.3,687.4 L1765.9,687.4 L1761.5,687.4 L1757.2,687.4 L1752.8,687.4 L1748.4,687.4 L1744.1,687.4 L1739.7,687.4 L1735.3,687.4 L1731.0,687.4 L1726.6,687.4 L1722.2,687.4 L1717.8,687.4 L1713.5,687.4 L1709.1,687.4 L1704.7,687.4 L1700.4,687.4 L1696.0,687.4 Z" fill="#9380b9"/><path d="M1696.0,687.4 L1700.4,658.1 L1704.7,656.3 L1709.1,657.8 L1713.5,657.7 L1717.8,648.2 L1722.2,667.6 L1726.6,662.4 L1731.0,652.4 L1735.3,665.4 L1739.7,650.0 L1744.1,661.3 L1748.4,659.4 L1752.8,654.6 L1757.2,649.9 L1761.5,661.8 L1765.9,655.6 L1770.3,654.8 L1774.7,649.9 L1779.0,662.2 L1783.4,655.5 L1787.8,665.2 L1792.1,657.9 L1796.5,659.4 L1800.9,654.3 L1805.2,656.9 L1809.6,660.1 L1814.0,660.4 L1818.4,666.0 L1822.7,662.2 L1827.1,661.9 L1831.5,656.9 L1835.8,658.3 L1840.2,653.9 L1844.6,659.0 L1849.0,665.6 L1853.3,658.6 L1857.7,654.9 L1862.1,653.1 L1866.4,651.1 L1870.8,654.4 L1875.2,653.3 L1879.5,659.0 L1883.9,656.0 L1888.3,653.8 L1892.7,659.4 L1897.0,660.3 L1901.4,657.2 L1905.8,661.2 L1910.1,655.5 L1914.5,660.1 L1918.9,647.5 L1923.2,664.7 L1927.6,656.8 L1932.0,657.3 L1936.3,659.9 L1940.7,653.3 L1945.1,662.9 L1949.5,653.9 L1953.8,648.2 L1958.2,660.9 L1962.6,657.7 L1966.9,657.8 L1971.3,654.0 L1975.7,648.7 L1980.0,661.8 L1984.4,663.2 L1988.8,657.3 L1993.2,657.1 L1997.5,655.7 L2001.9,659.4 L2006.3,654.0 L2010.6,657.2 L2015.0,661.4 L2019.4,656.4 L2023.8,658.8 L2028.1,658.5 L2032.5,661.4 L2036.9,660.3 L2041.2,656.6 L2045.6,657.3 L2050.0,661.8 L2054.3,661.9 L2058.7,652.5 L2063.1,654.4 L2067.4,654.4 L2071.8,656.5 L2076.2,648.6 L2080.6,655.1 L2084.9,667.8 L2089.3,654.7 L2093.7,654.7 L2098.0,661.8 L2102.4,652.5 L2106.8,661.8 L2111.2,654.7 L2115.5,657.7 L2119.9,656.5 L2124.3,657.9 L2128.6,660.6 L2133.0,662.8 L2137.4,646.8 L2141.7,627.1 L2146.1,625.9 L2150.5,621.7 L2154.8,631.2 L2159.2,626.8 L2163.6,629.4 L2168.0,630.1 L2172.3,626.1 L2176.7,624.8 L2181.1,624.1 L2185.4,631.0 L2189.8,627.5 L2194.2,628.4 L2198.6,632.3 L2202.9,633.3 L2207.3,621.3 L2211.7,623.4 L2216.0,624.9 L2220.4,617.4 L2224.8,627.0 L2229.1,629.0 L2233.5,632.5 L2237.9,631.3 L2242.2,658.2 L2246.6,658.3 L2251.0,660.1 L2255.4,668.4 L2259.7,665.9 L2264.1,657.4 L2268.5,660.4 L2272.8,665.1 L2277.2,663.5 L2281.6,666.7 L2285.9,665.8 L2290.3,667.9 L2294.7,662.3 L2299.1,657.6 L2303.4,655.7 L2307.8,663.9 L2312.2,666.9 L2316.5,654.6 L2320.9,666.4 L2325.3,662.4 L2329.7,666.5 L2334.0,666.0 L2338.4,659.0 L2342.8,663.7 L2347.1,656.5 L2351.5,668.1 L2355.9,660.3 L2360.2,668.3 L2364.6,662.9 L2369.0,658.6 L2373.3,670.9 L2377.7,673.4 L2382.1,668.1 L2386.5,651.4 L2390.8,663.5 L2395.2,667.3 L2399.6,665.5 L2403.9,657.6 L2408.3,663.1 L2412.7,654.1 L2417.1,667.5 L2421.4,671.9 L2425.8,660.5 L2430.2,660.1 L2434.5,662.1 L2438.9,658.5 L2443.3,664.1 L2447.6,660.9 L2452.0,662.0 L2456.4,658.7 L2460.8,666.7 L2465.1,658.7 L2469.5,664.7 L2473.9,659.9 L2478.2,658.8 L2482.6,661.6 L2487.0,650.3 L2491.3,650.5 L2495.7,664.2 L2500.1,664.5 L2504.4,665.2 L2508.8,659.5 L2513.2,664.5 L2517.6,657.5 L2521.9,659.4 L2526.3,664.3 L2530.7,632.8 L2535.0,623.2 L2539.4,626.0 L2543.8,613.0 L2548.2,611.5 L2552.5,627.6 L2556.9,627.4 L2561.3,632.6 L2565.6,607.3 L2570.0,631.6 L2574.4,629.5 L2578.7,624.7 L2583.1,617.4 L2587.5,621.7 L2591.8,631.5 L2596.2,620.9 L2600.6,622.1 L2605.0,639.3 L2609.3,626.4 L2613.7,629.4 L2618.1,623.7 L2622.4,623.1 L2626.8,615.2 L2631.2,622.8 L2635.6,630.0 L2639.9,610.3 L2644.3,616.1 L2648.7,604.6 L2653.0,613.4 L2657.4,619.7 L2661.8,608.0 L2666.1,618.0 L2670.5,616.4 L2674.9,622.0 L2679.2,605.2 L2683.6,622.2 L2688.0,606.0 L2692.4,619.4 L2696.7,612.1 L2701.1,607.7 L2705.5,617.6 L2709.8,604.5 L2714.2,603.3 L2717.0,607.5 L2717.0,687.4 L2714.2,687.4 L2709.8,687.4 L2705.5,687.4 L2701.1,687.4 L2696.7,687.4 L2692.4,687.4 L2688.0,687.4 L2683.6,687.4 L2679.2,687.4 L2674.9,687.4 L2670.5,687.4 L2666.1,687.4 L2661.8,687.4 L2657.4,687.4 L2653.0,687.4 L2648.7,687.4 L2644.3,687.4 L2639.9,687.4 L2635.6,687.4 L2631.2,687.4 L2626.8,687.4 L2622.4,687.4 L2618.1,687.4 L2613.7,687.4 L2609.3,687.4 L2605.0,687.4 L2600.6,687.4 L2596.2,687.4 L2591.8,687.4 L2587.5,687.4 L2583.1,687.4 L2578.7,687.4 L2574.4,687.4 L2570.0,687.4 L2565.6,687.4 L2561.3,687.4 L2556.9,687.4 L2552.5,687.4 L2548.2,687.4 L2543.8,687.4 L2539.4,687.4 L2535.0,687.4 L2530.7,687.4 L2526.3,687.4 L2521.9,687.4 L2517.6,687.4 L2513.2,687.4 L2508.8,687.4 L2504.4,687.4 L2500.1,687.4 L2495.7,687.4 L2491.3,687.4 L2487.0,687.4 L2482.6,687.4 L2478.2,687.4 L2473.9,687.4 L2469.5,687.4 L2465.1,687.4 L2460.8,687.4 L2456.4,687.4 L2452.0,687.4 L2447.6,687.4 L2443.3,687.4 L2438.9,687.4 L2434.5,687.4 L2430.2,687.4 L2425.8,687.4 L2421.4,687.4 L2417.1,687.4 L2412.7,687.4 L2408.3,687.4 L2403.9,687.4 L2399.6,687.4 L2395.2,687.4 L2390.8,687.4 L2386.5,687.4 L2382.1,687.4 L2377.7,687.4 L2373.3,687.4 L2369.0,687.4 L2364.6,687.4 L2360.2,687.4 L2355.9,687.4 L2351.5,687.4 L2347.1,687.4 L2342.8,687.4 L2338.4,687.4 L2334.0,687.4 L2329.7,687.4 L2325.3,687.4 L2320.9,687.4 L2316.5,687.4 L2312.2,687.4 L2307.8,687.4 L2303.4,687.4 L2299.1,687.4 L2294.7,687.4 L2290.3,687.4 L2285.9,687.4 L2281.6,687.4 L2277.2,687.4 L2272.8,687.4 L2268.5,687.4 L2264.1,687.4 L2259.7,687.4 L2255.4,687.4 L2251.0,687.4 L2246.6,687.4 L2242.2,687.4 L2237.9,687.4 L2233.5,687.4 L2229.1,687.4 L2224.8,687.4 L2220.4,687.4 L2216.0,687.4 L2211.7,687.4 L2207.3,687.4 L2202.9,687.4 L2198.6,687.4 L2194.2,687.4 L2189.8,687.4 L2185.4,687.4 L2181.1,687.4 L2176.7,687.4 L2172.3,687.4 L2168.0,687.4 L2163.6,687.4 L2159.2,687.4 L2154.8,687.4 L2150.5,687.4 L2146.1,687.4 L2141.7,687.4 L2137.4,687.4 L2133.0,687.4 L2128.6,687.4 L2124.3,687.4 L2119.9,687.4 L2115.5,687.4 L2111.2,687.4 L2106.8,687.4 L2102.4,687.4 L2098.0,687.4 L2093.7,687.4 L2089.3,687.4 L2084.9,687.4 L2080.6,687.4 L2076.2,687.4 L2071.8,687.4 L2067.4,687.4 L2063.1,687.4 L2058.7,687.4 L2054.3,687.4 L2050.0,687.4 L2045.6,687.4 L2041.2,687.4 L2036.9,687.4 L2032.5,687.4 L2028.1,687.4 L2023.8,687.4 L2019.4,687.4 L2015.0,687.4 L2010.6,687.4 L2006.3,687.4 L2001.9,687.4 L1997.5,687.4 L1993.2,687.4 L1988.8,687.4 L1984.4,687.4 L1980.0,687.4 L1975.7,687.4 L1971.3,687.4 L1966.9,687.4 L1962.6,687.4 L1958.2,687.4 L1953.8,687.4 L1949.5,687.4 L1945.1,687.4 L1940.7,687.4 L1936.3,687.4 L1932.0,687.4 L1927.6,687.4 L1923.2,687.4 L1918.9,687.4 L1914.5,687.4 L1910.1,687.4 L1905.8,687.4 L1901.4,687.4 L1897.0,687.4 L1892.7,687.4 L1888.3,687.4 L1883.9,687.4 L1879.5,687.4 L1875.2,687.4 L1870.8,687.4 L1866.4,687.4 L1862.1,687.4 L1857.7,687.4 L1853.3,687.4 L1849.0,687.4 L1844.6,687.4 L1840.2,687.4 L1835.8,687.4 L1831.5,687.4 L1827.1,687.4 L1822.7,687.4 L1818.4,687.4 L1814.0,687.4 L1809.6,687.4 L1805.2,687.4 L1800.9,687.4 L1796.5,687.4 L1792.1,687.4 L1787.8,687.4 L1783.4,687.4 L1779.0,687.4 L1774.7,687.4 L1770.3,687.4 L1765.9,687.4 L1761.5,687.4 L1757.2,687.4 L1752.8,687.4 L1748.4,687.4 L1744.1,687.4 L1739.7,687.4 L1735.3,687.4 L1731.0,687.4 L1726.6,687.4 L1722.2,687.4 L1717.8,687.4 L1713.5,687.4 L1709.1,687.4 L1704.7,687.4 L1700.4,687.4 L1696.0,687.4 Z" fill="#ffcc00"/><path d="M1670.0,687.4 L1696.0,687.4 L1700.4,609.8 L1704.7,602.0 L1709.1,588.7 L1713.5,595.7 L1717.8,616.6 L1722.2,608.1 L1726.6,605.7 L1731.0,607.3 L1735.3,601.5 L1739.7,595.1 L1744.1,607.7 L1748.4,585.0 L1752.8,610.2 L1757.2,608.8 L1761.5,595.0 L1765.9,607.1 L1770.3,608.2 L1774.7,603.1 L1779.0,595.3 L1783.4,604.4 L1787.8,607.4 L1792.1,601.5 L1796.5,596.9 L1800.9,603.7 L1805.2,605.0 L1809.6,599.5 L1814.0,603.3 L1818.4,605.4 L1822.7,598.1 L1827.1,604.5 L1831.5,599.3 L1835.8,604.9 L1840.2,596.6 L1844.6,595.6 L1849.0,610.8 L1853.3,595.0 L1857.7,598.9 L1862.1,597.2 L1866.4,584.8 L1870.8,599.3 L1875.2,604.6 L1879.5,602.0 L1883.9,620.5 L1888.3,597.0 L1892.7,608.2 L1897.0,599.0 L1901.4,602.8 L1905.8,596.3 L1910.1,593.3 L1914.5,608.7 L1918.9,606.3 L1923.2,601.0 L1927.6,617.0 L1932.0,607.7 L1936.3,604.9 L1940.7,601.1 L1945.1,616.6 L1949.5,596.7 L1953.8,589.2 L1958.2,605.4 L1962.6,595.8 L1966.9,595.3 L1971.3,593.3 L1975.7,590.9 L1980.0,598.4 L1984.4,589.1 L1988.8,599.0 L1993.2,606.9 L1997.5,596.8 L2001.9,604.0 L2006.3,598.5 L2010.6,594.7 L2015.0,603.8 L2019.4,599.0 L2023.8,603.7 L2028.1,604.6 L2032.5,596.4 L2036.9,597.5 L2041.2,606.0 L2045.6,595.0 L2050.0,594.4 L2054.3,601.8 L2058.7,598.7 L2063.1,606.9 L2067.4,599.5 L2071.8,607.2 L2076.2,608.4 L2080.6,595.2 L2084.9,596.9 L2089.3,596.2 L2093.7,608.0 L2098.0,594.2 L2102.4,605.5 L2106.8,599.4 L2111.2,620.3 L2115.5,599.9 L2119.9,597.5 L2124.3,598.0 L2128.6,594.8 L2133.0,595.3 L2137.4,615.9 L2141.7,533.2 L2146.1,546.7 L2150.5,516.8 L2154.8,514.1 L2159.2,533.4 L2163.6,510.8 L2168.0,539.7 L2172.3,525.8 L2176.7,513.2 L2181.1,525.2 L2185.4,524.0 L2189.8,531.2 L2194.2,532.5 L2198.6,519.4 L2202.9,529.0 L2207.3,514.8 L2211.7,497.4 L2216.0,530.8 L2220.4,518.1 L2224.8,515.0 L2229.1,511.7 L2233.5,516.1 L2237.9,528.2 L2242.2,592.0 L2246.6,609.3 L2251.0,595.0 L2255.4,598.4 L2259.7,624.7 L2264.1,596.2 L2268.5,615.6 L2272.8,615.4 L2277.2,612.2 L2281.6,614.0 L2285.9,608.7 L2290.3,596.7 L2294.7,608.4 L2299.1,592.8 L2303.4,619.0 L2307.8,610.0 L2312.2,618.1 L2316.5,606.8 L2320.9,609.9 L2325.3,613.1 L2329.7,611.6 L2334.0,597.6 L2338.4,601.3 L2342.8,600.3 L2347.1,597.7 L2351.5,590.8 L2355.9,598.0 L2360.2,613.1 L2364.6,597.7 L2369.0,606.9 L2373.3,597.0 L2377.7,594.4 L2382.1,613.2 L2386.5,610.3 L2390.8,616.8 L2395.2,596.5 L2399.6,589.4 L2403.9,589.6 L2408.3,602.7 L2412.7,596.1 L2417.1,613.2 L2421.4,608.4 L2425.8,586.6 L2430.2,611.1 L2434.5,600.7 L2438.9,615.5 L2443.3,616.6 L2447.6,614.4 L2452.0,624.6 L2456.4,617.3 L2460.8,602.6 L2465.1,587.8 L2469.5,606.3 L2473.9,621.7 L2478.2,590.6 L2482.6,596.1 L2487.0,601.3 L2491.3,607.9 L2495.7,611.4 L2500.1,628.5 L2504.4,596.4 L2508.8,582.5 L2513.2,612.3 L2517.6,619.2 L2521.9,607.2 L2526.3,601.8 L2530.7,530.5 L2535.0,532.4 L2539.4,511.3 L2543.8,519.3 L2548.2,548.5 L2552.5,503.5 L2556.9,523.9 L2561.3,517.0 L2565.6,531.3 L2570.0,511.1 L2574.4,526.8 L2578.7,509.2 L2583.1,529.4 L2587.5,535.9 L2591.8,509.8 L2596.2,527.7 L2600.6,513.4 L2605.0,538.3 L2609.3,499.2 L2613.7,511.9 L2618.1,489.7 L2622.4,508.2 L2626.8,549.7 L2631.2,503.9 L2635.6,486.4 L2639.9,522.0 L2644.3,532.4 L2648.7,516.6 L2653.0,506.3 L2657.4,543.4 L2661.8,509.8 L2666.1,518.6 L2670.5,531.1 L2674.9,531.3 L2679.2,482.4 L2683.6,503.8 L2688.0,514.6 L2692.4,528.3 L2696.7,547.4 L2701.1,514.9 L2705.5,516.1 L2709.8,542.1 L2714.2,510.7 L2717.0,531.7" fill="none" stroke="#3598cd" stroke-width="3" stroke-linejoin="round"/><rect x="1670" y="434.7" width="1047" height="2" fill="rgba(0,0,0,0.095)"/><rect x="1670" y="519" width="1047" height="2" fill="rgba(0,0,0,0.095)"/><rect x="1670" y="602.8" width="1047" height="2" fill="rgba(0,0,0,0.095)"/><rect x="1670" y="686.4" width="1047" height="2" fill="#777"/><rect x="1865" y="687.4" width="2" height="9" fill="#666"/><text x="1866" y="718" text-anchor="middle" font-family="Liberation Sans" font-size="22" fill="#666">16:00</text><rect x="2127" y="687.4" width="2" height="9" fill="#666"/><text x="2128" y="718" text-anchor="middle" font-family="Liberation Sans" font-size="22" fill="#666">17:00</text><rect x="2389" y="687.4" width="2" height="9" fill="#666"/><text x="2390" y="718" text-anchor="middle" font-family="Liberation Sans" font-size="22" fill="#666">18:00</text><rect x="2651" y="687.4" width="2" height="9" fill="#666"/><text x="2652" y="718" text-anchor="middle" font-family="Liberation Sans" font-size="22" fill="#666">19:00</text><rect x="1734.5" y="687.4" width="1.5" height="5" fill="#888"/><rect x="1996.5" y="687.4" width="1.5" height="5" fill="#888"/><rect x="2258.5" y="687.4" width="1.5" height="5" fill="#888"/><rect x="2520.5" y="687.4" width="1.5" height="5" fill="#888"/><text x="1663" y="826.7" text-anchor="end" font-family="Liberation Sans" font-size="22" fill="#666">57.22</text><text x="1663" y="910.8" text-anchor="end" font-family="Liberation Sans" font-size="22" fill="#666">38.15</text><text x="1663" y="995" text-anchor="end" font-family="Liberation Sans" font-size="22" fill="#666">19.07</text><text x="1663" y="1079" text-anchor="end" font-family="Liberation Sans" font-size="22" fill="#666">0</text><path d="M1670.0,913.0 L1674.4,913.4 L1678.7,914.6 L1683.1,915.7 L1687.5,913.6 L1691.8,913.4 L1696.2,913.9 L1700.6,912.9 L1705.0,895.0 L1709.3,895.0 L1713.7,906.2 L1718.1,913.5 L1722.4,915.1 L1726.8,909.9 L1731.2,898.2 L1735.5,896.0 L1739.9,901.6 L1744.3,912.2 L1748.7,898.8 L1753.0,897.5 L1757.4,897.5 L1761.8,910.2 L1766.1,914.5 L1770.5,916.8 L1774.9,913.8 L1779.2,913.9 L1783.6,915.3 L1788.0,915.2 L1792.4,916.8 L1796.7,916.4 L1801.1,914.4 L1805.5,913.8 L1809.8,916.3 L1814.2,917.0 L1818.6,913.1 L1823.0,915.9 L1827.3,916.5 L1831.7,915.6 L1836.1,913.9 L1840.4,916.2 L1844.8,915.9 L1849.2,913.8 L1853.5,915.6 L1857.9,913.9 L1862.3,913.2 L1866.7,914.3 L1871.0,914.3 L1875.4,914.6 L1879.8,915.6 L1884.1,916.3 L1888.5,916.8 L1892.9,916.9 L1897.2,917.0 L1901.6,916.2 L1906.0,914.2 L1910.3,913.7 L1914.7,915.5 L1919.1,915.2 L1923.5,915.7 L1927.8,913.4 L1932.2,913.8 L1936.6,916.7 L1940.9,915.4 L1945.3,915.8 L1949.7,913.4 L1954.0,914.6 L1958.4,916.6 L1962.8,915.6 L1967.2,917.0 L1971.5,913.8 L1975.9,914.8 L1980.3,916.2 L1984.6,914.8 L1989.0,916.2 L1993.4,915.2 L1997.8,913.5 L2002.1,913.4 L2006.5,916.9 L2010.9,913.5 L2015.2,913.8 L2019.6,914.3 L2024.0,915.9 L2028.3,916.4 L2032.7,914.9 L2037.1,915.0 L2041.5,916.2 L2045.8,914.1 L2050.2,914.5 L2054.6,915.5 L2058.9,915.5 L2063.3,913.2 L2067.7,913.4 L2072.0,913.6 L2076.4,915.9 L2080.8,915.8 L2085.2,916.9 L2089.5,916.1 L2093.9,914.0 L2098.3,916.1 L2102.6,916.9 L2107.0,914.4 L2111.4,913.0 L2115.7,914.5 L2120.1,914.1 L2124.5,913.7 L2128.8,913.2 L2133.2,913.5 L2137.6,916.5 L2142.0,913.2 L2146.3,914.0 L2150.7,894.4 L2155.1,889.0 L2159.4,889.0 L2163.8,889.0 L2168.2,913.7 L2172.6,914.8 L2176.9,915.8 L2181.3,915.1 L2185.7,916.4 L2190.0,914.6 L2194.4,915.1 L2198.8,915.9 L2203.1,914.8 L2207.5,915.9 L2211.9,914.9 L2216.2,913.5 L2220.6,913.5 L2225.0,916.1 L2229.4,916.0 L2233.7,916.8 L2238.1,915.8 L2242.5,915.3 L2246.8,913.7 L2251.2,916.4 L2255.6,913.5 L2259.9,914.7 L2264.3,913.6 L2268.7,914.5 L2273.1,914.2 L2277.4,914.7 L2281.8,915.8 L2286.2,915.2 L2290.5,914.0 L2294.9,916.1 L2299.3,915.9 L2303.7,916.3 L2308.0,913.1 L2312.4,915.5 L2316.8,916.6 L2321.1,914.0 L2325.5,913.8 L2329.9,916.3 L2334.2,914.5 L2338.6,914.6 L2343.0,916.3 L2347.3,910.2 L2351.7,920.6 L2356.1,909.6 L2360.5,921.0 L2364.8,911.1 L2369.2,921.1 L2373.6,911.3 L2377.9,920.2 L2382.3,909.7 L2386.7,921.9 L2391.1,910.4 L2395.4,921.5 L2399.8,911.8 L2404.2,920.8 L2408.5,909.5 L2412.9,920.1 L2417.3,910.4 L2421.6,920.9 L2426.0,910.4 L2430.4,920.0 L2434.8,909.0 L2439.1,921.1 L2443.5,916.0 L2447.9,914.2 L2452.2,916.7 L2456.6,915.3 L2461.0,914.6 L2465.3,916.1 L2469.7,913.9 L2474.1,915.4 L2478.4,916.4 L2482.8,915.2 L2487.2,914.3 L2491.6,913.4 L2495.9,915.3 L2500.3,913.8 L2504.7,914.5 L2509.0,915.2 L2513.4,916.8 L2517.8,915.7 L2522.2,915.1 L2526.5,916.4 L2530.9,914.2 L2535.3,914.6 L2539.6,915.7 L2544.0,915.2 L2548.4,905.0 L2552.7,889.4 L2557.1,886.0 L2561.5,883.3 L2565.8,884.8 L2570.2,881.8 L2574.6,885.0 L2579.0,883.6 L2583.3,881.8 L2587.7,884.0 L2592.1,882.9 L2596.4,879.6 L2600.8,879.9 L2605.2,880.5 L2609.6,882.2 L2613.9,878.4 L2618.3,877.6 L2622.7,878.3 L2627.0,876.8 L2631.4,877.9 L2635.8,878.1 L2640.1,877.3 L2644.5,875.7 L2648.9,874.9 L2653.2,877.6 L2657.6,875.8 L2662.0,875.6 L2666.4,875.2 L2670.7,875.6 L2675.1,876.1 L2679.5,875.4 L2683.8,874.7 L2688.2,872.7 L2692.6,871.7 L2696.9,871.0 L2701.3,873.7 L2704.0,873.7 L2708.0,1071.0 L2717.0,1071.0 L2717.0,1072.0 L2708.0,1072.0 L2704.0,1072.0 L2701.3,1072.0 L2696.9,1072.0 L2692.6,1072.0 L2688.2,1072.0 L2683.8,1072.0 L2679.5,1072.0 L2675.1,1072.0 L2670.7,1072.0 L2666.4,1072.0 L2662.0,1072.0 L2657.6,1072.0 L2653.2,1072.0 L2648.9,1072.0 L2644.5,1072.0 L2640.1,1072.0 L2635.8,1072.0 L2631.4,1072.0 L2627.0,1072.0 L2622.7,1072.0 L2618.3,1072.0 L2613.9,1072.0 L2609.6,1072.0 L2605.2,1072.0 L2600.8,1072.0 L2596.4,1072.0 L2592.1,1072.0 L2587.7,1072.0 L2583.3,1072.0 L2579.0,1072.0 L2574.6,1072.0 L2570.2,1072.0 L2565.8,1072.0 L2561.5,1072.0 L2557.1,1072.0 L2552.7,1072.0 L2548.4,1072.0 L2544.0,1072.0 L2539.6,1072.0 L2535.3,1072.0 L2530.9,1072.0 L2526.5,1072.0 L2522.2,1072.0 L2517.8,1072.0 L2513.4,1072.0 L2509.0,1072.0 L2504.7,1072.0 L2500.3,1072.0 L2495.9,1072.0 L2491.6,1072.0 L2487.2,1072.0 L2482.8,1072.0 L2478.4,1072.0 L2474.1,1072.0 L2469.7,1072.0 L2465.3,1072.0 L2461.0,1072.0 L2456.6,1072.0 L2452.2,1072.0 L2447.9,1072.0 L2443.5,1072.0 L2439.1,1072.0 L2434.8,1072.0 L2430.4,1072.0 L2426.0,1072.0 L2421.6,1072.0 L2417.3,1072.0 L2412.9,1072.0 L2408.5,1072.0 L2404.2,1072.0 L2399.8,1072.0 L2395.4,1072.0 L2391.1,1072.0 L2386.7,1072.0 L2382.3,1072.0 L2377.9,1072.0 L2373.6,1072.0 L2369.2,1072.0 L2364.8,1072.0 L2360.5,1072.0 L2356.1,1072.0 L2351.7,1072.0 L2347.3,1072.0 L2343.0,1072.0 L2338.6,1072.0 L2334.2,1072.0 L2329.9,1072.0 L2325.5,1072.0 L2321.1,1072.0 L2316.8,1072.0 L2312.4,1072.0 L2308.0,1072.0 L2303.7,1072.0 L2299.3,1072.0 L2294.9,1072.0 L2290.5,1072.0 L2286.2,1072.0 L2281.8,1072.0 L2277.4,1072.0 L2273.1,1072.0 L2268.7,1072.0 L2264.3,1072.0 L2259.9,1072.0 L2255.6,1072.0 L2251.2,1072.0 L2246.8,1072.0 L2242.5,1072.0 L2238.1,1072.0 L2233.7,1072.0 L2229.4,1072.0 L2225.0,1072.0 L2220.6,1072.0 L2216.2,1072.0 L2211.9,1072.0 L2207.5,1072.0 L2203.1,1072.0 L2198.8,1072.0 L2194.4,1072.0 L2190.0,1072.0 L2185.7,1072.0 L2181.3,1072.0 L2176.9,1072.0 L2172.6,1072.0 L2168.2,1072.0 L2163.8,1072.0 L2159.4,1072.0 L2155.1,1072.0 L2150.7,1072.0 L2146.3,1072.0 L2142.0,1072.0 L2137.6,1072.0 L2133.2,1072.0 L2128.8,1072.0 L2124.5,1072.0 L2120.1,1072.0 L2115.7,1072.0 L2111.4,1072.0 L2107.0,1072.0 L2102.6,1072.0 L2098.3,1072.0 L2093.9,1072.0 L2089.5,1072.0 L2085.2,1072.0 L2080.8,1072.0 L2076.4,1072.0 L2072.0,1072.0 L2067.7,1072.0 L2063.3,1072.0 L2058.9,1072.0 L2054.6,1072.0 L2050.2,1072.0 L2045.8,1072.0 L2041.5,1072.0 L2037.1,1072.0 L2032.7,1072.0 L2028.3,1072.0 L2024.0,1072.0 L2019.6,1072.0 L2015.2,1072.0 L2010.9,1072.0 L2006.5,1072.0 L2002.1,1072.0 L1997.8,1072.0 L1993.4,1072.0 L1989.0,1072.0 L1984.6,1072.0 L1980.3,1072.0 L1975.9,1072.0 L1971.5,1072.0 L1967.2,1072.0 L1962.8,1072.0 L1958.4,1072.0 L1954.0,1072.0 L1949.7,1072.0 L1945.3,1072.0 L1940.9,1072.0 L1936.6,1072.0 L1932.2,1072.0 L1927.8,1072.0 L1923.5,1072.0 L1919.1,1072.0 L1914.7,1072.0 L1910.3,1072.0 L1906.0,1072.0 L1901.6,1072.0 L1897.2,1072.0 L1892.9,1072.0 L1888.5,1072.0 L1884.1,1072.0 L1879.8,1072.0 L1875.4,1072.0 L1871.0,1072.0 L1866.7,1072.0 L1862.3,1072.0 L1857.9,1072.0 L1853.5,1072.0 L1849.2,1072.0 L1844.8,1072.0 L1840.4,1072.0 L1836.1,1072.0 L1831.7,1072.0 L1827.3,1072.0 L1823.0,1072.0 L1818.6,1072.0 L1814.2,1072.0 L1809.8,1072.0 L1805.5,1072.0 L1801.1,1072.0 L1796.7,1072.0 L1792.4,1072.0 L1788.0,1072.0 L1783.6,1072.0 L1779.2,1072.0 L1774.9,1072.0 L1770.5,1072.0 L1766.1,1072.0 L1761.8,1072.0 L1757.4,1072.0 L1753.0,1072.0 L1748.7,1072.0 L1744.3,1072.0 L1739.9,1072.0 L1735.5,1072.0 L1731.2,1072.0 L1726.8,1072.0 L1722.4,1072.0 L1718.1,1072.0 L1713.7,1072.0 L1709.3,1072.0 L1705.0,1072.0 L1700.6,1072.0 L1696.2,1072.0 L1691.8,1072.0 L1687.5,1072.0 L1683.1,1072.0 L1678.7,1072.0 L1674.4,1072.0 L1670.0,1072.0 Z" fill="#baa3d1"/><path d="M1670.0,1032.5 L1674.4,1032.8 L1678.7,1033.0 L1683.1,1034.5 L1687.5,1033.5 L1691.8,1034.0 L1696.2,1032.5 L1700.6,1033.5 L1705.0,1034.3 L1709.3,1033.6 L1713.7,1034.6 L1718.1,1034.4 L1722.4,1033.2 L1726.8,1029.7 L1731.2,1016.5 L1735.5,1016.5 L1739.9,1024.1 L1744.3,1032.8 L1748.7,1016.5 L1753.0,1016.5 L1757.4,1022.8 L1761.8,1032.8 L1766.1,1032.5 L1770.5,1032.6 L1774.9,1034.6 L1779.2,1032.6 L1783.6,1032.7 L1788.0,1032.3 L1792.4,1032.4 L1796.7,1032.4 L1801.1,1033.1 L1805.5,1032.7 L1809.8,1033.0 L1814.2,1034.5 L1818.6,1032.7 L1823.0,1034.3 L1827.3,1034.1 L1831.7,1033.7 L1836.1,1033.7 L1840.4,1034.1 L1844.8,1033.7 L1849.2,1032.9 L1853.5,1033.1 L1857.9,1032.9 L1862.3,1033.3 L1866.7,1034.7 L1871.0,1033.3 L1875.4,1032.5 L1879.8,1033.4 L1884.1,1034.3 L1888.5,1033.4 L1892.9,1034.0 L1897.2,1032.5 L1901.6,1032.4 L1906.0,1033.9 L1910.3,1032.4 L1914.7,1033.0 L1919.1,1033.2 L1923.5,1032.8 L1927.8,1032.4 L1932.2,1032.3 L1936.6,1034.6 L1940.9,1034.0 L1945.3,1034.6 L1949.7,1033.5 L1954.0,1034.6 L1958.4,1034.4 L1962.8,1033.8 L1967.2,1033.6 L1971.5,1033.5 L1975.9,1032.8 L1980.3,1033.2 L1984.6,1034.0 L1989.0,1032.8 L1993.4,1034.3 L1997.8,1033.5 L2002.1,1033.8 L2006.5,1034.3 L2010.9,1033.9 L2015.2,1032.6 L2019.6,1032.9 L2024.0,1032.3 L2028.3,1032.4 L2032.7,1034.6 L2037.1,1033.7 L2041.5,1034.6 L2045.8,1034.2 L2050.2,1033.1 L2054.6,1034.6 L2058.9,1034.5 L2063.3,1033.4 L2067.7,1032.5 L2072.0,1033.1 L2076.4,1032.7 L2080.8,1033.2 L2085.2,1032.5 L2089.5,1034.0 L2093.9,1034.7 L2098.3,1032.8 L2102.6,1034.2 L2107.0,1033.7 L2111.4,1033.5 L2115.7,1034.5 L2120.1,1033.2 L2124.5,1034.3 L2128.8,1032.4 L2133.2,1034.6 L2137.6,1032.7 L2142.0,1032.3 L2146.3,1034.4 L2150.7,1034.0 L2155.1,1033.9 L2159.4,1034.1 L2163.8,1033.2 L2168.2,1032.6 L2172.6,1033.1 L2176.9,1034.6 L2181.3,1034.7 L2185.7,1032.9 L2190.0,1033.4 L2194.4,1033.4 L2198.8,1034.5 L2203.1,1032.3 L2207.5,1034.3 L2211.9,1032.9 L2216.2,1033.6 L2220.6,1032.6 L2225.0,1032.5 L2229.4,1034.4 L2233.7,1033.5 L2238.1,1034.6 L2242.5,1034.4 L2246.8,1034.1 L2251.2,1032.5 L2255.6,1033.7 L2259.9,1034.7 L2264.3,1033.5 L2268.7,1032.5 L2273.1,1032.7 L2277.4,1034.7 L2281.8,1034.6 L2286.2,1032.9 L2290.5,1033.1 L2294.9,1034.0 L2299.3,1033.5 L2303.7,1032.7 L2308.0,1034.7 L2312.4,1033.8 L2316.8,1033.2 L2321.1,1032.4 L2325.5,1033.5 L2329.9,1034.1 L2334.2,1032.7 L2338.6,1032.5 L2343.0,1034.0 L2347.3,1034.5 L2351.7,1033.2 L2356.1,1033.4 L2360.5,1033.8 L2364.8,1033.5 L2369.2,1032.6 L2373.6,1033.0 L2377.9,1032.8 L2382.3,1032.8 L2386.7,1032.5 L2391.1,1033.2 L2395.4,1032.8 L2399.8,1034.3 L2404.2,1033.1 L2408.5,1034.6 L2412.9,1034.2 L2417.3,1032.9 L2421.6,1032.7 L2426.0,1033.7 L2430.4,1033.4 L2434.8,1033.6 L2439.1,1032.6 L2443.5,1033.6 L2447.9,1034.1 L2452.2,1033.4 L2456.6,1032.9 L2461.0,1034.5 L2465.3,1033.0 L2469.7,1034.7 L2474.1,1034.0 L2478.4,1032.3 L2482.8,1033.4 L2487.2,1032.7 L2491.6,1034.2 L2495.9,1033.3 L2500.3,1032.5 L2504.7,1034.6 L2509.0,1034.2 L2513.4,1033.8 L2517.8,1033.7 L2522.2,1032.5 L2526.5,1034.7 L2530.9,1033.0 L2535.3,1033.6 L2539.6,1033.5 L2544.0,1033.4 L2548.4,1032.3 L2552.7,1034.4 L2557.1,1033.5 L2561.5,1033.2 L2565.8,1034.4 L2570.2,1034.4 L2574.6,1034.0 L2579.0,1034.5 L2583.3,1033.1 L2587.7,1032.6 L2592.1,1033.1 L2596.4,1033.7 L2600.8,1034.2 L2605.2,1034.1 L2609.6,1033.8 L2613.9,1033.7 L2618.3,1033.9 L2622.7,1033.7 L2627.0,1032.3 L2631.4,1033.6 L2635.8,1033.0 L2640.1,1032.5 L2644.5,1033.8 L2648.9,1034.3 L2653.2,1033.0 L2657.6,1033.9 L2662.0,1033.8 L2666.4,1033.9 L2670.7,1034.4 L2675.1,1034.0 L2679.5,1032.5 L2683.8,1033.8 L2688.2,1033.1 L2692.6,1033.3 L2696.9,1033.9 L2701.3,1032.7 L2704.0,1032.7 L2708.0,1072.0 L2717.0,1072.0 L2717.0,1072.0 L2708.0,1072.0 L2704.0,1072.0 L2701.3,1072.0 L2696.9,1072.0 L2692.6,1072.0 L2688.2,1072.0 L2683.8,1072.0 L2679.5,1072.0 L2675.1,1072.0 L2670.7,1072.0 L2666.4,1072.0 L2662.0,1072.0 L2657.6,1072.0 L2653.2,1072.0 L2648.9,1072.0 L2644.5,1072.0 L2640.1,1072.0 L2635.8,1072.0 L2631.4,1072.0 L2627.0,1072.0 L2622.7,1072.0 L2618.3,1072.0 L2613.9,1072.0 L2609.6,1072.0 L2605.2,1072.0 L2600.8,1072.0 L2596.4,1072.0 L2592.1,1072.0 L2587.7,1072.0 L2583.3,1072.0 L2579.0,1072.0 L2574.6,1072.0 L2570.2,1072.0 L2565.8,1072.0 L2561.5,1072.0 L2557.1,1072.0 L2552.7,1072.0 L2548.4,1072.0 L2544.0,1072.0 L2539.6,1072.0 L2535.3,1072.0 L2530.9,1072.0 L2526.5,1072.0 L2522.2,1072.0 L2517.8,1072.0 L2513.4,1072.0 L2509.0,1072.0 L2504.7,1072.0 L2500.3,1072.0 L2495.9,1072.0 L2491.6,1072.0 L2487.2,1072.0 L2482.8,1072.0 L2478.4,1072.0 L2474.1,1072.0 L2469.7,1072.0 L2465.3,1072.0 L2461.0,1072.0 L2456.6,1072.0 L2452.2,1072.0 L2447.9,1072.0 L2443.5,1072.0 L2439.1,1072.0 L2434.8,1072.0 L2430.4,1072.0 L2426.0,1072.0 L2421.6,1072.0 L2417.3,1072.0 L2412.9,1072.0 L2408.5,1072.0 L2404.2,1072.0 L2399.8,1072.0 L2395.4,1072.0 L2391.1,1072.0 L2386.7,1072.0 L2382.3,1072.0 L2377.9,1072.0 L2373.6,1072.0 L2369.2,1072.0 L2364.8,1072.0 L2360.5,1072.0 L2356.1,1072.0 L2351.7,1072.0 L2347.3,1072.0 L2343.0,1072.0 L2338.6,1072.0 L2334.2,1072.0 L2329.9,1072.0 L2325.5,1072.0 L2321.1,1072.0 L2316.8,1072.0 L2312.4,1072.0 L2308.0,1072.0 L2303.7,1072.0 L2299.3,1072.0 L2294.9,1072.0 L2290.5,1072.0 L2286.2,1072.0 L2281.8,1072.0 L2277.4,1072.0 L2273.1,1072.0 L2268.7,1072.0 L2264.3,1072.0 L2259.9,1072.0 L2255.6,1072.0 L2251.2,1072.0 L2246.8,1072.0 L2242.5,1072.0 L2238.1,1072.0 L2233.7,1072.0 L2229.4,1072.0 L2225.0,1072.0 L2220.6,1072.0 L2216.2,1072.0 L2211.9,1072.0 L2207.5,1072.0 L2203.1,1072.0 L2198.8,1072.0 L2194.4,1072.0 L2190.0,1072.0 L2185.7,1072.0 L2181.3,1072.0 L2176.9,1072.0 L2172.6,1072.0 L2168.2,1072.0 L2163.8,1072.0 L2159.4,1072.0 L2155.1,1072.0 L2150.7,1072.0 L2146.3,1072.0 L2142.0,1072.0 L2137.6,1072.0 L2133.2,1072.0 L2128.8,1072.0 L2124.5,1072.0 L2120.1,1072.0 L2115.7,1072.0 L2111.4,1072.0 L2107.0,1072.0 L2102.6,1072.0 L2098.3,1072.0 L2093.9,1072.0 L2089.5,1072.0 L2085.2,1072.0 L2080.8,1072.0 L2076.4,1072.0 L2072.0,1072.0 L2067.7,1072.0 L2063.3,1072.0 L2058.9,1072.0 L2054.6,1072.0 L2050.2,1072.0 L2045.8,1072.0 L2041.5,1072.0 L2037.1,1072.0 L2032.7,1072.0 L2028.3,1072.0 L2024.0,1072.0 L2019.6,1072.0 L2015.2,1072.0 L2010.9,1072.0 L2006.5,1072.0 L2002.1,1072.0 L1997.8,1072.0 L1993.4,1072.0 L1989.0,1072.0 L1984.6,1072.0 L1980.3,1072.0 L1975.9,1072.0 L1971.5,1072.0 L1967.2,1072.0 L1962.8,1072.0 L1958.4,1072.0 L1954.0,1072.0 L1949.7,1072.0 L1945.3,1072.0 L1940.9,1072.0 L1936.6,1072.0 L1932.2,1072.0 L1927.8,1072.0 L1923.5,1072.0 L1919.1,1072.0 L1914.7,1072.0 L1910.3,1072.0 L1906.0,1072.0 L1901.6,1072.0 L1897.2,1072.0 L1892.9,1072.0 L1888.5,1072.0 L1884.1,1072.0 L1879.8,1072.0 L1875.4,1072.0 L1871.0,1072.0 L1866.7,1072.0 L1862.3,1072.0 L1857.9,1072.0 L1853.5,1072.0 L1849.2,1072.0 L1844.8,1072.0 L1840.4,1072.0 L1836.1,1072.0 L1831.7,1072.0 L1827.3,1072.0 L1823.0,1072.0 L1818.6,1072.0 L1814.2,1072.0 L1809.8,1072.0 L1805.5,1072.0 L1801.1,1072.0 L1796.7,1072.0 L1792.4,1072.0 L1788.0,1072.0 L1783.6,1072.0 L1779.2,1072.0 L1774.9,1072.0 L1770.5,1072.0 L1766.1,1072.0 L1761.8,1072.0 L1757.4,1072.0 L1753.0,1072.0 L1748.7,1072.0 L1744.3,1072.0 L1739.9,1072.0 L1735.5,1072.0 L1731.2,1072.0 L1726.8,1072.0 L1722.4,1072.0 L1718.1,1072.0 L1713.7,1072.0 L1709.3,1072.0 L1705.0,1072.0 L1700.6,1072.0 L1696.2,1072.0 L1691.8,1072.0 L1687.5,1072.0 L1683.1,1072.0 L1678.7,1072.0 L1674.4,1072.0 L1670.0,1072.0 Z" fill="#feea9f"/><rect x="2144" y="1069" width="560" height="2" fill="#f2c200" opacity="0.8"/><rect x="1670" y="818.7" width="1047" height="2" fill="rgba(0,0,0,0.095)"/><rect x="1670" y="902.8" width="1047" height="2" fill="rgba(0,0,0,0.095)"/><rect x="1670" y="987" width="1047" height="2" fill="rgba(0,0,0,0.095)"/><rect x="1670" y="1071" width="1047" height="2" fill="#777"/><rect x="1865" y="1072" width="2" height="9" fill="#666"/><text x="1866" y="1103" text-anchor="middle" font-family="Liberation Sans" font-size="22" fill="#666">16:00</text><rect x="2127" y="1072" width="2" height="9" fill="#666"/><text x="2128" y="1103" text-anchor="middle" font-family="Liberation Sans" font-size="22" fill="#666">17:00</text><rect x="2389" y="1072" width="2" height="9" fill="#666"/><text x="2390" y="1103" text-anchor="middle" font-family="Liberation Sans" font-size="22" fill="#666">18:00</text><rect x="2651" y="1072" width="2" height="9" fill="#666"/><text x="2652" y="1103" text-anchor="middle" font-family="Liberation Sans" font-size="22" fill="#666">19:00</text><rect x="1734.5" y="1072" width="1.5" height="5" fill="#888"/><rect x="1996.5" y="1072" width="1.5" height="5" fill="#888"/><rect x="2258.5" y="1072" width="1.5" height="5" fill="#888"/><rect x="2520.5" y="1072" width="1.5" height="5" fill="#888"/><path d="M1670.0,913.0 L1674.4,913.4 L1678.7,914.6 L1683.1,915.7 L1687.5,913.6 L1691.8,913.4 L1696.2,913.9 L1700.6,912.9 L1705.0,895.0 L1709.3,895.0 L1713.7,906.2 L1718.1,913.5 L1722.4,915.1 L1726.8,909.9 L1731.2,898.2 L1735.5,896.0 L1739.9,901.6 L1744.3,912.2 L1748.7,898.8 L1753.0,897.5 L1757.4,897.5 L1761.8,910.2 L1766.1,914.5 L1770.5,916.8 L1774.9,913.8 L1779.2,913.9 L1783.6,915.3 L1788.0,915.2 L1792.4,916.8 L1796.7,916.4 L1801.1,914.4 L1805.5,913.8 L1809.8,916.3 L1814.2,917.0 L1818.6,913.1 L1823.0,915.9 L1827.3,916.5 L1831.7,915.6 L1836.1,913.9 L1840.4,916.2 L1844.8,915.9 L1849.2,913.8 L1853.5,915.6 L1857.9,913.9 L1862.3,913.2 L1866.7,914.3 L1871.0,914.3 L1875.4,914.6 L1879.8,915.6 L1884.1,916.3 L1888.5,916.8 L1892.9,916.9 L1897.2,917.0 L1901.6,916.2 L1906.0,914.2 L1910.3,913.7 L1914.7,915.5 L1919.1,915.2 L1923.5,915.7 L1927.8,913.4 L1932.2,913.8 L1936.6,916.7 L1940.9,915.4 L1945.3,915.8 L1949.7,913.4 L1954.0,914.6 L1958.4,916.6 L1962.8,915.6 L1967.2,917.0 L1971.5,913.8 L1975.9,914.8 L1980.3,916.2 L1984.6,914.8 L1989.0,916.2 L1993.4,915.2 L1997.8,913.5 L2002.1,913.4 L2006.5,916.9 L2010.9,913.5 L2015.2,913.8 L2019.6,914.3 L2024.0,915.9 L2028.3,916.4 L2032.7,914.9 L2037.1,915.0 L2041.5,916.2 L2045.8,914.1 L2050.2,914.5 L2054.6,915.5 L2058.9,915.5 L2063.3,913.2 L2067.7,913.4 L2072.0,913.6 L2076.4,915.9 L2080.8,915.8 L2085.2,916.9 L2089.5,916.1 L2093.9,914.0 L2098.3,916.1 L2102.6,916.9 L2107.0,914.4 L2111.4,913.0 L2115.7,914.5 L2120.1,914.1 L2124.5,913.7 L2128.8,913.2 L2133.2,913.5 L2137.6,916.5 L2142.0,913.2 L2146.3,914.0 L2150.7,894.4 L2155.1,889.0 L2159.4,889.0 L2163.8,889.0 L2168.2,913.7 L2172.6,914.8 L2176.9,915.8 L2181.3,915.1 L2185.7,916.4 L2190.0,914.6 L2194.4,915.1 L2198.8,915.9 L2203.1,914.8 L2207.5,915.9 L2211.9,914.9 L2216.2,913.5 L2220.6,913.5 L2225.0,916.1 L2229.4,916.0 L2233.7,916.8 L2238.1,915.8 L2242.5,915.3 L2246.8,913.7 L2251.2,916.4 L2255.6,913.5 L2259.9,914.7 L2264.3,913.6 L2268.7,914.5 L2273.1,914.2 L2277.4,914.7 L2281.8,915.8 L2286.2,915.2 L2290.5,914.0 L2294.9,916.1 L2299.3,915.9 L2303.7,916.3 L2308.0,913.1 L2312.4,915.5 L2316.8,916.6 L2321.1,914.0 L2325.5,913.8 L2329.9,916.3 L2334.2,914.5 L2338.6,914.6 L2343.0,916.3 L2347.3,910.2 L2351.7,920.6 L2356.1,909.6 L2360.5,921.0 L2364.8,911.1 L2369.2,921.1 L2373.6,911.3 L2377.9,920.2 L2382.3,909.7 L2386.7,921.9 L2391.1,910.4 L2395.4,921.5 L2399.8,911.8 L2404.2,920.8 L2408.5,909.5 L2412.9,920.1 L2417.3,910.4 L2421.6,920.9 L2426.0,910.4 L2430.4,920.0 L2434.8,909.0 L2439.1,921.1 L2443.5,916.0 L2447.9,914.2 L2452.2,916.7 L2456.6,915.3 L2461.0,914.6 L2465.3,916.1 L2469.7,913.9 L2474.1,915.4 L2478.4,916.4 L2482.8,915.2 L2487.2,914.3 L2491.6,913.4 L2495.9,915.3 L2500.3,913.8 L2504.7,914.5 L2509.0,915.2 L2513.4,916.8 L2517.8,915.7 L2522.2,915.1 L2526.5,916.4 L2530.9,914.2 L2535.3,914.6 L2539.6,915.7 L2544.0,915.2 L2548.4,905.0 L2552.7,889.4 L2557.1,886.0 L2561.5,883.3 L2565.8,884.8 L2570.2,881.8 L2574.6,885.0 L2579.0,883.6 L2583.3,881.8 L2587.7,884.0 L2592.1,882.9 L2596.4,879.6 L2600.8,879.9 L2605.2,880.5 L2609.6,882.2 L2613.9,878.4 L2618.3,877.6 L2622.7,878.3 L2627.0,876.8 L2631.4,877.9 L2635.8,878.1 L2640.1,877.3 L2644.5,875.7 L2648.9,874.9 L2653.2,877.6 L2657.6,875.8 L2662.0,875.6 L2666.4,875.2 L2670.7,875.6 L2675.1,876.1 L2679.5,875.4 L2683.8,874.7 L2688.2,872.7 L2692.6,871.7 L2696.9,871.0 L2701.3,873.7 L2704.0,873.7 L2708.0,1071.0 L2717.0,1071.0" fill="none" stroke="#3598cd" stroke-width="3.5" stroke-linejoin="round"/>
</svg>
</body></html>
